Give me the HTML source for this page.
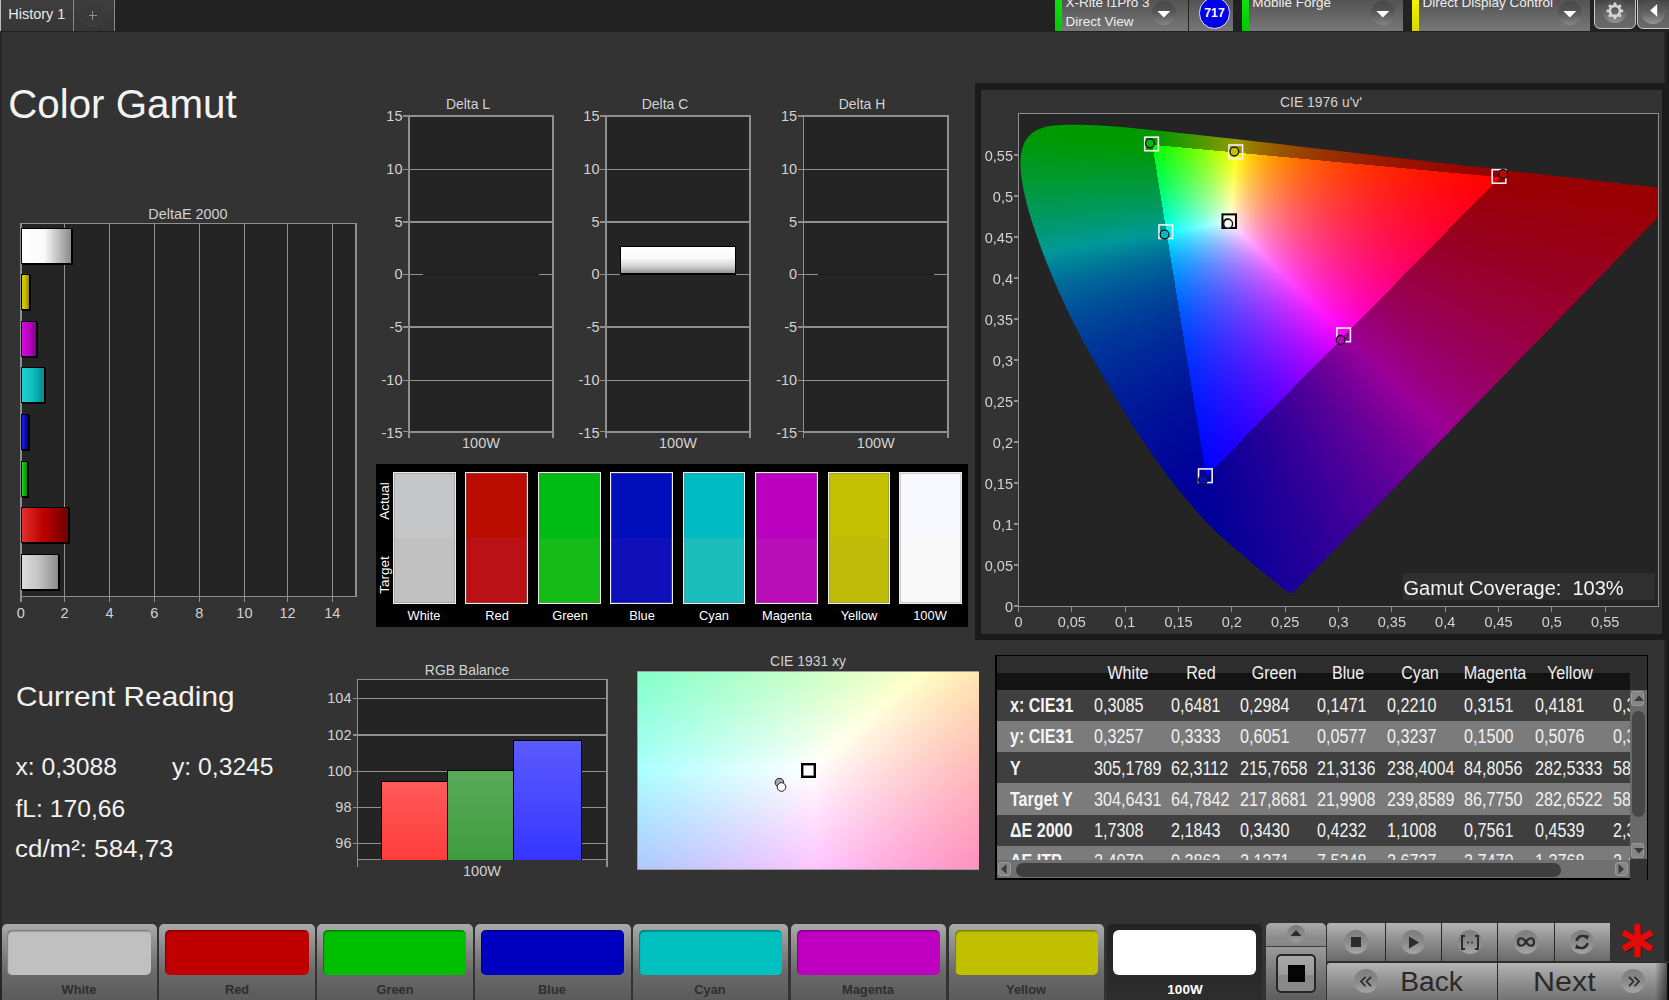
<!DOCTYPE html>
<html><head><meta charset="utf-8"><style>
html,body{margin:0;padding:0;}
body{width:1669px;height:1000px;overflow:hidden;position:relative;background:#333;font-family:"Liberation Sans",sans-serif;}
.r{position:absolute;box-sizing:border-box;}
svg.r{overflow:visible}
.t{position:absolute;white-space:nowrap;}
</style></head><body>
<div class="r" style="left:0.00px;top:0.00px;width:1669.00px;height:1000.00px;background:#333333"></div>
<div class="r" style="left:0.00px;top:32.00px;width:1.50px;height:968.00px;background:#262626"></div>
<div class="r" style="left:1664.00px;top:32.00px;width:5.00px;height:968.00px;background:linear-gradient(90deg,#2a2a2a,#141414)"></div>
<div class="r" style="left:0.00px;top:0.00px;width:1669.00px;height:32.00px;background:#222222"></div>
<div class="r" style="left:0.00px;top:0.00px;width:73.00px;height:31.00px;background:linear-gradient(#3e3e3e,#363636)"></div>
<div class="r" style="left:0.00px;top:0.00px;width:1.20px;height:31.00px;background:#bdbdbd"></div>
<div class="r" style="left:73.00px;top:0.00px;width:1.20px;height:31.00px;background:#8a8a8a"></div>
<div class="r" style="left:74.20px;top:0.00px;width:39.80px;height:31.00px;background:linear-gradient(#3e3e3e,#363636)"></div>
<div class="r" style="left:114.00px;top:0.00px;width:1.30px;height:31.00px;background:#8a8a8a"></div>
<div class="r" style="left:81px;top:4px;width:23px;height:23px;border-radius:50%;background:radial-gradient(circle at 50% 40%,#3a3a3a 55%,#444 100%)"></div>
<div class="t" style="left:8.20px;top:6.83px;font-size:14.5px;line-height:14.5px;color:#e8e8e8;font-weight:normal;">History 1</div>
<div class="r" style="left:88.50px;top:15.00px;width:8.00px;height:1.20px;background:#8e8e8e"></div>
<div class="r" style="left:91.90px;top:11.20px;width:1.20px;height:8.80px;background:#8e8e8e"></div>
<div class="r" style="left:1055.40px;top:0.00px;width:132.60px;height:31.00px;background:linear-gradient(#535353,#787878)"></div>
<div class="r" style="left:1055.40px;top:0.00px;width:7.00px;height:31.00px;background:linear-gradient(#10e010,#00c800)"></div>
<div class="r" style="left:1189.00px;top:0.00px;width:44.00px;height:31.00px;background:linear-gradient(#535353,#787878)"></div>
<div class="r" style="left:1241.50px;top:0.00px;width:161.70px;height:31.00px;background:linear-gradient(#535353,#787878)"></div>
<div class="r" style="left:1241.50px;top:0.00px;width:7.00px;height:31.00px;background:linear-gradient(#10e010,#00c800)"></div>
<div class="r" style="left:1411.50px;top:0.00px;width:178.50px;height:31.00px;background:linear-gradient(#535353,#787878)"></div>
<div class="r" style="left:1411.50px;top:0.00px;width:7.00px;height:31.00px;background:linear-gradient(#f4f400,#d8d800)"></div>
<div class="t" style="left:1065.60px;top:-3.63px;font-size:13.5px;line-height:13.5px;color:#eeeeee;font-weight:normal;">X-Rite i1Pro 3</div>
<div class="t" style="left:1065.60px;top:15.47px;font-size:13.5px;line-height:13.5px;color:#eeeeee;font-weight:normal;">Direct View</div>
<div class="t" style="left:1252.20px;top:-3.63px;font-size:13.5px;line-height:13.5px;color:#eeeeee;font-weight:normal;">Mobile Forge</div>
<div class="t" style="left:1422.50px;top:-3.63px;font-size:13.5px;line-height:13.5px;color:#eeeeee;font-weight:normal;">Direct Display Control</div>
<div class="r" style="left:1152.4px;top:1.0px;width:23.6px;height:23.6px;border-radius:50%;background:linear-gradient(#474747,#555 45%,#6a6a6a 70%,#858585)"></div>
<svg class="r" style="left:1157.4px;top:10.8px" width="14" height="8"><path d="M0.3 0 L13.3 0 L6.8 6.6 Z" fill="#fff"/></svg>
<div class="r" style="left:1371.3px;top:1.0px;width:23.6px;height:23.6px;border-radius:50%;background:linear-gradient(#474747,#555 45%,#6a6a6a 70%,#858585)"></div>
<svg class="r" style="left:1376.3px;top:10.8px" width="14" height="8"><path d="M0.3 0 L13.3 0 L6.8 6.6 Z" fill="#fff"/></svg>
<div class="r" style="left:1558.2px;top:1.0px;width:23.6px;height:23.6px;border-radius:50%;background:linear-gradient(#474747,#555 45%,#6a6a6a 70%,#858585)"></div>
<svg class="r" style="left:1563.2px;top:10.8px" width="14" height="8"><path d="M0.3 0 L13.3 0 L6.8 6.6 Z" fill="#fff"/></svg>
<div class="r" style="left:1198.6px;top:-2.9px;width:31.8px;height:31.8px;border-radius:50%;background:#0000e6;border:1.2px solid #e0e0ff"></div>
<div class="t" style="left:1214.50px;top:7.47px;font-size:12.2px;line-height:12.2px;color:#ffffff;font-weight:bold;transform:translateX(-50%) scaleX(1.0);transform-origin:50% 0;">717</div>
<div class="r" style="left:1593.7px;top:-3px;width:42px;height:31.7px;border:1.2px solid #c8c8c8;border-radius:0 0 6px 6px;background:linear-gradient(#3e3e3e,#5c5c5c 40%,#6a6a6a)"></div>
<div class="r" style="left:1603px;top:-0.8px;width:24px;height:24px;border-radius:50%;background:linear-gradient(#4c4c4c,#5c5c5c 45%,#7a7a7a 75%,#959595)"></div>
<svg class="r" style="left:1606px;top:2px" width="18" height="18"><g transform="translate(8.9,8.9)" fill="#d4d4d4"><rect x="-1.45" y="-8.3" width="2.9" height="4" rx="0.6" transform="rotate(0)"/><rect x="-1.45" y="-8.3" width="2.9" height="4" rx="0.6" transform="rotate(45)"/><rect x="-1.45" y="-8.3" width="2.9" height="4" rx="0.6" transform="rotate(90)"/><rect x="-1.45" y="-8.3" width="2.9" height="4" rx="0.6" transform="rotate(135)"/><rect x="-1.45" y="-8.3" width="2.9" height="4" rx="0.6" transform="rotate(180)"/><rect x="-1.45" y="-8.3" width="2.9" height="4" rx="0.6" transform="rotate(225)"/><rect x="-1.45" y="-8.3" width="2.9" height="4" rx="0.6" transform="rotate(270)"/><rect x="-1.45" y="-8.3" width="2.9" height="4" rx="0.6" transform="rotate(315)"/><path d="M6.4 0 A6.4 6.4 0 1 0 -6.4 0 A6.4 6.4 0 1 0 6.4 0 Z M3.7 0 A3.7 3.7 0 1 1 -3.7 0 A3.7 3.7 0 1 1 3.7 0 Z" fill-rule="evenodd"/></g></svg>
<div class="r" style="left:1636.8px;top:-3px;width:40px;height:31.7px;border:1.2px solid #c8c8c8;border-radius:0 0 6px 6px;background:linear-gradient(#3e3e3e,#5c5c5c 40%,#6a6a6a)"></div>
<div class="r" style="left:1641.3px;top:0px;width:23.5px;height:23.5px;border-radius:50%;background:linear-gradient(#4c4c4c,#5c5c5c 45%,#7a7a7a 75%,#959595)"></div>
<svg class="r" style="left:1649.8px;top:4px" width="8" height="14"><path d="M7.2 0 L7.2 12.8 L0.2 6.4 Z" fill="#fff"/></svg>
<div class="t" style="left:8.20px;top:85.09px;font-size:40.3px;line-height:40.3px;color:#f2f2f2;font-weight:normal;">Color Gamut</div>
<div class="t" style="left:188.30px;top:205.80px;font-size:15.0px;line-height:15.0px;color:#d2d2d2;font-weight:normal;transform:translateX(-50%) scaleX(0.96);transform-origin:50% 0;">DeltaE 2000</div>
<div class="r" style="left:20.80px;top:223.50px;width:335.40px;height:372.80px;background:#242424"></div>
<div class="r" style="left:63.80px;top:223.50px;width:1.40px;height:372.80px;background:#8f8f8f"></div>
<div class="r" style="left:108.80px;top:223.50px;width:1.40px;height:372.80px;background:#8f8f8f"></div>
<div class="r" style="left:153.70px;top:223.50px;width:1.40px;height:372.80px;background:#8f8f8f"></div>
<div class="r" style="left:198.60px;top:223.50px;width:1.40px;height:372.80px;background:#8f8f8f"></div>
<div class="r" style="left:243.70px;top:223.50px;width:1.40px;height:372.80px;background:#8f8f8f"></div>
<div class="r" style="left:286.80px;top:223.50px;width:1.40px;height:372.80px;background:#8f8f8f"></div>
<div class="r" style="left:331.60px;top:223.50px;width:1.40px;height:372.80px;background:#8f8f8f"></div>
<div class="r" style="left:20.00px;top:222.70px;width:337.00px;height:1.60px;background:#8f8f8f"></div>
<div class="r" style="left:20.00px;top:223.50px;width:1.60px;height:378.80px;background:#8f8f8f"></div>
<div class="r" style="left:355.40px;top:223.50px;width:1.60px;height:372.80px;background:#8f8f8f"></div>
<div class="r" style="left:20.80px;top:595.50px;width:336.20px;height:1.60px;background:#8f8f8f"></div>
<div class="r" style="left:20.10px;top:596.30px;width:1.40px;height:6.00px;background:#8f8f8f"></div>
<div class="t" style="left:20.80px;top:606.23px;font-size:14.5px;line-height:14.5px;color:#d2d2d2;font-weight:normal;transform:translateX(-50%) scaleX(1.0);transform-origin:50% 0;">0</div>
<div class="r" style="left:63.80px;top:596.30px;width:1.40px;height:6.00px;background:#8f8f8f"></div>
<div class="t" style="left:64.50px;top:606.23px;font-size:14.5px;line-height:14.5px;color:#d2d2d2;font-weight:normal;transform:translateX(-50%) scaleX(1.0);transform-origin:50% 0;">2</div>
<div class="r" style="left:108.80px;top:596.30px;width:1.40px;height:6.00px;background:#8f8f8f"></div>
<div class="t" style="left:109.50px;top:606.23px;font-size:14.5px;line-height:14.5px;color:#d2d2d2;font-weight:normal;transform:translateX(-50%) scaleX(1.0);transform-origin:50% 0;">4</div>
<div class="r" style="left:153.70px;top:596.30px;width:1.40px;height:6.00px;background:#8f8f8f"></div>
<div class="t" style="left:154.40px;top:606.23px;font-size:14.5px;line-height:14.5px;color:#d2d2d2;font-weight:normal;transform:translateX(-50%) scaleX(1.0);transform-origin:50% 0;">6</div>
<div class="r" style="left:198.60px;top:596.30px;width:1.40px;height:6.00px;background:#8f8f8f"></div>
<div class="t" style="left:199.30px;top:606.23px;font-size:14.5px;line-height:14.5px;color:#d2d2d2;font-weight:normal;transform:translateX(-50%) scaleX(1.0);transform-origin:50% 0;">8</div>
<div class="r" style="left:243.70px;top:596.30px;width:1.40px;height:6.00px;background:#8f8f8f"></div>
<div class="t" style="left:244.40px;top:606.23px;font-size:14.5px;line-height:14.5px;color:#d2d2d2;font-weight:normal;transform:translateX(-50%) scaleX(1.0);transform-origin:50% 0;">10</div>
<div class="r" style="left:286.80px;top:596.30px;width:1.40px;height:6.00px;background:#8f8f8f"></div>
<div class="t" style="left:287.50px;top:606.23px;font-size:14.5px;line-height:14.5px;color:#d2d2d2;font-weight:normal;transform:translateX(-50%) scaleX(1.0);transform-origin:50% 0;">12</div>
<div class="r" style="left:331.60px;top:596.30px;width:1.40px;height:6.00px;background:#8f8f8f"></div>
<div class="t" style="left:332.30px;top:606.23px;font-size:14.5px;line-height:14.5px;color:#d2d2d2;font-weight:normal;transform:translateX(-50%) scaleX(1.0);transform-origin:50% 0;">14</div>
<div class="r" style="left:21.3px;top:227.5px;width:50.8px;height:36px;border:1px solid #000;background:linear-gradient(90deg,#ffffff,#fafafa 45%,#8a8a8a);box-shadow:1px 1px 0 #000"></div>
<div class="r" style="left:21.3px;top:274.1px;width:8.9px;height:36px;border:1px solid #000;background:linear-gradient(90deg,#d0c800,#c8c000 45%,#908800);box-shadow:1px 1px 0 #000"></div>
<div class="r" style="left:21.3px;top:320.7px;width:15.7px;height:36px;border:1px solid #000;background:linear-gradient(90deg,#d010d8,#c000c8 45%,#800088);box-shadow:1px 1px 0 #000"></div>
<div class="r" style="left:21.3px;top:367.3px;width:23.3px;height:36px;border:1px solid #000;background:linear-gradient(90deg,#20d0d0,#10c0c0 45%,#008c8c);box-shadow:1px 1px 0 #000"></div>
<div class="r" style="left:21.3px;top:413.9px;width:8.2px;height:36px;border:1px solid #000;background:linear-gradient(90deg,#2020d8,#1010c0 45%,#000088);box-shadow:1px 1px 0 #000"></div>
<div class="r" style="left:21.3px;top:460.5px;width:6.4px;height:36px;border:1px solid #000;background:linear-gradient(90deg,#20d020,#10b810 45%,#008800);box-shadow:1px 1px 0 #000"></div>
<div class="r" style="left:21.3px;top:507.1px;width:47.5px;height:36px;border:1px solid #000;background:linear-gradient(90deg,#e03030,#c00000 45%,#700000);box-shadow:1px 1px 0 #000"></div>
<div class="r" style="left:21.3px;top:553.7px;width:37.4px;height:36px;border:1px solid #000;background:linear-gradient(90deg,#dcdcdc,#c4c4c4 45%,#8c8c8c);box-shadow:1px 1px 0 #000"></div>
<div class="t" style="left:467.50px;top:96.73px;font-size:14.5px;line-height:14.5px;color:#d2d2d2;font-weight:normal;transform:translateX(-50%) scaleX(0.96);transform-origin:50% 0;">Delta L</div>
<div class="r" style="left:409.00px;top:116.00px;width:144.00px;height:315.50px;background:#242424"></div>
<div class="r" style="left:409.00px;top:115.30px;width:144.00px;height:1.40px;background:#8f8f8f"></div>
<div class="r" style="left:403.00px;top:115.30px;width:6.00px;height:1.40px;background:#8f8f8f"></div>
<div class="t" style="left:402.50px;top:108.93px;font-size:14.5px;line-height:14.5px;color:#d2d2d2;font-weight:normal;transform:translateX(-100%) scaleX(1.0);transform-origin:100% 0;">15</div>
<div class="r" style="left:409.00px;top:168.60px;width:144.00px;height:1.40px;background:#8f8f8f"></div>
<div class="r" style="left:403.00px;top:168.60px;width:6.00px;height:1.40px;background:#8f8f8f"></div>
<div class="t" style="left:402.50px;top:162.23px;font-size:14.5px;line-height:14.5px;color:#d2d2d2;font-weight:normal;transform:translateX(-100%) scaleX(1.0);transform-origin:100% 0;">10</div>
<div class="r" style="left:409.00px;top:221.30px;width:144.00px;height:1.40px;background:#8f8f8f"></div>
<div class="r" style="left:403.00px;top:221.30px;width:6.00px;height:1.40px;background:#8f8f8f"></div>
<div class="t" style="left:402.50px;top:214.93px;font-size:14.5px;line-height:14.5px;color:#d2d2d2;font-weight:normal;transform:translateX(-100%) scaleX(1.0);transform-origin:100% 0;">5</div>
<div class="r" style="left:409.00px;top:273.60px;width:144.00px;height:1.40px;background:#8f8f8f"></div>
<div class="r" style="left:403.00px;top:273.60px;width:6.00px;height:1.40px;background:#8f8f8f"></div>
<div class="t" style="left:402.50px;top:267.23px;font-size:14.5px;line-height:14.5px;color:#d2d2d2;font-weight:normal;transform:translateX(-100%) scaleX(1.0);transform-origin:100% 0;">0</div>
<div class="r" style="left:409.00px;top:326.30px;width:144.00px;height:1.40px;background:#8f8f8f"></div>
<div class="r" style="left:403.00px;top:326.30px;width:6.00px;height:1.40px;background:#8f8f8f"></div>
<div class="t" style="left:402.50px;top:319.93px;font-size:14.5px;line-height:14.5px;color:#d2d2d2;font-weight:normal;transform:translateX(-100%) scaleX(1.0);transform-origin:100% 0;">-5</div>
<div class="r" style="left:409.00px;top:379.80px;width:144.00px;height:1.40px;background:#8f8f8f"></div>
<div class="r" style="left:403.00px;top:379.80px;width:6.00px;height:1.40px;background:#8f8f8f"></div>
<div class="t" style="left:402.50px;top:373.43px;font-size:14.5px;line-height:14.5px;color:#d2d2d2;font-weight:normal;transform:translateX(-100%) scaleX(1.0);transform-origin:100% 0;">-10</div>
<div class="r" style="left:409.00px;top:430.80px;width:144.00px;height:1.40px;background:#8f8f8f"></div>
<div class="r" style="left:403.00px;top:430.80px;width:6.00px;height:1.40px;background:#8f8f8f"></div>
<div class="t" style="left:402.50px;top:425.73px;font-size:14.5px;line-height:14.5px;color:#d2d2d2;font-weight:normal;transform:translateX(-100%) scaleX(1.0);transform-origin:100% 0;">-15</div>
<div class="r" style="left:408.20px;top:115.20px;width:1.60px;height:322.80px;background:#8f8f8f"></div>
<div class="r" style="left:552.20px;top:115.20px;width:1.60px;height:322.80px;background:#8f8f8f"></div>
<div class="r" style="left:409.00px;top:115.00px;width:144.00px;height:2.00px;background:#8f8f8f"></div>
<div class="r" style="left:409.00px;top:430.50px;width:144.00px;height:2.00px;background:#8f8f8f"></div>
<div class="t" style="left:481.00px;top:435.73px;font-size:14.5px;line-height:14.5px;color:#d2d2d2;font-weight:normal;transform:translateX(-50%) scaleX(1.0);transform-origin:50% 0;">100W</div>
<div class="r" style="left:423.00px;top:273.60px;width:116.00px;height:1.60px;background:#1a1a1a"></div>
<div class="t" style="left:665.00px;top:96.73px;font-size:14.5px;line-height:14.5px;color:#d2d2d2;font-weight:normal;transform:translateX(-50%) scaleX(0.96);transform-origin:50% 0;">Delta C</div>
<div class="r" style="left:606.00px;top:116.00px;width:144.00px;height:315.50px;background:#242424"></div>
<div class="r" style="left:606.00px;top:115.30px;width:144.00px;height:1.40px;background:#8f8f8f"></div>
<div class="r" style="left:600.00px;top:115.30px;width:6.00px;height:1.40px;background:#8f8f8f"></div>
<div class="t" style="left:599.50px;top:108.93px;font-size:14.5px;line-height:14.5px;color:#d2d2d2;font-weight:normal;transform:translateX(-100%) scaleX(1.0);transform-origin:100% 0;">15</div>
<div class="r" style="left:606.00px;top:168.60px;width:144.00px;height:1.40px;background:#8f8f8f"></div>
<div class="r" style="left:600.00px;top:168.60px;width:6.00px;height:1.40px;background:#8f8f8f"></div>
<div class="t" style="left:599.50px;top:162.23px;font-size:14.5px;line-height:14.5px;color:#d2d2d2;font-weight:normal;transform:translateX(-100%) scaleX(1.0);transform-origin:100% 0;">10</div>
<div class="r" style="left:606.00px;top:221.30px;width:144.00px;height:1.40px;background:#8f8f8f"></div>
<div class="r" style="left:600.00px;top:221.30px;width:6.00px;height:1.40px;background:#8f8f8f"></div>
<div class="t" style="left:599.50px;top:214.93px;font-size:14.5px;line-height:14.5px;color:#d2d2d2;font-weight:normal;transform:translateX(-100%) scaleX(1.0);transform-origin:100% 0;">5</div>
<div class="r" style="left:606.00px;top:273.60px;width:144.00px;height:1.40px;background:#8f8f8f"></div>
<div class="r" style="left:600.00px;top:273.60px;width:6.00px;height:1.40px;background:#8f8f8f"></div>
<div class="t" style="left:599.50px;top:267.23px;font-size:14.5px;line-height:14.5px;color:#d2d2d2;font-weight:normal;transform:translateX(-100%) scaleX(1.0);transform-origin:100% 0;">0</div>
<div class="r" style="left:606.00px;top:326.30px;width:144.00px;height:1.40px;background:#8f8f8f"></div>
<div class="r" style="left:600.00px;top:326.30px;width:6.00px;height:1.40px;background:#8f8f8f"></div>
<div class="t" style="left:599.50px;top:319.93px;font-size:14.5px;line-height:14.5px;color:#d2d2d2;font-weight:normal;transform:translateX(-100%) scaleX(1.0);transform-origin:100% 0;">-5</div>
<div class="r" style="left:606.00px;top:379.80px;width:144.00px;height:1.40px;background:#8f8f8f"></div>
<div class="r" style="left:600.00px;top:379.80px;width:6.00px;height:1.40px;background:#8f8f8f"></div>
<div class="t" style="left:599.50px;top:373.43px;font-size:14.5px;line-height:14.5px;color:#d2d2d2;font-weight:normal;transform:translateX(-100%) scaleX(1.0);transform-origin:100% 0;">-10</div>
<div class="r" style="left:606.00px;top:430.80px;width:144.00px;height:1.40px;background:#8f8f8f"></div>
<div class="r" style="left:600.00px;top:430.80px;width:6.00px;height:1.40px;background:#8f8f8f"></div>
<div class="t" style="left:599.50px;top:425.73px;font-size:14.5px;line-height:14.5px;color:#d2d2d2;font-weight:normal;transform:translateX(-100%) scaleX(1.0);transform-origin:100% 0;">-15</div>
<div class="r" style="left:605.20px;top:115.20px;width:1.60px;height:322.80px;background:#8f8f8f"></div>
<div class="r" style="left:749.20px;top:115.20px;width:1.60px;height:322.80px;background:#8f8f8f"></div>
<div class="r" style="left:606.00px;top:115.00px;width:144.00px;height:2.00px;background:#8f8f8f"></div>
<div class="r" style="left:606.00px;top:430.50px;width:144.00px;height:2.00px;background:#8f8f8f"></div>
<div class="t" style="left:678.00px;top:435.73px;font-size:14.5px;line-height:14.5px;color:#d2d2d2;font-weight:normal;transform:translateX(-50%) scaleX(1.0);transform-origin:50% 0;">100W</div>
<div class="t" style="left:862.00px;top:96.73px;font-size:14.5px;line-height:14.5px;color:#d2d2d2;font-weight:normal;transform:translateX(-50%) scaleX(0.96);transform-origin:50% 0;">Delta H</div>
<div class="r" style="left:803.60px;top:116.00px;width:144.40px;height:315.50px;background:#242424"></div>
<div class="r" style="left:803.60px;top:115.30px;width:144.40px;height:1.40px;background:#8f8f8f"></div>
<div class="r" style="left:797.60px;top:115.30px;width:6.00px;height:1.40px;background:#8f8f8f"></div>
<div class="t" style="left:797.10px;top:108.93px;font-size:14.5px;line-height:14.5px;color:#d2d2d2;font-weight:normal;transform:translateX(-100%) scaleX(1.0);transform-origin:100% 0;">15</div>
<div class="r" style="left:803.60px;top:168.60px;width:144.40px;height:1.40px;background:#8f8f8f"></div>
<div class="r" style="left:797.60px;top:168.60px;width:6.00px;height:1.40px;background:#8f8f8f"></div>
<div class="t" style="left:797.10px;top:162.23px;font-size:14.5px;line-height:14.5px;color:#d2d2d2;font-weight:normal;transform:translateX(-100%) scaleX(1.0);transform-origin:100% 0;">10</div>
<div class="r" style="left:803.60px;top:221.30px;width:144.40px;height:1.40px;background:#8f8f8f"></div>
<div class="r" style="left:797.60px;top:221.30px;width:6.00px;height:1.40px;background:#8f8f8f"></div>
<div class="t" style="left:797.10px;top:214.93px;font-size:14.5px;line-height:14.5px;color:#d2d2d2;font-weight:normal;transform:translateX(-100%) scaleX(1.0);transform-origin:100% 0;">5</div>
<div class="r" style="left:803.60px;top:273.60px;width:144.40px;height:1.40px;background:#8f8f8f"></div>
<div class="r" style="left:797.60px;top:273.60px;width:6.00px;height:1.40px;background:#8f8f8f"></div>
<div class="t" style="left:797.10px;top:267.23px;font-size:14.5px;line-height:14.5px;color:#d2d2d2;font-weight:normal;transform:translateX(-100%) scaleX(1.0);transform-origin:100% 0;">0</div>
<div class="r" style="left:803.60px;top:326.30px;width:144.40px;height:1.40px;background:#8f8f8f"></div>
<div class="r" style="left:797.60px;top:326.30px;width:6.00px;height:1.40px;background:#8f8f8f"></div>
<div class="t" style="left:797.10px;top:319.93px;font-size:14.5px;line-height:14.5px;color:#d2d2d2;font-weight:normal;transform:translateX(-100%) scaleX(1.0);transform-origin:100% 0;">-5</div>
<div class="r" style="left:803.60px;top:379.80px;width:144.40px;height:1.40px;background:#8f8f8f"></div>
<div class="r" style="left:797.60px;top:379.80px;width:6.00px;height:1.40px;background:#8f8f8f"></div>
<div class="t" style="left:797.10px;top:373.43px;font-size:14.5px;line-height:14.5px;color:#d2d2d2;font-weight:normal;transform:translateX(-100%) scaleX(1.0);transform-origin:100% 0;">-10</div>
<div class="r" style="left:803.60px;top:430.80px;width:144.40px;height:1.40px;background:#8f8f8f"></div>
<div class="r" style="left:797.60px;top:430.80px;width:6.00px;height:1.40px;background:#8f8f8f"></div>
<div class="t" style="left:797.10px;top:425.73px;font-size:14.5px;line-height:14.5px;color:#d2d2d2;font-weight:normal;transform:translateX(-100%) scaleX(1.0);transform-origin:100% 0;">-15</div>
<div class="r" style="left:802.80px;top:115.20px;width:1.60px;height:322.80px;background:#8f8f8f"></div>
<div class="r" style="left:947.20px;top:115.20px;width:1.60px;height:322.80px;background:#8f8f8f"></div>
<div class="r" style="left:803.60px;top:115.00px;width:144.40px;height:2.00px;background:#8f8f8f"></div>
<div class="r" style="left:803.60px;top:430.50px;width:144.40px;height:2.00px;background:#8f8f8f"></div>
<div class="t" style="left:875.80px;top:435.73px;font-size:14.5px;line-height:14.5px;color:#d2d2d2;font-weight:normal;transform:translateX(-50%) scaleX(1.0);transform-origin:50% 0;">100W</div>
<div class="r" style="left:817.60px;top:273.60px;width:116.40px;height:1.60px;background:#1a1a1a"></div>
<div class="r" style="left:620.1px;top:246.2px;width:116px;height:28.4px;border:1.6px solid #000;border-bottom-width:2px;background:linear-gradient(#ffffff,#fafafa 42%,#d0d0d0 75%,#959595)"></div>
<div class="r" style="left:376.00px;top:464.00px;width:591.50px;height:163.00px;background:#000"></div>
<div class="r" style="left:392.8px;top:472px;width:62.8px;height:131.6px;border:1px solid #ececec;box-shadow:inset 0 0 0 1px rgba(120,120,120,0.35);background:linear-gradient(#c4c6c8 50%,#c1c1c1 50%)"></div>
<div class="t" style="left:424.20px;top:608.57px;font-size:13.5px;line-height:13.5px;color:#ffffff;font-weight:normal;transform:translateX(-50%) scaleX(0.95);transform-origin:50% 0;">White</div>
<div class="r" style="left:465.3px;top:472px;width:62.8px;height:131.6px;border:1px solid #ececec;box-shadow:inset 0 0 0 1px rgba(120,120,120,0.35);background:linear-gradient(#bb0c00 50%,#bb1015 50%)"></div>
<div class="t" style="left:496.70px;top:608.57px;font-size:13.5px;line-height:13.5px;color:#ffffff;font-weight:normal;transform:translateX(-50%) scaleX(0.95);transform-origin:50% 0;">Red</div>
<div class="r" style="left:538.2px;top:472px;width:62.8px;height:131.6px;border:1px solid #ececec;box-shadow:inset 0 0 0 1px rgba(120,120,120,0.35);background:linear-gradient(#00bb12 50%,#15bb17 50%)"></div>
<div class="t" style="left:569.60px;top:608.57px;font-size:13.5px;line-height:13.5px;color:#ffffff;font-weight:normal;transform:translateX(-50%) scaleX(0.95);transform-origin:50% 0;">Green</div>
<div class="r" style="left:610.3px;top:472px;width:62.8px;height:131.6px;border:1px solid #ececec;box-shadow:inset 0 0 0 1px rgba(120,120,120,0.35);background:linear-gradient(#000fbb 50%,#1010bb 50%)"></div>
<div class="t" style="left:641.70px;top:608.57px;font-size:13.5px;line-height:13.5px;color:#ffffff;font-weight:normal;transform:translateX(-50%) scaleX(0.95);transform-origin:50% 0;">Blue</div>
<div class="r" style="left:682.5px;top:472px;width:62.8px;height:131.6px;border:1px solid #ececec;box-shadow:inset 0 0 0 1px rgba(120,120,120,0.35);background:linear-gradient(#00bbc1 50%,#1cbdbd 50%)"></div>
<div class="t" style="left:713.90px;top:608.57px;font-size:13.5px;line-height:13.5px;color:#ffffff;font-weight:normal;transform:translateX(-50%) scaleX(0.95);transform-origin:50% 0;">Cyan</div>
<div class="r" style="left:755.3px;top:472px;width:62.8px;height:131.6px;border:1px solid #ececec;box-shadow:inset 0 0 0 1px rgba(120,120,120,0.35);background:linear-gradient(#bb00c0 50%,#bb0ebb 50%)"></div>
<div class="t" style="left:786.70px;top:608.57px;font-size:13.5px;line-height:13.5px;color:#ffffff;font-weight:normal;transform:translateX(-50%) scaleX(0.95);transform-origin:50% 0;">Magenta</div>
<div class="r" style="left:827.5px;top:472px;width:62.8px;height:131.6px;border:1px solid #ececec;box-shadow:inset 0 0 0 1px rgba(120,120,120,0.35);background:linear-gradient(#c2c000 50%,#bfbd0a 50%)"></div>
<div class="t" style="left:858.90px;top:608.57px;font-size:13.5px;line-height:13.5px;color:#ffffff;font-weight:normal;transform:translateX(-50%) scaleX(0.95);transform-origin:50% 0;">Yellow</div>
<div class="r" style="left:899.0px;top:472px;width:62.8px;height:131.6px;border:1px solid #ececec;box-shadow:inset 0 0 0 1px rgba(120,120,120,0.35);background:linear-gradient(#f8f9ff 50%,#f9f9f9 50%)"></div>
<div class="t" style="left:930.40px;top:608.57px;font-size:13.5px;line-height:13.5px;color:#ffffff;font-weight:normal;transform:translateX(-50%) scaleX(0.95);transform-origin:50% 0;">100W</div>
<div class="t" style="left:384.2px;top:501px;font-size:13.5px;line-height:13px;color:#fff;transform:translate(-50%,-50%) rotate(-90deg)">Actual</div>
<div class="t" style="left:384.2px;top:574.6px;font-size:13.5px;line-height:13px;color:#fff;transform:translate(-50%,-50%) rotate(-90deg)">Target</div>
<div class="r" style="left:974.50px;top:83.00px;width:694.50px;height:557.00px;background:#1b1b1b"></div>
<div class="r" style="left:980.50px;top:89.50px;width:681.50px;height:544.50px;background:#333333"></div>
<div class="t" style="left:1321.00px;top:94.73px;font-size:14.5px;line-height:14.5px;color:#d2d2d2;font-weight:normal;transform:translateX(-50%) scaleX(0.96);transform-origin:50% 0;">CIE 1976 u'v'</div>
<noscript><svg class="r" style="left:1018.5px;top:114px" width="640" height="492"><defs><clipPath id="lc"><path d="M273.9 478.4 C273.9 478.4 273.8 478.3 273.8 478.4 C273.7 478.4 273.6 478.6 273.5 478.7 C273.4 478.7 273.3 478.6 273.2 478.7 C273.0 478.7 272.9 478.9 272.8 478.9 C272.6 479.0 272.4 478.9 272.2 478.9 C272.0 478.9 271.8 478.9 271.5 478.9 C271.2 478.9 271.0 479.1 270.6 478.9 C270.2 478.8 269.8 478.6 269.0 478.2 C268.3 477.7 267.3 477.1 266.3 476.3 C265.2 475.5 264.1 474.7 262.5 473.4 C261.0 472.2 259.2 470.8 257.1 469.1 C255.1 467.4 252.9 465.4 250.3 463.3 C247.8 461.1 245.1 458.9 241.7 456.2 C238.4 453.5 234.6 450.4 230.5 446.9 C226.3 443.5 221.9 440.0 216.9 435.6 C211.9 431.2 206.4 426.5 200.2 420.6 C194.1 414.7 188.0 408.9 180.2 400.2 C172.5 391.5 163.3 380.8 153.7 368.2 C144.0 355.6 133.2 340.8 122.3 324.4 C111.5 308.0 99.5 288.8 88.3 269.9 C77.2 251.0 65.3 230.2 55.6 211.0 C45.9 191.7 37.2 171.8 30.0 154.4 C22.9 137.0 17.1 120.6 12.7 106.7 C8.3 92.9 5.6 81.3 3.7 71.3 C1.8 61.3 1.3 53.5 1.5 46.6 C1.7 39.7 3.0 34.3 5.0 29.6 C6.9 25.0 9.8 21.6 13.1 18.9 C16.4 16.2 20.4 14.6 24.7 13.4 C28.9 12.1 33.6 11.8 38.4 11.4 C43.2 10.9 48.4 10.9 53.4 10.9 C58.4 10.8 63.4 10.9 68.6 11.1 C73.8 11.2 79.0 11.5 84.5 11.8 C90.0 12.1 95.7 12.5 101.6 13.0 C107.6 13.5 113.7 14.1 120.2 14.7 C126.7 15.3 133.5 16.0 140.7 16.8 C147.8 17.5 155.4 18.3 163.3 19.2 C171.3 20.1 179.6 21.0 188.4 22.0 C197.2 23.0 206.4 24.0 216.1 25.1 C225.8 26.2 236.0 27.4 246.6 28.6 C257.2 29.8 268.3 31.1 279.8 32.4 C291.4 33.8 303.4 35.2 315.7 36.6 C328.0 38.0 340.8 39.4 353.6 40.9 C366.5 42.4 379.8 43.9 392.6 45.4 C405.4 46.9 418.0 48.3 430.4 49.7 C442.8 51.2 455.5 52.6 467.2 54.0 C478.8 55.3 490.0 56.6 500.5 57.8 C510.9 59.0 520.8 60.1 529.9 61.2 C539.0 62.2 547.3 63.2 555.0 64.0 C562.6 64.9 569.5 65.7 575.9 66.4 C582.4 67.2 588.1 67.8 593.6 68.5 C599.1 69.1 604.2 69.7 609.0 70.2 C613.7 70.8 618.0 71.3 621.9 71.7 C625.8 72.2 629.3 72.6 632.4 72.9 C635.5 73.3 638.1 73.6 640.5 73.9 C643.0 74.1 645.0 74.4 646.9 74.6 C648.7 74.8 650.3 75.0 651.6 75.1 C652.9 75.3 653.8 75.4 654.7 75.5 C655.7 75.6 656.2 75.7 657.3 75.8 C658.3 75.9 660.0 76.1 661.2 76.2 C662.5 76.4 664.4 76.6 665.0 76.7 Z"/></clipPath></defs><rect width="640" height="492" fill="#242424"/><g clip-path="url(#lc)" shape-rendering="crispEdges"><rect x="0" y="0" width="136" height="8" fill="#009600"/><rect x="136" y="0" width="8" height="8" fill="#0a9600"/><rect x="144" y="0" width="8" height="8" fill="#149600"/><rect x="152" y="0" width="8" height="8" fill="#1e9600"/><rect x="160" y="0" width="8" height="8" fill="#329600"/><rect x="168" y="0" width="8" height="8" fill="#3c9600"/><rect x="176" y="0" width="8" height="8" fill="#469600"/><rect x="184" y="0" width="8" height="8" fill="#509600"/><rect x="192" y="0" width="8" height="8" fill="#649600"/><rect x="200" y="0" width="8" height="8" fill="#6e9600"/><rect x="208" y="0" width="8" height="8" fill="#829600"/><rect x="216" y="0" width="8" height="8" fill="#969600"/><rect x="224" y="0" width="8" height="8" fill="#968200"/><rect x="232" y="0" width="8" height="8" fill="#967800"/><rect x="240" y="0" width="8" height="8" fill="#966e00"/><rect x="248" y="0" width="8" height="8" fill="#966400"/><rect x="256" y="0" width="8" height="8" fill="#965a00"/><rect x="264" y="0" width="8" height="8" fill="#965000"/><rect x="272" y="0" width="16" height="8" fill="#964600"/><rect x="288" y="0" width="16" height="8" fill="#963c00"/><rect x="304" y="0" width="16" height="8" fill="#963200"/><rect x="320" y="0" width="24" height="8" fill="#962800"/><rect x="344" y="0" width="32" height="8" fill="#961e00"/><rect x="376" y="0" width="40" height="8" fill="#961400"/><rect x="416" y="0" width="48" height="8" fill="#960a00"/><rect x="464" y="0" width="176" height="8" fill="#960000"/><rect x="0" y="8" width="136" height="8" fill="#009600"/><rect x="136" y="8" width="8" height="8" fill="#0a9600"/><rect x="144" y="8" width="8" height="8" fill="#149600"/><rect x="152" y="8" width="8" height="8" fill="#1e9600"/><rect x="160" y="8" width="8" height="8" fill="#289600"/><rect x="168" y="8" width="8" height="8" fill="#3c9600"/><rect x="176" y="8" width="8" height="8" fill="#469600"/><rect x="184" y="8" width="8" height="8" fill="#509600"/><rect x="192" y="8" width="8" height="8" fill="#649600"/><rect x="200" y="8" width="8" height="8" fill="#6e9600"/><rect x="208" y="8" width="8" height="8" fill="#829600"/><rect x="216" y="8" width="8" height="8" fill="#969600"/><rect x="224" y="8" width="8" height="8" fill="#968200"/><rect x="232" y="8" width="8" height="8" fill="#967800"/><rect x="240" y="8" width="8" height="8" fill="#966e00"/><rect x="248" y="8" width="8" height="8" fill="#966400"/><rect x="256" y="8" width="8" height="8" fill="#965a00"/><rect x="264" y="8" width="8" height="8" fill="#965000"/><rect x="272" y="8" width="16" height="8" fill="#964600"/><rect x="288" y="8" width="16" height="8" fill="#963c00"/><rect x="304" y="8" width="16" height="8" fill="#963200"/><rect x="320" y="8" width="24" height="8" fill="#962800"/><rect x="344" y="8" width="24" height="8" fill="#961e00"/><rect x="368" y="8" width="40" height="8" fill="#961400"/><rect x="408" y="8" width="56" height="8" fill="#960a00"/><rect x="464" y="8" width="176" height="8" fill="#960000"/><rect x="0" y="16" width="136" height="8" fill="#009600"/><rect x="136" y="16" width="8" height="8" fill="#0a9600"/><rect x="144" y="16" width="8" height="8" fill="#149600"/><rect x="152" y="16" width="8" height="8" fill="#1e9600"/><rect x="160" y="16" width="8" height="8" fill="#289600"/><rect x="168" y="16" width="8" height="8" fill="#3c9600"/><rect x="176" y="16" width="8" height="8" fill="#469600"/><rect x="184" y="16" width="8" height="8" fill="#509600"/><rect x="192" y="16" width="8" height="8" fill="#649600"/><rect x="200" y="16" width="8" height="8" fill="#789600"/><rect x="208" y="16" width="8" height="8" fill="#829600"/><rect x="216" y="16" width="8" height="8" fill="#969600"/><rect x="224" y="16" width="8" height="8" fill="#968200"/><rect x="232" y="16" width="8" height="8" fill="#967800"/><rect x="240" y="16" width="8" height="8" fill="#966e00"/><rect x="248" y="16" width="16" height="8" fill="#965a00"/><rect x="264" y="16" width="8" height="8" fill="#965000"/><rect x="272" y="16" width="8" height="8" fill="#964600"/><rect x="280" y="16" width="16" height="8" fill="#963c00"/><rect x="296" y="16" width="24" height="8" fill="#963200"/><rect x="320" y="16" width="16" height="8" fill="#962800"/><rect x="336" y="16" width="32" height="8" fill="#961e00"/><rect x="368" y="16" width="32" height="8" fill="#961400"/><rect x="400" y="16" width="56" height="8" fill="#960a00"/><rect x="456" y="16" width="184" height="8" fill="#960000"/><rect x="0" y="24" width="136" height="8" fill="#009600"/><rect x="136" y="24" width="8" height="8" fill="#0a9600"/><rect x="144" y="24" width="8" height="8" fill="#149600"/><rect x="152" y="24" width="8" height="8" fill="#1e9600"/><rect x="160" y="24" width="8" height="8" fill="#289600"/><rect x="168" y="24" width="8" height="8" fill="#3c9600"/><rect x="176" y="24" width="8" height="8" fill="#469600"/><rect x="184" y="24" width="8" height="8" fill="#509600"/><rect x="192" y="24" width="8" height="8" fill="#649600"/><rect x="200" y="24" width="8" height="8" fill="#789600"/><rect x="208" y="24" width="8" height="8" fill="#829600"/><rect x="216" y="24" width="8" height="8" fill="#969600"/><rect x="224" y="24" width="8" height="8" fill="#968200"/><rect x="232" y="24" width="8" height="8" fill="#967800"/><rect x="240" y="24" width="8" height="8" fill="#966400"/><rect x="248" y="24" width="8" height="8" fill="#965a00"/><rect x="256" y="24" width="16" height="8" fill="#965000"/><rect x="272" y="24" width="8" height="8" fill="#964600"/><rect x="280" y="24" width="16" height="8" fill="#963c00"/><rect x="296" y="24" width="16" height="8" fill="#963200"/><rect x="312" y="24" width="24" height="8" fill="#962800"/><rect x="336" y="24" width="24" height="8" fill="#961e00"/><rect x="360" y="24" width="40" height="8" fill="#961400"/><rect x="400" y="24" width="48" height="8" fill="#960a00"/><rect x="448" y="24" width="192" height="8" fill="#960000"/><rect x="0" y="32" width="104" height="8" fill="#00960a"/><rect x="104" y="32" width="32" height="8" fill="#009600"/><rect x="136" y="32" width="8" height="8" fill="#0afa0a"/><rect x="144" y="32" width="8" height="8" fill="#1efa00"/><rect x="152" y="32" width="8" height="8" fill="#32fa00"/><rect x="160" y="32" width="8" height="8" fill="#46fa00"/><rect x="168" y="32" width="8" height="8" fill="#64fa00"/><rect x="176" y="32" width="8" height="8" fill="#78fa00"/><rect x="184" y="32" width="8" height="8" fill="#8cfa00"/><rect x="192" y="32" width="8" height="8" fill="#649600"/><rect x="200" y="32" width="8" height="8" fill="#789600"/><rect x="208" y="32" width="8" height="8" fill="#8c9600"/><rect x="216" y="32" width="8" height="8" fill="#968c00"/><rect x="224" y="32" width="8" height="8" fill="#968200"/><rect x="232" y="32" width="8" height="8" fill="#966e00"/><rect x="240" y="32" width="8" height="8" fill="#966400"/><rect x="248" y="32" width="8" height="8" fill="#965a00"/><rect x="256" y="32" width="8" height="8" fill="#965000"/><rect x="264" y="32" width="16" height="8" fill="#964600"/><rect x="280" y="32" width="16" height="8" fill="#963c00"/><rect x="296" y="32" width="16" height="8" fill="#963200"/><rect x="312" y="32" width="16" height="8" fill="#962800"/><rect x="328" y="32" width="32" height="8" fill="#961e00"/><rect x="360" y="32" width="32" height="8" fill="#961400"/><rect x="392" y="32" width="48" height="8" fill="#960a00"/><rect x="440" y="32" width="200" height="8" fill="#960000"/><rect x="0" y="40" width="112" height="8" fill="#009614"/><rect x="112" y="40" width="24" height="8" fill="#00960a"/><rect x="136" y="40" width="8" height="8" fill="#0afa14"/><rect x="144" y="40" width="8" height="8" fill="#1efa14"/><rect x="152" y="40" width="8" height="8" fill="#32fa14"/><rect x="160" y="40" width="8" height="8" fill="#46fa14"/><rect x="168" y="40" width="8" height="8" fill="#5afa14"/><rect x="176" y="40" width="8" height="8" fill="#78fa14"/><rect x="184" y="40" width="8" height="8" fill="#8cfa14"/><rect x="192" y="40" width="8" height="8" fill="#aafa14"/><rect x="200" y="40" width="8" height="8" fill="#c8fa0a"/><rect x="208" y="40" width="8" height="8" fill="#e6fa0a"/><rect x="216" y="40" width="8" height="8" fill="#faf00a"/><rect x="224" y="40" width="8" height="8" fill="#fad20a"/><rect x="232" y="40" width="8" height="8" fill="#fabe00"/><rect x="240" y="40" width="8" height="8" fill="#faaa00"/><rect x="248" y="40" width="8" height="8" fill="#fa9600"/><rect x="256" y="40" width="8" height="8" fill="#fa8c00"/><rect x="264" y="40" width="8" height="8" fill="#fa7800"/><rect x="272" y="40" width="8" height="8" fill="#964600"/><rect x="280" y="40" width="8" height="8" fill="#963c00"/><rect x="288" y="40" width="16" height="8" fill="#963200"/><rect x="304" y="40" width="24" height="8" fill="#962800"/><rect x="328" y="40" width="24" height="8" fill="#961e00"/><rect x="352" y="40" width="40" height="8" fill="#961400"/><rect x="392" y="40" width="40" height="8" fill="#960a00"/><rect x="432" y="40" width="208" height="8" fill="#960000"/><rect x="0" y="48" width="128" height="8" fill="#00961e"/><rect x="128" y="48" width="8" height="8" fill="#009614"/><rect x="136" y="48" width="8" height="8" fill="#00fa28"/><rect x="144" y="48" width="8" height="8" fill="#14fa28"/><rect x="152" y="48" width="8" height="8" fill="#32fa28"/><rect x="160" y="48" width="8" height="8" fill="#46fa28"/><rect x="168" y="48" width="8" height="8" fill="#5afa28"/><rect x="176" y="48" width="8" height="8" fill="#78fa28"/><rect x="184" y="48" width="8" height="8" fill="#8cfa28"/><rect x="192" y="48" width="8" height="8" fill="#aafa28"/><rect x="200" y="48" width="8" height="8" fill="#c8fa28"/><rect x="208" y="48" width="8" height="8" fill="#e6fa28"/><rect x="216" y="48" width="8" height="8" fill="#faf01e"/><rect x="224" y="48" width="8" height="8" fill="#fad21e"/><rect x="232" y="48" width="8" height="8" fill="#fabe14"/><rect x="240" y="48" width="8" height="8" fill="#faaa14"/><rect x="248" y="48" width="8" height="8" fill="#fa9614"/><rect x="256" y="48" width="8" height="8" fill="#fa820a"/><rect x="264" y="48" width="8" height="8" fill="#fa780a"/><rect x="272" y="48" width="8" height="8" fill="#fa6e0a"/><rect x="280" y="48" width="8" height="8" fill="#fa640a"/><rect x="288" y="48" width="8" height="8" fill="#fa5a0a"/><rect x="296" y="48" width="8" height="8" fill="#fa5000"/><rect x="304" y="48" width="16" height="8" fill="#fa4600"/><rect x="320" y="48" width="16" height="8" fill="#fa3c00"/><rect x="336" y="48" width="16" height="8" fill="#fa3200"/><rect x="352" y="48" width="8" height="8" fill="#fa2800"/><rect x="360" y="48" width="24" height="8" fill="#961400"/><rect x="384" y="48" width="48" height="8" fill="#960a00"/><rect x="432" y="48" width="208" height="8" fill="#960000"/><rect x="0" y="56" width="136" height="8" fill="#009628"/><rect x="136" y="56" width="8" height="8" fill="#00fa3c"/><rect x="144" y="56" width="8" height="8" fill="#14fa3c"/><rect x="152" y="56" width="8" height="8" fill="#28fa3c"/><rect x="160" y="56" width="8" height="8" fill="#46fa3c"/><rect x="168" y="56" width="8" height="8" fill="#5afa3c"/><rect x="176" y="56" width="8" height="8" fill="#78fa3c"/><rect x="184" y="56" width="8" height="8" fill="#8cfa3c"/><rect x="192" y="56" width="8" height="8" fill="#aafa3c"/><rect x="200" y="56" width="8" height="8" fill="#c8fa3c"/><rect x="208" y="56" width="8" height="8" fill="#f0fa3c"/><rect x="216" y="56" width="8" height="8" fill="#fae63c"/><rect x="224" y="56" width="8" height="8" fill="#fac832"/><rect x="232" y="56" width="8" height="8" fill="#fab428"/><rect x="240" y="56" width="8" height="8" fill="#faa028"/><rect x="248" y="56" width="8" height="8" fill="#fa961e"/><rect x="256" y="56" width="8" height="8" fill="#fa821e"/><rect x="264" y="56" width="8" height="8" fill="#fa781e"/><rect x="272" y="56" width="8" height="8" fill="#fa6e14"/><rect x="280" y="56" width="8" height="8" fill="#fa6414"/><rect x="288" y="56" width="8" height="8" fill="#fa5a14"/><rect x="296" y="56" width="8" height="8" fill="#fa5014"/><rect x="304" y="56" width="8" height="8" fill="#fa460a"/><rect x="312" y="56" width="16" height="8" fill="#fa3c0a"/><rect x="328" y="56" width="16" height="8" fill="#fa320a"/><rect x="344" y="56" width="8" height="8" fill="#fa280a"/><rect x="352" y="56" width="8" height="8" fill="#fa2800"/><rect x="360" y="56" width="24" height="8" fill="#fa1e00"/><rect x="384" y="56" width="24" height="8" fill="#fa1400"/><rect x="408" y="56" width="40" height="8" fill="#fa0a00"/><rect x="448" y="56" width="192" height="8" fill="#960000"/><rect x="0" y="64" width="136" height="8" fill="#009632"/><rect x="136" y="64" width="8" height="8" fill="#00fa5a"/><rect x="144" y="64" width="8" height="8" fill="#14fa5a"/><rect x="152" y="64" width="8" height="8" fill="#28fa5a"/><rect x="160" y="64" width="8" height="8" fill="#46fa5a"/><rect x="168" y="64" width="8" height="8" fill="#5afa5a"/><rect x="176" y="64" width="8" height="8" fill="#78fa5a"/><rect x="184" y="64" width="8" height="8" fill="#8cfa5a"/><rect x="192" y="64" width="8" height="8" fill="#aafa5a"/><rect x="200" y="64" width="8" height="8" fill="#d2fa5a"/><rect x="208" y="64" width="8" height="8" fill="#f0fa5a"/><rect x="216" y="64" width="8" height="8" fill="#fae650"/><rect x="224" y="64" width="8" height="8" fill="#fac846"/><rect x="232" y="64" width="8" height="8" fill="#fab43c"/><rect x="240" y="64" width="8" height="8" fill="#faa03c"/><rect x="248" y="64" width="8" height="8" fill="#fa8c32"/><rect x="256" y="64" width="8" height="8" fill="#fa8232"/><rect x="264" y="64" width="8" height="8" fill="#fa6e28"/><rect x="272" y="64" width="8" height="8" fill="#fa6428"/><rect x="280" y="64" width="8" height="8" fill="#fa5a1e"/><rect x="288" y="64" width="16" height="8" fill="#fa501e"/><rect x="304" y="64" width="8" height="8" fill="#fa4614"/><rect x="312" y="64" width="16" height="8" fill="#fa3c14"/><rect x="328" y="64" width="16" height="8" fill="#fa3214"/><rect x="344" y="64" width="8" height="8" fill="#fa2814"/><rect x="352" y="64" width="8" height="8" fill="#fa280a"/><rect x="360" y="64" width="16" height="8" fill="#fa1e0a"/><rect x="376" y="64" width="32" height="8" fill="#fa140a"/><rect x="408" y="64" width="8" height="8" fill="#fa0a0a"/><rect x="416" y="64" width="24" height="8" fill="#fa0a00"/><rect x="440" y="64" width="40" height="8" fill="#fa0000"/><rect x="480" y="64" width="160" height="8" fill="#960000"/><rect x="0" y="72" width="144" height="8" fill="#00963c"/><rect x="144" y="72" width="8" height="8" fill="#14fa6e"/><rect x="152" y="72" width="8" height="8" fill="#28fa6e"/><rect x="160" y="72" width="8" height="8" fill="#3cfa6e"/><rect x="168" y="72" width="8" height="8" fill="#5afa6e"/><rect x="176" y="72" width="8" height="8" fill="#78fa6e"/><rect x="184" y="72" width="8" height="8" fill="#8cfa6e"/><rect x="192" y="72" width="8" height="8" fill="#b4fa6e"/><rect x="200" y="72" width="8" height="8" fill="#d2fa78"/><rect x="208" y="72" width="8" height="8" fill="#f0fa78"/><rect x="216" y="72" width="8" height="8" fill="#fae66e"/><rect x="224" y="72" width="8" height="8" fill="#fac85a"/><rect x="232" y="72" width="8" height="8" fill="#faaa50"/><rect x="240" y="72" width="8" height="8" fill="#faa050"/><rect x="248" y="72" width="8" height="8" fill="#fa8c46"/><rect x="256" y="72" width="8" height="8" fill="#fa783c"/><rect x="264" y="72" width="8" height="8" fill="#fa6e3c"/><rect x="272" y="72" width="8" height="8" fill="#fa6432"/><rect x="280" y="72" width="8" height="8" fill="#fa5a32"/><rect x="288" y="72" width="8" height="8" fill="#fa5028"/><rect x="296" y="72" width="16" height="8" fill="#fa4628"/><rect x="312" y="72" width="8" height="8" fill="#fa3c1e"/><rect x="320" y="72" width="16" height="8" fill="#fa321e"/><rect x="336" y="72" width="8" height="8" fill="#fa281e"/><rect x="344" y="72" width="8" height="8" fill="#fa2814"/><rect x="352" y="72" width="24" height="8" fill="#fa1e14"/><rect x="376" y="72" width="16" height="8" fill="#fa1414"/><rect x="392" y="72" width="8" height="8" fill="#fa140a"/><rect x="400" y="72" width="32" height="8" fill="#fa0a0a"/><rect x="432" y="72" width="40" height="8" fill="#fa000a"/><rect x="472" y="72" width="168" height="8" fill="#960000"/><rect x="0" y="80" width="128" height="8" fill="#009646"/><rect x="128" y="80" width="16" height="8" fill="#009650"/><rect x="144" y="80" width="8" height="8" fill="#0afa82"/><rect x="152" y="80" width="8" height="8" fill="#28fa82"/><rect x="160" y="80" width="8" height="8" fill="#3cfa8c"/><rect x="168" y="80" width="8" height="8" fill="#5afa8c"/><rect x="176" y="80" width="8" height="8" fill="#78fa8c"/><rect x="184" y="80" width="8" height="8" fill="#8cfa8c"/><rect x="192" y="80" width="8" height="8" fill="#b4fa8c"/><rect x="200" y="80" width="8" height="8" fill="#d2fa96"/><rect x="208" y="80" width="8" height="8" fill="#f0fa96"/><rect x="216" y="80" width="8" height="8" fill="#fadc82"/><rect x="224" y="80" width="8" height="8" fill="#fabe78"/><rect x="232" y="80" width="8" height="8" fill="#faaa6e"/><rect x="240" y="80" width="8" height="8" fill="#fa9664"/><rect x="248" y="80" width="8" height="8" fill="#fa825a"/><rect x="256" y="80" width="8" height="8" fill="#fa7850"/><rect x="264" y="80" width="8" height="8" fill="#fa6e46"/><rect x="272" y="80" width="8" height="8" fill="#fa6446"/><rect x="280" y="80" width="8" height="8" fill="#fa5a3c"/><rect x="288" y="80" width="8" height="8" fill="#fa503c"/><rect x="296" y="80" width="8" height="8" fill="#fa4632"/><rect x="304" y="80" width="8" height="8" fill="#fa3c32"/><rect x="312" y="80" width="8" height="8" fill="#fa3c28"/><rect x="320" y="80" width="16" height="8" fill="#fa3228"/><rect x="336" y="80" width="8" height="8" fill="#fa2828"/><rect x="344" y="80" width="8" height="8" fill="#fa281e"/><rect x="352" y="80" width="16" height="8" fill="#fa1e1e"/><rect x="368" y="80" width="16" height="8" fill="#fa141e"/><rect x="384" y="80" width="8" height="8" fill="#fa1414"/><rect x="392" y="80" width="32" height="8" fill="#fa0a14"/><rect x="424" y="80" width="16" height="8" fill="#fa0014"/><rect x="440" y="80" width="24" height="8" fill="#fa000a"/><rect x="464" y="80" width="8" height="8" fill="#96000a"/><rect x="472" y="80" width="168" height="8" fill="#960000"/><rect x="0" y="88" width="96" height="8" fill="#009650"/><rect x="96" y="88" width="48" height="8" fill="#00965a"/><rect x="144" y="88" width="8" height="8" fill="#0afaa0"/><rect x="152" y="88" width="8" height="8" fill="#1efaa0"/><rect x="160" y="88" width="8" height="8" fill="#3cfaa0"/><rect x="168" y="88" width="8" height="8" fill="#5afaa0"/><rect x="176" y="88" width="8" height="8" fill="#6efaaa"/><rect x="184" y="88" width="8" height="8" fill="#8cfaaa"/><rect x="192" y="88" width="8" height="8" fill="#b4faaa"/><rect x="200" y="88" width="8" height="8" fill="#d2fab4"/><rect x="208" y="88" width="8" height="8" fill="#fafab4"/><rect x="216" y="88" width="8" height="8" fill="#fadca0"/><rect x="224" y="88" width="8" height="8" fill="#fabe8c"/><rect x="232" y="88" width="8" height="8" fill="#faaa82"/><rect x="240" y="88" width="8" height="8" fill="#fa9678"/><rect x="248" y="88" width="8" height="8" fill="#fa826e"/><rect x="256" y="88" width="8" height="8" fill="#fa7864"/><rect x="264" y="88" width="8" height="8" fill="#fa645a"/><rect x="272" y="88" width="8" height="8" fill="#fa5a50"/><rect x="280" y="88" width="8" height="8" fill="#fa5050"/><rect x="288" y="88" width="8" height="8" fill="#fa4646"/><rect x="296" y="88" width="8" height="8" fill="#fa463c"/><rect x="304" y="88" width="8" height="8" fill="#fa3c3c"/><rect x="312" y="88" width="8" height="8" fill="#fa323c"/><rect x="320" y="88" width="8" height="8" fill="#fa3232"/><rect x="328" y="88" width="16" height="8" fill="#fa2832"/><rect x="344" y="88" width="24" height="8" fill="#fa1e28"/><rect x="368" y="88" width="8" height="8" fill="#fa1428"/><rect x="376" y="88" width="8" height="8" fill="#fa141e"/><rect x="384" y="88" width="32" height="8" fill="#fa0a1e"/><rect x="416" y="88" width="8" height="8" fill="#fa001e"/><rect x="424" y="88" width="32" height="8" fill="#fa0014"/><rect x="456" y="88" width="64" height="8" fill="#96000a"/><rect x="520" y="88" width="120" height="8" fill="#960000"/><rect x="0" y="96" width="72" height="8" fill="#00965a"/><rect x="72" y="96" width="56" height="8" fill="#009664"/><rect x="128" y="96" width="16" height="8" fill="#00966e"/><rect x="144" y="96" width="8" height="8" fill="#0afab4"/><rect x="152" y="96" width="8" height="8" fill="#1efabe"/><rect x="160" y="96" width="8" height="8" fill="#3cfabe"/><rect x="168" y="96" width="8" height="8" fill="#50fabe"/><rect x="176" y="96" width="8" height="8" fill="#6efac8"/><rect x="184" y="96" width="8" height="8" fill="#8cfac8"/><rect x="192" y="96" width="8" height="8" fill="#b4fad2"/><rect x="200" y="96" width="8" height="8" fill="#d2fad2"/><rect x="208" y="96" width="8" height="8" fill="#fafad2"/><rect x="216" y="96" width="8" height="8" fill="#fad2be"/><rect x="224" y="96" width="8" height="8" fill="#fabeaa"/><rect x="232" y="96" width="8" height="8" fill="#faa096"/><rect x="240" y="96" width="8" height="8" fill="#fa8c8c"/><rect x="248" y="96" width="8" height="8" fill="#fa8278"/><rect x="256" y="96" width="8" height="8" fill="#fa6e6e"/><rect x="264" y="96" width="8" height="8" fill="#fa6464"/><rect x="272" y="96" width="8" height="8" fill="#fa5a64"/><rect x="280" y="96" width="8" height="8" fill="#fa505a"/><rect x="288" y="96" width="8" height="8" fill="#fa4650"/><rect x="296" y="96" width="8" height="8" fill="#fa3c50"/><rect x="304" y="96" width="8" height="8" fill="#fa3c46"/><rect x="312" y="96" width="8" height="8" fill="#fa3246"/><rect x="320" y="96" width="8" height="8" fill="#fa323c"/><rect x="328" y="96" width="8" height="8" fill="#fa283c"/><rect x="336" y="96" width="8" height="8" fill="#fa1e3c"/><rect x="344" y="96" width="16" height="8" fill="#fa1e32"/><rect x="360" y="96" width="8" height="8" fill="#fa1432"/><rect x="368" y="96" width="16" height="8" fill="#fa1428"/><rect x="384" y="96" width="24" height="8" fill="#fa0a28"/><rect x="408" y="96" width="40" height="8" fill="#fa001e"/><rect x="448" y="96" width="120" height="8" fill="#96000a"/><rect x="568" y="96" width="72" height="8" fill="#960000"/><rect x="0" y="104" width="56" height="8" fill="#009664"/><rect x="56" y="104" width="48" height="8" fill="#00966e"/><rect x="104" y="104" width="40" height="8" fill="#009678"/><rect x="144" y="104" width="8" height="8" fill="#00fad2"/><rect x="152" y="104" width="8" height="8" fill="#1efadc"/><rect x="160" y="104" width="8" height="8" fill="#32fadc"/><rect x="168" y="104" width="8" height="8" fill="#50fadc"/><rect x="176" y="104" width="8" height="8" fill="#6efae6"/><rect x="184" y="104" width="8" height="8" fill="#96fae6"/><rect x="192" y="104" width="8" height="8" fill="#b4faf0"/><rect x="200" y="104" width="8" height="8" fill="#dcfafa"/><rect x="208" y="104" width="8" height="8" fill="#fafafa"/><rect x="216" y="104" width="8" height="8" fill="#fad2dc"/><rect x="224" y="104" width="8" height="8" fill="#fab4be"/><rect x="232" y="104" width="8" height="8" fill="#faa0aa"/><rect x="240" y="104" width="8" height="8" fill="#fa8ca0"/><rect x="248" y="104" width="8" height="8" fill="#fa788c"/><rect x="256" y="104" width="8" height="8" fill="#fa6e82"/><rect x="264" y="104" width="8" height="8" fill="#fa6478"/><rect x="272" y="104" width="8" height="8" fill="#fa5a6e"/><rect x="280" y="104" width="8" height="8" fill="#fa5064"/><rect x="288" y="104" width="8" height="8" fill="#fa4664"/><rect x="296" y="104" width="8" height="8" fill="#fa3c5a"/><rect x="304" y="104" width="16" height="8" fill="#fa3250"/><rect x="320" y="104" width="16" height="8" fill="#fa2846"/><rect x="336" y="104" width="8" height="8" fill="#fa1e46"/><rect x="344" y="104" width="8" height="8" fill="#fa1e3c"/><rect x="352" y="104" width="16" height="8" fill="#fa143c"/><rect x="368" y="104" width="8" height="8" fill="#fa1432"/><rect x="376" y="104" width="24" height="8" fill="#fa0a32"/><rect x="400" y="104" width="40" height="8" fill="#fa0028"/><rect x="440" y="104" width="40" height="8" fill="#960014"/><rect x="480" y="104" width="144" height="8" fill="#96000a"/><rect x="624" y="104" width="16" height="8" fill="#960000"/><rect x="0" y="112" width="40" height="8" fill="#00966e"/><rect x="40" y="112" width="48" height="8" fill="#009678"/><rect x="88" y="112" width="40" height="8" fill="#009682"/><rect x="128" y="112" width="16" height="8" fill="#00968c"/><rect x="144" y="112" width="8" height="8" fill="#00faf0"/><rect x="152" y="112" width="8" height="8" fill="#14fafa"/><rect x="160" y="112" width="8" height="8" fill="#32fafa"/><rect x="168" y="112" width="8" height="8" fill="#50f0fa"/><rect x="176" y="112" width="8" height="8" fill="#6ef0fa"/><rect x="184" y="112" width="8" height="8" fill="#82e6fa"/><rect x="192" y="112" width="8" height="8" fill="#a0e6fa"/><rect x="200" y="112" width="8" height="8" fill="#bedcfa"/><rect x="208" y="112" width="8" height="8" fill="#dcdcfa"/><rect x="216" y="112" width="8" height="8" fill="#fad2fa"/><rect x="224" y="112" width="8" height="8" fill="#fab4dc"/><rect x="232" y="112" width="8" height="8" fill="#faa0c8"/><rect x="240" y="112" width="8" height="8" fill="#fa8cb4"/><rect x="248" y="112" width="8" height="8" fill="#fa78a0"/><rect x="256" y="112" width="8" height="8" fill="#fa6e96"/><rect x="264" y="112" width="8" height="8" fill="#fa5a8c"/><rect x="272" y="112" width="8" height="8" fill="#fa5082"/><rect x="280" y="112" width="8" height="8" fill="#fa4678"/><rect x="288" y="112" width="8" height="8" fill="#fa466e"/><rect x="296" y="112" width="8" height="8" fill="#fa3c64"/><rect x="304" y="112" width="8" height="8" fill="#fa3264"/><rect x="312" y="112" width="16" height="8" fill="#fa285a"/><rect x="328" y="112" width="16" height="8" fill="#fa1e50"/><rect x="344" y="112" width="8" height="8" fill="#fa1e46"/><rect x="352" y="112" width="16" height="8" fill="#fa1446"/><rect x="368" y="112" width="24" height="8" fill="#fa0a3c"/><rect x="392" y="112" width="8" height="8" fill="#fa0a32"/><rect x="400" y="112" width="24" height="8" fill="#fa0032"/><rect x="424" y="112" width="8" height="8" fill="#fa0028"/><rect x="432" y="112" width="80" height="8" fill="#960014"/><rect x="512" y="112" width="128" height="8" fill="#96000a"/><rect x="0" y="120" width="24" height="8" fill="#009678"/><rect x="24" y="120" width="48" height="8" fill="#009682"/><rect x="72" y="120" width="32" height="8" fill="#00968c"/><rect x="104" y="120" width="24" height="8" fill="#009696"/><rect x="128" y="120" width="24" height="8" fill="#008c96"/><rect x="152" y="120" width="8" height="8" fill="#14e6fa"/><rect x="160" y="120" width="8" height="8" fill="#28dcfa"/><rect x="168" y="120" width="8" height="8" fill="#46dcfa"/><rect x="176" y="120" width="8" height="8" fill="#5ad2fa"/><rect x="184" y="120" width="8" height="8" fill="#78c8fa"/><rect x="192" y="120" width="8" height="8" fill="#8cc8fa"/><rect x="200" y="120" width="8" height="8" fill="#aabefa"/><rect x="208" y="120" width="8" height="8" fill="#c8befa"/><rect x="216" y="120" width="8" height="8" fill="#e6b4fa"/><rect x="224" y="120" width="8" height="8" fill="#faaafa"/><rect x="232" y="120" width="8" height="8" fill="#fa96dc"/><rect x="240" y="120" width="8" height="8" fill="#fa82c8"/><rect x="248" y="120" width="8" height="8" fill="#fa78b4"/><rect x="256" y="120" width="8" height="8" fill="#fa64aa"/><rect x="264" y="120" width="8" height="8" fill="#fa5aa0"/><rect x="272" y="120" width="8" height="8" fill="#fa508c"/><rect x="280" y="120" width="8" height="8" fill="#fa4682"/><rect x="288" y="120" width="8" height="8" fill="#fa3c82"/><rect x="296" y="120" width="8" height="8" fill="#fa3278"/><rect x="304" y="120" width="8" height="8" fill="#fa326e"/><rect x="312" y="120" width="16" height="8" fill="#fa2864"/><rect x="328" y="120" width="16" height="8" fill="#fa1e5a"/><rect x="344" y="120" width="16" height="8" fill="#fa1450"/><rect x="360" y="120" width="8" height="8" fill="#fa1446"/><rect x="368" y="120" width="16" height="8" fill="#fa0a46"/><rect x="384" y="120" width="8" height="8" fill="#fa0a3c"/><rect x="392" y="120" width="24" height="8" fill="#fa003c"/><rect x="416" y="120" width="8" height="8" fill="#fa0032"/><rect x="424" y="120" width="32" height="8" fill="#96001e"/><rect x="456" y="120" width="88" height="8" fill="#960014"/><rect x="544" y="120" width="96" height="8" fill="#96000a"/><rect x="0" y="128" width="16" height="8" fill="#009682"/><rect x="16" y="128" width="40" height="8" fill="#00968c"/><rect x="56" y="128" width="24" height="8" fill="#009696"/><rect x="80" y="128" width="32" height="8" fill="#008c96"/><rect x="112" y="128" width="24" height="8" fill="#008296"/><rect x="136" y="128" width="16" height="8" fill="#007896"/><rect x="152" y="128" width="8" height="8" fill="#0ac8fa"/><rect x="160" y="128" width="8" height="8" fill="#28c8fa"/><rect x="168" y="128" width="8" height="8" fill="#3cbefa"/><rect x="176" y="128" width="8" height="8" fill="#50befa"/><rect x="184" y="128" width="8" height="8" fill="#64b4fa"/><rect x="192" y="128" width="8" height="8" fill="#82b4fa"/><rect x="200" y="128" width="8" height="8" fill="#96aafa"/><rect x="208" y="128" width="8" height="8" fill="#b4a0fa"/><rect x="216" y="128" width="8" height="8" fill="#c8a0fa"/><rect x="224" y="128" width="8" height="8" fill="#e696fa"/><rect x="232" y="128" width="8" height="8" fill="#fa96fa"/><rect x="240" y="128" width="8" height="8" fill="#fa82dc"/><rect x="248" y="128" width="8" height="8" fill="#fa6ec8"/><rect x="256" y="128" width="8" height="8" fill="#fa64be"/><rect x="264" y="128" width="8" height="8" fill="#fa5aaa"/><rect x="272" y="128" width="8" height="8" fill="#fa50a0"/><rect x="280" y="128" width="8" height="8" fill="#fa4696"/><rect x="288" y="128" width="8" height="8" fill="#fa3c8c"/><rect x="296" y="128" width="8" height="8" fill="#fa3282"/><rect x="304" y="128" width="16" height="8" fill="#fa2878"/><rect x="320" y="128" width="8" height="8" fill="#fa1e6e"/><rect x="328" y="128" width="8" height="8" fill="#fa1e64"/><rect x="336" y="128" width="8" height="8" fill="#fa1464"/><rect x="344" y="128" width="16" height="8" fill="#fa145a"/><rect x="360" y="128" width="24" height="8" fill="#fa0a50"/><rect x="384" y="128" width="24" height="8" fill="#fa0046"/><rect x="408" y="128" width="8" height="8" fill="#fa003c"/><rect x="416" y="128" width="64" height="8" fill="#96001e"/><rect x="480" y="128" width="104" height="8" fill="#960014"/><rect x="584" y="128" width="56" height="8" fill="#96000a"/><rect x="0" y="136" width="8" height="8" fill="#00968c"/><rect x="8" y="136" width="24" height="8" fill="#009696"/><rect x="32" y="136" width="32" height="8" fill="#008c96"/><rect x="64" y="136" width="32" height="8" fill="#008296"/><rect x="96" y="136" width="32" height="8" fill="#007896"/><rect x="128" y="136" width="24" height="8" fill="#006e96"/><rect x="152" y="136" width="8" height="8" fill="#0ab4fa"/><rect x="160" y="136" width="8" height="8" fill="#1eaafa"/><rect x="168" y="136" width="8" height="8" fill="#32aafa"/><rect x="176" y="136" width="8" height="8" fill="#46aafa"/><rect x="184" y="136" width="8" height="8" fill="#5aa0fa"/><rect x="192" y="136" width="8" height="8" fill="#6ea0fa"/><rect x="200" y="136" width="8" height="8" fill="#8c96fa"/><rect x="208" y="136" width="8" height="8" fill="#a096fa"/><rect x="216" y="136" width="8" height="8" fill="#b48cfa"/><rect x="224" y="136" width="8" height="8" fill="#d28cfa"/><rect x="232" y="136" width="8" height="8" fill="#e682fa"/><rect x="240" y="136" width="8" height="8" fill="#fa78fa"/><rect x="248" y="136" width="8" height="8" fill="#fa6ee6"/><rect x="256" y="136" width="8" height="8" fill="#fa5ad2"/><rect x="264" y="136" width="8" height="8" fill="#fa50be"/><rect x="272" y="136" width="8" height="8" fill="#fa46b4"/><rect x="280" y="136" width="8" height="8" fill="#fa3caa"/><rect x="288" y="136" width="8" height="8" fill="#fa3296"/><rect x="296" y="136" width="8" height="8" fill="#fa328c"/><rect x="304" y="136" width="8" height="8" fill="#fa288c"/><rect x="312" y="136" width="8" height="8" fill="#fa2882"/><rect x="320" y="136" width="8" height="8" fill="#fa1e78"/><rect x="328" y="136" width="8" height="8" fill="#fa1e6e"/><rect x="336" y="136" width="8" height="8" fill="#fa146e"/><rect x="344" y="136" width="8" height="8" fill="#fa1464"/><rect x="352" y="136" width="8" height="8" fill="#fa0a64"/><rect x="360" y="136" width="16" height="8" fill="#fa0a5a"/><rect x="376" y="136" width="24" height="8" fill="#fa0050"/><rect x="400" y="136" width="8" height="8" fill="#fa0046"/><rect x="408" y="136" width="32" height="8" fill="#960028"/><rect x="440" y="136" width="72" height="8" fill="#96001e"/><rect x="512" y="136" width="104" height="8" fill="#960014"/><rect x="616" y="136" width="24" height="8" fill="#96000a"/><rect x="0" y="144" width="24" height="8" fill="#008c96"/><rect x="24" y="144" width="32" height="8" fill="#008296"/><rect x="56" y="144" width="40" height="8" fill="#007896"/><rect x="96" y="144" width="32" height="8" fill="#006e96"/><rect x="128" y="144" width="24" height="8" fill="#006496"/><rect x="152" y="144" width="8" height="8" fill="#00a0fa"/><rect x="160" y="144" width="8" height="8" fill="#14a0fa"/><rect x="168" y="144" width="8" height="8" fill="#2896fa"/><rect x="176" y="144" width="8" height="8" fill="#3c96fa"/><rect x="184" y="144" width="8" height="8" fill="#508cfa"/><rect x="192" y="144" width="8" height="8" fill="#648cfa"/><rect x="200" y="144" width="8" height="8" fill="#7882fa"/><rect x="208" y="144" width="8" height="8" fill="#8c82fa"/><rect x="216" y="144" width="8" height="8" fill="#aa78fa"/><rect x="224" y="144" width="8" height="8" fill="#be78fa"/><rect x="232" y="144" width="8" height="8" fill="#d26efa"/><rect x="240" y="144" width="8" height="8" fill="#e66efa"/><rect x="248" y="144" width="8" height="8" fill="#fa64fa"/><rect x="256" y="144" width="8" height="8" fill="#fa5ae6"/><rect x="264" y="144" width="8" height="8" fill="#fa50d2"/><rect x="272" y="144" width="8" height="8" fill="#fa46c8"/><rect x="280" y="144" width="8" height="8" fill="#fa3cb4"/><rect x="288" y="144" width="8" height="8" fill="#fa32aa"/><rect x="296" y="144" width="8" height="8" fill="#fa28a0"/><rect x="304" y="144" width="8" height="8" fill="#fa2896"/><rect x="312" y="144" width="8" height="8" fill="#fa1e8c"/><rect x="320" y="144" width="8" height="8" fill="#fa1e82"/><rect x="328" y="144" width="8" height="8" fill="#fa1482"/><rect x="336" y="144" width="8" height="8" fill="#fa1478"/><rect x="344" y="144" width="16" height="8" fill="#fa0a6e"/><rect x="360" y="144" width="8" height="8" fill="#fa0a64"/><rect x="368" y="144" width="8" height="8" fill="#fa0064"/><rect x="376" y="144" width="24" height="8" fill="#fa005a"/><rect x="400" y="144" width="16" height="8" fill="#960032"/><rect x="416" y="144" width="48" height="8" fill="#960028"/><rect x="464" y="144" width="72" height="8" fill="#96001e"/><rect x="536" y="144" width="104" height="8" fill="#960014"/><rect x="0" y="152" width="16" height="8" fill="#008296"/><rect x="16" y="152" width="40" height="8" fill="#007896"/><rect x="56" y="152" width="32" height="8" fill="#006e96"/><rect x="88" y="152" width="40" height="8" fill="#006496"/><rect x="128" y="152" width="24" height="8" fill="#005a96"/><rect x="152" y="152" width="8" height="8" fill="#0096fa"/><rect x="160" y="152" width="8" height="8" fill="#148cfa"/><rect x="168" y="152" width="8" height="8" fill="#288cfa"/><rect x="176" y="152" width="8" height="8" fill="#3c82fa"/><rect x="184" y="152" width="8" height="8" fill="#4682fa"/><rect x="192" y="152" width="8" height="8" fill="#5a78fa"/><rect x="200" y="152" width="8" height="8" fill="#6e78fa"/><rect x="208" y="152" width="8" height="8" fill="#826efa"/><rect x="216" y="152" width="8" height="8" fill="#966efa"/><rect x="224" y="152" width="8" height="8" fill="#aa6efa"/><rect x="232" y="152" width="8" height="8" fill="#be64fa"/><rect x="240" y="152" width="8" height="8" fill="#d264fa"/><rect x="248" y="152" width="8" height="8" fill="#e65afa"/><rect x="256" y="152" width="8" height="8" fill="#fa5afa"/><rect x="264" y="152" width="8" height="8" fill="#fa46e6"/><rect x="272" y="152" width="8" height="8" fill="#fa3cd2"/><rect x="280" y="152" width="8" height="8" fill="#fa3cc8"/><rect x="288" y="152" width="8" height="8" fill="#fa32be"/><rect x="296" y="152" width="8" height="8" fill="#fa28aa"/><rect x="304" y="152" width="8" height="8" fill="#fa1ea0"/><rect x="312" y="152" width="8" height="8" fill="#fa1e96"/><rect x="320" y="152" width="8" height="8" fill="#fa1496"/><rect x="328" y="152" width="8" height="8" fill="#fa148c"/><rect x="336" y="152" width="8" height="8" fill="#fa1482"/><rect x="344" y="152" width="16" height="8" fill="#fa0a78"/><rect x="360" y="152" width="16" height="8" fill="#fa006e"/><rect x="376" y="152" width="16" height="8" fill="#fa0064"/><rect x="392" y="152" width="40" height="8" fill="#960032"/><rect x="432" y="152" width="56" height="8" fill="#960028"/><rect x="488" y="152" width="80" height="8" fill="#96001e"/><rect x="568" y="152" width="72" height="8" fill="#960014"/><rect x="0" y="160" width="16" height="8" fill="#007896"/><rect x="16" y="160" width="40" height="8" fill="#006e96"/><rect x="56" y="160" width="40" height="8" fill="#006496"/><rect x="96" y="160" width="32" height="8" fill="#005a96"/><rect x="128" y="160" width="24" height="8" fill="#005096"/><rect x="152" y="160" width="8" height="8" fill="#0082fa"/><rect x="160" y="160" width="8" height="8" fill="#0a82fa"/><rect x="168" y="160" width="8" height="8" fill="#1e78fa"/><rect x="176" y="160" width="8" height="8" fill="#3278fa"/><rect x="184" y="160" width="8" height="8" fill="#4678fa"/><rect x="192" y="160" width="8" height="8" fill="#506efa"/><rect x="200" y="160" width="8" height="8" fill="#646efa"/><rect x="208" y="160" width="8" height="8" fill="#7864fa"/><rect x="216" y="160" width="8" height="8" fill="#8c64fa"/><rect x="224" y="160" width="8" height="8" fill="#a05afa"/><rect x="232" y="160" width="8" height="8" fill="#aa5afa"/><rect x="240" y="160" width="8" height="8" fill="#be50fa"/><rect x="248" y="160" width="8" height="8" fill="#d250fa"/><rect x="256" y="160" width="8" height="8" fill="#e646fa"/><rect x="264" y="160" width="8" height="8" fill="#fa46fa"/><rect x="272" y="160" width="8" height="8" fill="#fa3ce6"/><rect x="280" y="160" width="8" height="8" fill="#fa32d2"/><rect x="288" y="160" width="8" height="8" fill="#fa28c8"/><rect x="296" y="160" width="8" height="8" fill="#fa28be"/><rect x="304" y="160" width="8" height="8" fill="#fa1eb4"/><rect x="312" y="160" width="8" height="8" fill="#fa1eaa"/><rect x="320" y="160" width="8" height="8" fill="#fa14a0"/><rect x="328" y="160" width="8" height="8" fill="#fa1496"/><rect x="336" y="160" width="8" height="8" fill="#fa0a8c"/><rect x="344" y="160" width="16" height="8" fill="#fa0a82"/><rect x="360" y="160" width="16" height="8" fill="#fa0078"/><rect x="376" y="160" width="8" height="8" fill="#fa006e"/><rect x="384" y="160" width="24" height="8" fill="#96003c"/><rect x="408" y="160" width="48" height="8" fill="#960032"/><rect x="456" y="160" width="56" height="8" fill="#960028"/><rect x="512" y="160" width="80" height="8" fill="#96001e"/><rect x="592" y="160" width="48" height="8" fill="#960014"/><rect x="0" y="168" width="24" height="8" fill="#006e96"/><rect x="24" y="168" width="40" height="8" fill="#006496"/><rect x="64" y="168" width="40" height="8" fill="#005a96"/><rect x="104" y="168" width="32" height="8" fill="#005096"/><rect x="136" y="168" width="24" height="8" fill="#004696"/><rect x="160" y="168" width="8" height="8" fill="#0a78fa"/><rect x="168" y="168" width="8" height="8" fill="#1e6efa"/><rect x="176" y="168" width="8" height="8" fill="#286efa"/><rect x="184" y="168" width="8" height="8" fill="#3c64fa"/><rect x="192" y="168" width="8" height="8" fill="#5064fa"/><rect x="200" y="168" width="8" height="8" fill="#5a64fa"/><rect x="208" y="168" width="8" height="8" fill="#6e5afa"/><rect x="216" y="168" width="8" height="8" fill="#825afa"/><rect x="224" y="168" width="8" height="8" fill="#8c50fa"/><rect x="232" y="168" width="8" height="8" fill="#a050fa"/><rect x="240" y="168" width="8" height="8" fill="#b446fa"/><rect x="248" y="168" width="8" height="8" fill="#c846fa"/><rect x="256" y="168" width="8" height="8" fill="#d246fa"/><rect x="264" y="168" width="8" height="8" fill="#e63cfa"/><rect x="272" y="168" width="8" height="8" fill="#fa3cfa"/><rect x="280" y="168" width="8" height="8" fill="#fa32e6"/><rect x="288" y="168" width="8" height="8" fill="#fa28dc"/><rect x="296" y="168" width="8" height="8" fill="#fa1ec8"/><rect x="304" y="168" width="8" height="8" fill="#fa1ebe"/><rect x="312" y="168" width="8" height="8" fill="#fa14b4"/><rect x="320" y="168" width="8" height="8" fill="#fa14aa"/><rect x="328" y="168" width="8" height="8" fill="#fa0aa0"/><rect x="336" y="168" width="16" height="8" fill="#fa0a96"/><rect x="352" y="168" width="8" height="8" fill="#fa008c"/><rect x="360" y="168" width="16" height="8" fill="#fa0082"/><rect x="376" y="168" width="16" height="8" fill="#960046"/><rect x="392" y="168" width="40" height="8" fill="#96003c"/><rect x="432" y="168" width="40" height="8" fill="#960032"/><rect x="472" y="168" width="56" height="8" fill="#960028"/><rect x="528" y="168" width="88" height="8" fill="#96001e"/><rect x="616" y="168" width="24" height="8" fill="#960014"/><rect x="0" y="176" width="32" height="8" fill="#006496"/><rect x="32" y="176" width="40" height="8" fill="#005a96"/><rect x="72" y="176" width="40" height="8" fill="#005096"/><rect x="112" y="176" width="40" height="8" fill="#004696"/><rect x="152" y="176" width="8" height="8" fill="#003c96"/><rect x="160" y="176" width="8" height="8" fill="#0a64fa"/><rect x="168" y="176" width="8" height="8" fill="#1464fa"/><rect x="176" y="176" width="8" height="8" fill="#2864fa"/><rect x="184" y="176" width="8" height="8" fill="#325afa"/><rect x="192" y="176" width="8" height="8" fill="#465afa"/><rect x="200" y="176" width="8" height="8" fill="#505afa"/><rect x="208" y="176" width="8" height="8" fill="#6450fa"/><rect x="216" y="176" width="8" height="8" fill="#7850fa"/><rect x="224" y="176" width="8" height="8" fill="#8246fa"/><rect x="232" y="176" width="8" height="8" fill="#9646fa"/><rect x="240" y="176" width="8" height="8" fill="#aa46fa"/><rect x="248" y="176" width="8" height="8" fill="#b43cfa"/><rect x="256" y="176" width="8" height="8" fill="#c83cfa"/><rect x="264" y="176" width="8" height="8" fill="#dc32fa"/><rect x="272" y="176" width="8" height="8" fill="#e632fa"/><rect x="280" y="176" width="8" height="8" fill="#fa28fa"/><rect x="288" y="176" width="8" height="8" fill="#fa28e6"/><rect x="296" y="176" width="8" height="8" fill="#fa1edc"/><rect x="304" y="176" width="8" height="8" fill="#fa14d2"/><rect x="312" y="176" width="8" height="8" fill="#fa14be"/><rect x="320" y="176" width="8" height="8" fill="#fa0ab4"/><rect x="328" y="176" width="8" height="8" fill="#fa0aaa"/><rect x="336" y="176" width="8" height="8" fill="#fa0aa0"/><rect x="344" y="176" width="8" height="8" fill="#fa00a0"/><rect x="352" y="176" width="8" height="8" fill="#fa0096"/><rect x="360" y="176" width="8" height="8" fill="#fa008c"/><rect x="368" y="176" width="16" height="8" fill="#960050"/><rect x="384" y="176" width="24" height="8" fill="#960046"/><rect x="408" y="176" width="40" height="8" fill="#96003c"/><rect x="448" y="176" width="40" height="8" fill="#960032"/><rect x="488" y="176" width="64" height="8" fill="#960028"/><rect x="552" y="176" width="88" height="8" fill="#96001e"/><rect x="0" y="184" width="48" height="8" fill="#005a96"/><rect x="48" y="184" width="40" height="8" fill="#005096"/><rect x="88" y="184" width="40" height="8" fill="#004696"/><rect x="128" y="184" width="32" height="8" fill="#003c96"/><rect x="160" y="184" width="8" height="8" fill="#005afa"/><rect x="168" y="184" width="8" height="8" fill="#145afa"/><rect x="176" y="184" width="8" height="8" fill="#1e5afa"/><rect x="184" y="184" width="8" height="8" fill="#3250fa"/><rect x="192" y="184" width="8" height="8" fill="#3c50fa"/><rect x="200" y="184" width="8" height="8" fill="#5050fa"/><rect x="208" y="184" width="8" height="8" fill="#5a46fa"/><rect x="216" y="184" width="8" height="8" fill="#6e46fa"/><rect x="224" y="184" width="8" height="8" fill="#783cfa"/><rect x="232" y="184" width="8" height="8" fill="#8c3cfa"/><rect x="240" y="184" width="8" height="8" fill="#963cfa"/><rect x="248" y="184" width="8" height="8" fill="#aa32fa"/><rect x="256" y="184" width="8" height="8" fill="#be32fa"/><rect x="264" y="184" width="8" height="8" fill="#c828fa"/><rect x="272" y="184" width="8" height="8" fill="#dc28fa"/><rect x="280" y="184" width="8" height="8" fill="#e628fa"/><rect x="288" y="184" width="8" height="8" fill="#fa1efa"/><rect x="296" y="184" width="8" height="8" fill="#fa1ee6"/><rect x="304" y="184" width="8" height="8" fill="#fa14dc"/><rect x="312" y="184" width="8" height="8" fill="#fa14d2"/><rect x="320" y="184" width="8" height="8" fill="#fa0ac8"/><rect x="328" y="184" width="8" height="8" fill="#fa0abe"/><rect x="336" y="184" width="8" height="8" fill="#fa00b4"/><rect x="344" y="184" width="8" height="8" fill="#fa00aa"/><rect x="352" y="184" width="8" height="8" fill="#fa00a0"/><rect x="360" y="184" width="16" height="8" fill="#96005a"/><rect x="376" y="184" width="24" height="8" fill="#960050"/><rect x="400" y="184" width="24" height="8" fill="#960046"/><rect x="424" y="184" width="40" height="8" fill="#96003c"/><rect x="464" y="184" width="48" height="8" fill="#960032"/><rect x="512" y="184" width="64" height="8" fill="#960028"/><rect x="576" y="184" width="64" height="8" fill="#96001e"/><rect x="0" y="192" width="16" height="8" fill="#005a96"/><rect x="16" y="192" width="48" height="8" fill="#005096"/><rect x="64" y="192" width="40" height="8" fill="#004696"/><rect x="104" y="192" width="40" height="8" fill="#003c96"/><rect x="144" y="192" width="16" height="8" fill="#003296"/><rect x="160" y="192" width="8" height="8" fill="#005afa"/><rect x="168" y="192" width="8" height="8" fill="#1450fa"/><rect x="176" y="192" width="8" height="8" fill="#1e50fa"/><rect x="184" y="192" width="8" height="8" fill="#2850fa"/><rect x="192" y="192" width="8" height="8" fill="#3c46fa"/><rect x="200" y="192" width="8" height="8" fill="#4646fa"/><rect x="208" y="192" width="8" height="8" fill="#5a3cfa"/><rect x="216" y="192" width="8" height="8" fill="#643cfa"/><rect x="224" y="192" width="8" height="8" fill="#6e3cfa"/><rect x="232" y="192" width="8" height="8" fill="#8232fa"/><rect x="240" y="192" width="8" height="8" fill="#8c32fa"/><rect x="248" y="192" width="8" height="8" fill="#a032fa"/><rect x="256" y="192" width="8" height="8" fill="#aa28fa"/><rect x="264" y="192" width="8" height="8" fill="#be28fa"/><rect x="272" y="192" width="8" height="8" fill="#c81efa"/><rect x="280" y="192" width="8" height="8" fill="#dc1efa"/><rect x="288" y="192" width="8" height="8" fill="#f01efa"/><rect x="296" y="192" width="8" height="8" fill="#fa14fa"/><rect x="304" y="192" width="8" height="8" fill="#fa14e6"/><rect x="312" y="192" width="8" height="8" fill="#fa0adc"/><rect x="320" y="192" width="8" height="8" fill="#fa0ad2"/><rect x="328" y="192" width="8" height="8" fill="#fa00c8"/><rect x="336" y="192" width="8" height="8" fill="#fa00be"/><rect x="344" y="192" width="8" height="8" fill="#fa00b4"/><rect x="352" y="192" width="16" height="8" fill="#960064"/><rect x="368" y="192" width="16" height="8" fill="#96005a"/><rect x="384" y="192" width="24" height="8" fill="#960050"/><rect x="408" y="192" width="32" height="8" fill="#960046"/><rect x="440" y="192" width="40" height="8" fill="#96003c"/><rect x="480" y="192" width="48" height="8" fill="#960032"/><rect x="528" y="192" width="72" height="8" fill="#960028"/><rect x="600" y="192" width="40" height="8" fill="#96001e"/><rect x="0" y="200" width="40" height="8" fill="#005096"/><rect x="40" y="200" width="40" height="8" fill="#004696"/><rect x="80" y="200" width="48" height="8" fill="#003c96"/><rect x="128" y="200" width="32" height="8" fill="#003296"/><rect x="160" y="200" width="8" height="8" fill="#0050fa"/><rect x="168" y="200" width="8" height="8" fill="#0a46fa"/><rect x="176" y="200" width="8" height="8" fill="#1e46fa"/><rect x="184" y="200" width="8" height="8" fill="#2846fa"/><rect x="192" y="200" width="8" height="8" fill="#323cfa"/><rect x="200" y="200" width="8" height="8" fill="#463cfa"/><rect x="208" y="200" width="8" height="8" fill="#503cfa"/><rect x="216" y="200" width="8" height="8" fill="#5a32fa"/><rect x="224" y="200" width="8" height="8" fill="#6e32fa"/><rect x="232" y="200" width="8" height="8" fill="#7832fa"/><rect x="240" y="200" width="8" height="8" fill="#8228fa"/><rect x="248" y="200" width="8" height="8" fill="#9628fa"/><rect x="256" y="200" width="8" height="8" fill="#a028fa"/><rect x="264" y="200" width="8" height="8" fill="#b41efa"/><rect x="272" y="200" width="8" height="8" fill="#be1efa"/><rect x="280" y="200" width="8" height="8" fill="#d214fa"/><rect x="288" y="200" width="8" height="8" fill="#dc14fa"/><rect x="296" y="200" width="8" height="8" fill="#f014fa"/><rect x="304" y="200" width="8" height="8" fill="#fa0afa"/><rect x="312" y="200" width="8" height="8" fill="#fa0af0"/><rect x="320" y="200" width="8" height="8" fill="#fa00dc"/><rect x="328" y="200" width="8" height="8" fill="#fa00d2"/><rect x="336" y="200" width="8" height="8" fill="#fa00c8"/><rect x="344" y="200" width="16" height="8" fill="#96006e"/><rect x="360" y="200" width="16" height="8" fill="#960064"/><rect x="376" y="200" width="24" height="8" fill="#96005a"/><rect x="400" y="200" width="24" height="8" fill="#960050"/><rect x="424" y="200" width="32" height="8" fill="#960046"/><rect x="456" y="200" width="40" height="8" fill="#96003c"/><rect x="496" y="200" width="56" height="8" fill="#960032"/><rect x="552" y="200" width="72" height="8" fill="#960028"/><rect x="624" y="200" width="16" height="8" fill="#96001e"/><rect x="0" y="208" width="8" height="8" fill="#005096"/><rect x="8" y="208" width="48" height="8" fill="#004696"/><rect x="56" y="208" width="48" height="8" fill="#003c96"/><rect x="104" y="208" width="40" height="8" fill="#003296"/><rect x="144" y="208" width="16" height="8" fill="#002896"/><rect x="160" y="208" width="8" height="8" fill="#0046fa"/><rect x="168" y="208" width="8" height="8" fill="#0a46fa"/><rect x="176" y="208" width="8" height="8" fill="#143cfa"/><rect x="184" y="208" width="8" height="8" fill="#1e3cfa"/><rect x="192" y="208" width="8" height="8" fill="#323cfa"/><rect x="200" y="208" width="8" height="8" fill="#3c32fa"/><rect x="208" y="208" width="8" height="8" fill="#4632fa"/><rect x="216" y="208" width="8" height="8" fill="#5a32fa"/><rect x="224" y="208" width="8" height="8" fill="#6428fa"/><rect x="232" y="208" width="8" height="8" fill="#6e28fa"/><rect x="240" y="208" width="8" height="8" fill="#8228fa"/><rect x="248" y="208" width="8" height="8" fill="#8c1efa"/><rect x="256" y="208" width="8" height="8" fill="#961efa"/><rect x="264" y="208" width="8" height="8" fill="#aa1efa"/><rect x="272" y="208" width="8" height="8" fill="#b414fa"/><rect x="280" y="208" width="8" height="8" fill="#be14fa"/><rect x="288" y="208" width="8" height="8" fill="#d214fa"/><rect x="296" y="208" width="8" height="8" fill="#dc0afa"/><rect x="304" y="208" width="8" height="8" fill="#f00afa"/><rect x="312" y="208" width="8" height="8" fill="#fa00fa"/><rect x="320" y="208" width="8" height="8" fill="#fa00f0"/><rect x="328" y="208" width="8" height="8" fill="#fa00dc"/><rect x="336" y="208" width="8" height="8" fill="#960082"/><rect x="344" y="208" width="8" height="8" fill="#960078"/><rect x="352" y="208" width="16" height="8" fill="#96006e"/><rect x="368" y="208" width="24" height="8" fill="#960064"/><rect x="392" y="208" width="16" height="8" fill="#96005a"/><rect x="408" y="208" width="32" height="8" fill="#960050"/><rect x="440" y="208" width="32" height="8" fill="#960046"/><rect x="472" y="208" width="40" height="8" fill="#96003c"/><rect x="512" y="208" width="56" height="8" fill="#960032"/><rect x="568" y="208" width="72" height="8" fill="#960028"/><rect x="0" y="216" width="40" height="8" fill="#004696"/><rect x="40" y="216" width="40" height="8" fill="#003c96"/><rect x="80" y="216" width="48" height="8" fill="#003296"/><rect x="128" y="216" width="40" height="8" fill="#002896"/><rect x="168" y="216" width="8" height="8" fill="#0a3cfa"/><rect x="176" y="216" width="8" height="8" fill="#143cfa"/><rect x="184" y="216" width="8" height="8" fill="#1e3cfa"/><rect x="192" y="216" width="8" height="8" fill="#2832fa"/><rect x="200" y="216" width="8" height="8" fill="#3c32fa"/><rect x="208" y="216" width="8" height="8" fill="#4632fa"/><rect x="216" y="216" width="8" height="8" fill="#5028fa"/><rect x="224" y="216" width="8" height="8" fill="#5a28fa"/><rect x="232" y="216" width="8" height="8" fill="#6e28fa"/><rect x="240" y="216" width="8" height="8" fill="#781efa"/><rect x="248" y="216" width="8" height="8" fill="#821efa"/><rect x="256" y="216" width="8" height="8" fill="#8c1efa"/><rect x="264" y="216" width="8" height="8" fill="#a014fa"/><rect x="272" y="216" width="8" height="8" fill="#aa14fa"/><rect x="280" y="216" width="8" height="8" fill="#b40afa"/><rect x="288" y="216" width="8" height="8" fill="#c80afa"/><rect x="296" y="216" width="8" height="8" fill="#d20afa"/><rect x="304" y="216" width="8" height="8" fill="#dc00fa"/><rect x="312" y="216" width="8" height="8" fill="#f000fa"/><rect x="320" y="216" width="8" height="8" fill="#fa00fa"/><rect x="328" y="216" width="8" height="8" fill="#96008c"/><rect x="336" y="216" width="16" height="8" fill="#960082"/><rect x="352" y="216" width="16" height="8" fill="#960078"/><rect x="368" y="216" width="16" height="8" fill="#96006e"/><rect x="384" y="216" width="16" height="8" fill="#960064"/><rect x="400" y="216" width="24" height="8" fill="#96005a"/><rect x="424" y="216" width="24" height="8" fill="#960050"/><rect x="448" y="216" width="40" height="8" fill="#960046"/><rect x="488" y="216" width="40" height="8" fill="#96003c"/><rect x="528" y="216" width="56" height="8" fill="#960032"/><rect x="584" y="216" width="56" height="8" fill="#960028"/><rect x="0" y="224" width="16" height="8" fill="#004696"/><rect x="16" y="224" width="48" height="8" fill="#003c96"/><rect x="64" y="224" width="48" height="8" fill="#003296"/><rect x="112" y="224" width="48" height="8" fill="#002896"/><rect x="160" y="224" width="8" height="8" fill="#001e96"/><rect x="168" y="224" width="8" height="8" fill="#003cfa"/><rect x="176" y="224" width="8" height="8" fill="#1432fa"/><rect x="184" y="224" width="8" height="8" fill="#1e32fa"/><rect x="192" y="224" width="8" height="8" fill="#2832fa"/><rect x="200" y="224" width="8" height="8" fill="#3228fa"/><rect x="208" y="224" width="8" height="8" fill="#3c28fa"/><rect x="216" y="224" width="8" height="8" fill="#4628fa"/><rect x="224" y="224" width="8" height="8" fill="#5a1efa"/><rect x="232" y="224" width="8" height="8" fill="#641efa"/><rect x="240" y="224" width="8" height="8" fill="#6e1efa"/><rect x="248" y="224" width="8" height="8" fill="#7814fa"/><rect x="256" y="224" width="8" height="8" fill="#8c14fa"/><rect x="264" y="224" width="8" height="8" fill="#9614fa"/><rect x="272" y="224" width="8" height="8" fill="#a00afa"/><rect x="280" y="224" width="8" height="8" fill="#aa0afa"/><rect x="288" y="224" width="8" height="8" fill="#be0afa"/><rect x="296" y="224" width="8" height="8" fill="#c800fa"/><rect x="304" y="224" width="8" height="8" fill="#d200fa"/><rect x="312" y="224" width="8" height="8" fill="#dc00fa"/><rect x="320" y="224" width="8" height="8" fill="#8c0096"/><rect x="328" y="224" width="8" height="8" fill="#960096"/><rect x="336" y="224" width="8" height="8" fill="#96008c"/><rect x="344" y="224" width="16" height="8" fill="#960082"/><rect x="360" y="224" width="16" height="8" fill="#960078"/><rect x="376" y="224" width="16" height="8" fill="#96006e"/><rect x="392" y="224" width="16" height="8" fill="#960064"/><rect x="408" y="224" width="24" height="8" fill="#96005a"/><rect x="432" y="224" width="32" height="8" fill="#960050"/><rect x="464" y="224" width="32" height="8" fill="#960046"/><rect x="496" y="224" width="48" height="8" fill="#96003c"/><rect x="544" y="224" width="64" height="8" fill="#960032"/><rect x="608" y="224" width="32" height="8" fill="#960028"/><rect x="0" y="232" width="40" height="8" fill="#003c96"/><rect x="40" y="232" width="56" height="8" fill="#003296"/><rect x="96" y="232" width="48" height="8" fill="#002896"/><rect x="144" y="232" width="24" height="8" fill="#001e96"/><rect x="168" y="232" width="8" height="8" fill="#0032fa"/><rect x="176" y="232" width="8" height="8" fill="#0a32fa"/><rect x="184" y="232" width="8" height="8" fill="#1428fa"/><rect x="192" y="232" width="8" height="8" fill="#2828fa"/><rect x="200" y="232" width="8" height="8" fill="#3228fa"/><rect x="208" y="232" width="8" height="8" fill="#3c28fa"/><rect x="216" y="232" width="8" height="8" fill="#461efa"/><rect x="224" y="232" width="8" height="8" fill="#501efa"/><rect x="232" y="232" width="8" height="8" fill="#5a1efa"/><rect x="240" y="232" width="8" height="8" fill="#6414fa"/><rect x="248" y="232" width="8" height="8" fill="#7814fa"/><rect x="256" y="232" width="8" height="8" fill="#8214fa"/><rect x="264" y="232" width="8" height="8" fill="#8c0afa"/><rect x="272" y="232" width="8" height="8" fill="#960afa"/><rect x="280" y="232" width="8" height="8" fill="#a00afa"/><rect x="288" y="232" width="8" height="8" fill="#b400fa"/><rect x="296" y="232" width="8" height="8" fill="#be00fa"/><rect x="304" y="232" width="8" height="8" fill="#c800fa"/><rect x="312" y="232" width="16" height="8" fill="#820096"/><rect x="328" y="232" width="8" height="8" fill="#8c0096"/><rect x="336" y="232" width="8" height="8" fill="#960096"/><rect x="344" y="232" width="8" height="8" fill="#96008c"/><rect x="352" y="232" width="16" height="8" fill="#960082"/><rect x="368" y="232" width="16" height="8" fill="#960078"/><rect x="384" y="232" width="16" height="8" fill="#96006e"/><rect x="400" y="232" width="24" height="8" fill="#960064"/><rect x="424" y="232" width="24" height="8" fill="#96005a"/><rect x="448" y="232" width="32" height="8" fill="#960050"/><rect x="480" y="232" width="32" height="8" fill="#960046"/><rect x="512" y="232" width="48" height="8" fill="#96003c"/><rect x="560" y="232" width="64" height="8" fill="#960032"/><rect x="624" y="232" width="16" height="8" fill="#960028"/><rect x="0" y="240" width="24" height="8" fill="#003c96"/><rect x="24" y="240" width="48" height="8" fill="#003296"/><rect x="72" y="240" width="56" height="8" fill="#002896"/><rect x="128" y="240" width="40" height="8" fill="#001e96"/><rect x="168" y="240" width="8" height="8" fill="#0032fa"/><rect x="176" y="240" width="8" height="8" fill="#0a28fa"/><rect x="184" y="240" width="8" height="8" fill="#1428fa"/><rect x="192" y="240" width="8" height="8" fill="#1e28fa"/><rect x="200" y="240" width="8" height="8" fill="#281efa"/><rect x="208" y="240" width="8" height="8" fill="#321efa"/><rect x="216" y="240" width="8" height="8" fill="#3c1efa"/><rect x="224" y="240" width="8" height="8" fill="#5014fa"/><rect x="232" y="240" width="8" height="8" fill="#5a14fa"/><rect x="240" y="240" width="8" height="8" fill="#6414fa"/><rect x="248" y="240" width="8" height="8" fill="#6e14fa"/><rect x="256" y="240" width="8" height="8" fill="#780afa"/><rect x="264" y="240" width="8" height="8" fill="#820afa"/><rect x="272" y="240" width="8" height="8" fill="#8c0afa"/><rect x="280" y="240" width="8" height="8" fill="#a000fa"/><rect x="288" y="240" width="8" height="8" fill="#aa00fa"/><rect x="296" y="240" width="8" height="8" fill="#b400fa"/><rect x="304" y="240" width="8" height="8" fill="#6e0096"/><rect x="312" y="240" width="8" height="8" fill="#780096"/><rect x="320" y="240" width="16" height="8" fill="#820096"/><rect x="336" y="240" width="8" height="8" fill="#8c0096"/><rect x="344" y="240" width="8" height="8" fill="#960096"/><rect x="352" y="240" width="8" height="8" fill="#96008c"/><rect x="360" y="240" width="16" height="8" fill="#960082"/><rect x="376" y="240" width="16" height="8" fill="#960078"/><rect x="392" y="240" width="16" height="8" fill="#96006e"/><rect x="408" y="240" width="24" height="8" fill="#960064"/><rect x="432" y="240" width="24" height="8" fill="#96005a"/><rect x="456" y="240" width="32" height="8" fill="#960050"/><rect x="488" y="240" width="40" height="8" fill="#960046"/><rect x="528" y="240" width="48" height="8" fill="#96003c"/><rect x="576" y="240" width="64" height="8" fill="#960032"/><rect x="0" y="248" width="56" height="8" fill="#003296"/><rect x="56" y="248" width="56" height="8" fill="#002896"/><rect x="112" y="248" width="48" height="8" fill="#001e96"/><rect x="160" y="248" width="8" height="8" fill="#001496"/><rect x="168" y="248" width="8" height="8" fill="#0028fa"/><rect x="176" y="248" width="8" height="8" fill="#0a28fa"/><rect x="184" y="248" width="8" height="8" fill="#141efa"/><rect x="192" y="248" width="8" height="8" fill="#1e1efa"/><rect x="200" y="248" width="8" height="8" fill="#281efa"/><rect x="208" y="248" width="8" height="8" fill="#321efa"/><rect x="216" y="248" width="8" height="8" fill="#3c14fa"/><rect x="224" y="248" width="8" height="8" fill="#4614fa"/><rect x="232" y="248" width="8" height="8" fill="#5014fa"/><rect x="240" y="248" width="8" height="8" fill="#5a0afa"/><rect x="248" y="248" width="8" height="8" fill="#640afa"/><rect x="256" y="248" width="8" height="8" fill="#6e0afa"/><rect x="264" y="248" width="8" height="8" fill="#820afa"/><rect x="272" y="248" width="8" height="8" fill="#8c00fa"/><rect x="280" y="248" width="8" height="8" fill="#9600fa"/><rect x="288" y="248" width="8" height="8" fill="#a000fa"/><rect x="296" y="248" width="8" height="8" fill="#640096"/><rect x="304" y="248" width="16" height="8" fill="#6e0096"/><rect x="320" y="248" width="8" height="8" fill="#780096"/><rect x="328" y="248" width="16" height="8" fill="#820096"/><rect x="344" y="248" width="8" height="8" fill="#8c0096"/><rect x="352" y="248" width="8" height="8" fill="#960096"/><rect x="360" y="248" width="16" height="8" fill="#96008c"/><rect x="376" y="248" width="8" height="8" fill="#960082"/><rect x="384" y="248" width="16" height="8" fill="#960078"/><rect x="400" y="248" width="24" height="8" fill="#96006e"/><rect x="424" y="248" width="24" height="8" fill="#960064"/><rect x="448" y="248" width="24" height="8" fill="#96005a"/><rect x="472" y="248" width="32" height="8" fill="#960050"/><rect x="504" y="248" width="40" height="8" fill="#960046"/><rect x="544" y="248" width="48" height="8" fill="#96003c"/><rect x="592" y="248" width="48" height="8" fill="#960032"/><rect x="0" y="256" width="40" height="8" fill="#003296"/><rect x="40" y="256" width="56" height="8" fill="#002896"/><rect x="96" y="256" width="48" height="8" fill="#001e96"/><rect x="144" y="256" width="24" height="8" fill="#001496"/><rect x="168" y="256" width="8" height="8" fill="#0028fa"/><rect x="176" y="256" width="8" height="8" fill="#0a1efa"/><rect x="184" y="256" width="8" height="8" fill="#141efa"/><rect x="192" y="256" width="8" height="8" fill="#1e1efa"/><rect x="200" y="256" width="8" height="8" fill="#281efa"/><rect x="208" y="256" width="8" height="8" fill="#3214fa"/><rect x="216" y="256" width="8" height="8" fill="#3c14fa"/><rect x="224" y="256" width="8" height="8" fill="#4614fa"/><rect x="232" y="256" width="8" height="8" fill="#500afa"/><rect x="240" y="256" width="8" height="8" fill="#5a0afa"/><rect x="248" y="256" width="8" height="8" fill="#640afa"/><rect x="256" y="256" width="8" height="8" fill="#6e0afa"/><rect x="264" y="256" width="8" height="8" fill="#7800fa"/><rect x="272" y="256" width="8" height="8" fill="#8200fa"/><rect x="280" y="256" width="8" height="8" fill="#8c00fa"/><rect x="288" y="256" width="8" height="8" fill="#5a0096"/><rect x="296" y="256" width="16" height="8" fill="#640096"/><rect x="312" y="256" width="16" height="8" fill="#6e0096"/><rect x="328" y="256" width="8" height="8" fill="#780096"/><rect x="336" y="256" width="16" height="8" fill="#820096"/><rect x="352" y="256" width="8" height="8" fill="#8c0096"/><rect x="360" y="256" width="8" height="8" fill="#960096"/><rect x="368" y="256" width="16" height="8" fill="#96008c"/><rect x="384" y="256" width="8" height="8" fill="#960082"/><rect x="392" y="256" width="24" height="8" fill="#960078"/><rect x="416" y="256" width="16" height="8" fill="#96006e"/><rect x="432" y="256" width="24" height="8" fill="#960064"/><rect x="456" y="256" width="24" height="8" fill="#96005a"/><rect x="480" y="256" width="40" height="8" fill="#960050"/><rect x="520" y="256" width="40" height="8" fill="#960046"/><rect x="560" y="256" width="56" height="8" fill="#96003c"/><rect x="616" y="256" width="24" height="8" fill="#960032"/><rect x="0" y="264" width="24" height="8" fill="#003296"/><rect x="24" y="264" width="56" height="8" fill="#002896"/><rect x="80" y="264" width="56" height="8" fill="#001e96"/><rect x="136" y="264" width="32" height="8" fill="#001496"/><rect x="168" y="264" width="8" height="8" fill="#001efa"/><rect x="176" y="264" width="16" height="8" fill="#0a1efa"/><rect x="192" y="264" width="8" height="8" fill="#1414fa"/><rect x="200" y="264" width="8" height="8" fill="#1e14fa"/><rect x="208" y="264" width="8" height="8" fill="#2814fa"/><rect x="216" y="264" width="8" height="8" fill="#3214fa"/><rect x="224" y="264" width="8" height="8" fill="#3c0afa"/><rect x="232" y="264" width="8" height="8" fill="#460afa"/><rect x="240" y="264" width="8" height="8" fill="#500afa"/><rect x="248" y="264" width="8" height="8" fill="#5a0afa"/><rect x="256" y="264" width="8" height="8" fill="#6400fa"/><rect x="264" y="264" width="8" height="8" fill="#6e00fa"/><rect x="272" y="264" width="8" height="8" fill="#7800fa"/><rect x="280" y="264" width="16" height="8" fill="#500096"/><rect x="296" y="264" width="8" height="8" fill="#5a0096"/><rect x="304" y="264" width="16" height="8" fill="#640096"/><rect x="320" y="264" width="8" height="8" fill="#6e0096"/><rect x="328" y="264" width="16" height="8" fill="#780096"/><rect x="344" y="264" width="8" height="8" fill="#820096"/><rect x="352" y="264" width="16" height="8" fill="#8c0096"/><rect x="368" y="264" width="8" height="8" fill="#960096"/><rect x="376" y="264" width="16" height="8" fill="#96008c"/><rect x="392" y="264" width="16" height="8" fill="#960082"/><rect x="408" y="264" width="16" height="8" fill="#960078"/><rect x="424" y="264" width="16" height="8" fill="#96006e"/><rect x="440" y="264" width="24" height="8" fill="#960064"/><rect x="464" y="264" width="32" height="8" fill="#96005a"/><rect x="496" y="264" width="32" height="8" fill="#960050"/><rect x="528" y="264" width="48" height="8" fill="#960046"/><rect x="576" y="264" width="56" height="8" fill="#96003c"/><rect x="632" y="264" width="8" height="8" fill="#960032"/><rect x="0" y="272" width="64" height="8" fill="#002896"/><rect x="64" y="272" width="56" height="8" fill="#001e96"/><rect x="120" y="272" width="56" height="8" fill="#001496"/><rect x="176" y="272" width="8" height="8" fill="#001efa"/><rect x="184" y="272" width="8" height="8" fill="#0a14fa"/><rect x="192" y="272" width="8" height="8" fill="#1414fa"/><rect x="200" y="272" width="8" height="8" fill="#1e14fa"/><rect x="208" y="272" width="8" height="8" fill="#2814fa"/><rect x="216" y="272" width="8" height="8" fill="#320afa"/><rect x="224" y="272" width="8" height="8" fill="#3c0afa"/><rect x="232" y="272" width="8" height="8" fill="#460afa"/><rect x="240" y="272" width="8" height="8" fill="#5000fa"/><rect x="248" y="272" width="8" height="8" fill="#5a00fa"/><rect x="256" y="272" width="8" height="8" fill="#6400fa"/><rect x="264" y="272" width="8" height="8" fill="#6e00fa"/><rect x="272" y="272" width="16" height="8" fill="#460096"/><rect x="288" y="272" width="8" height="8" fill="#500096"/><rect x="296" y="272" width="16" height="8" fill="#5a0096"/><rect x="312" y="272" width="16" height="8" fill="#640096"/><rect x="328" y="272" width="8" height="8" fill="#6e0096"/><rect x="336" y="272" width="16" height="8" fill="#780096"/><rect x="352" y="272" width="8" height="8" fill="#820096"/><rect x="360" y="272" width="16" height="8" fill="#8c0096"/><rect x="376" y="272" width="8" height="8" fill="#960096"/><rect x="384" y="272" width="16" height="8" fill="#96008c"/><rect x="400" y="272" width="16" height="8" fill="#960082"/><rect x="416" y="272" width="16" height="8" fill="#960078"/><rect x="432" y="272" width="24" height="8" fill="#96006e"/><rect x="456" y="272" width="24" height="8" fill="#960064"/><rect x="480" y="272" width="24" height="8" fill="#96005a"/><rect x="504" y="272" width="40" height="8" fill="#960050"/><rect x="544" y="272" width="48" height="8" fill="#960046"/><rect x="592" y="272" width="48" height="8" fill="#96003c"/><rect x="0" y="280" width="48" height="8" fill="#002896"/><rect x="48" y="280" width="56" height="8" fill="#001e96"/><rect x="104" y="280" width="56" height="8" fill="#001496"/><rect x="160" y="280" width="16" height="8" fill="#000a96"/><rect x="176" y="280" width="8" height="8" fill="#0014fa"/><rect x="184" y="280" width="8" height="8" fill="#0a14fa"/><rect x="192" y="280" width="8" height="8" fill="#1414fa"/><rect x="200" y="280" width="8" height="8" fill="#1e0afa"/><rect x="208" y="280" width="8" height="8" fill="#280afa"/><rect x="216" y="280" width="8" height="8" fill="#320afa"/><rect x="224" y="280" width="8" height="8" fill="#3c0afa"/><rect x="232" y="280" width="8" height="8" fill="#3c00fa"/><rect x="240" y="280" width="8" height="8" fill="#4600fa"/><rect x="248" y="280" width="8" height="8" fill="#5000fa"/><rect x="256" y="280" width="8" height="8" fill="#5a00fa"/><rect x="264" y="280" width="8" height="8" fill="#3c0096"/><rect x="272" y="280" width="16" height="8" fill="#460096"/><rect x="288" y="280" width="16" height="8" fill="#500096"/><rect x="304" y="280" width="16" height="8" fill="#5a0096"/><rect x="320" y="280" width="8" height="8" fill="#640096"/><rect x="328" y="280" width="16" height="8" fill="#6e0096"/><rect x="344" y="280" width="16" height="8" fill="#780096"/><rect x="360" y="280" width="8" height="8" fill="#820096"/><rect x="368" y="280" width="16" height="8" fill="#8c0096"/><rect x="384" y="280" width="8" height="8" fill="#960096"/><rect x="392" y="280" width="16" height="8" fill="#96008c"/><rect x="408" y="280" width="16" height="8" fill="#960082"/><rect x="424" y="280" width="16" height="8" fill="#960078"/><rect x="440" y="280" width="24" height="8" fill="#96006e"/><rect x="464" y="280" width="24" height="8" fill="#960064"/><rect x="488" y="280" width="32" height="8" fill="#96005a"/><rect x="520" y="280" width="40" height="8" fill="#960050"/><rect x="560" y="280" width="40" height="8" fill="#960046"/><rect x="600" y="280" width="40" height="8" fill="#96003c"/><rect x="0" y="288" width="32" height="8" fill="#002896"/><rect x="32" y="288" width="56" height="8" fill="#001e96"/><rect x="88" y="288" width="64" height="8" fill="#001496"/><rect x="152" y="288" width="24" height="8" fill="#000a96"/><rect x="176" y="288" width="8" height="8" fill="#0014fa"/><rect x="184" y="288" width="8" height="8" fill="#0a14fa"/><rect x="192" y="288" width="8" height="8" fill="#140afa"/><rect x="200" y="288" width="16" height="8" fill="#1e0afa"/><rect x="216" y="288" width="8" height="8" fill="#280afa"/><rect x="224" y="288" width="8" height="8" fill="#3200fa"/><rect x="232" y="288" width="8" height="8" fill="#3c00fa"/><rect x="240" y="288" width="8" height="8" fill="#4600fa"/><rect x="248" y="288" width="8" height="8" fill="#5000fa"/><rect x="256" y="288" width="8" height="8" fill="#320096"/><rect x="264" y="288" width="16" height="8" fill="#3c0096"/><rect x="280" y="288" width="16" height="8" fill="#460096"/><rect x="296" y="288" width="16" height="8" fill="#500096"/><rect x="312" y="288" width="8" height="8" fill="#5a0096"/><rect x="320" y="288" width="16" height="8" fill="#640096"/><rect x="336" y="288" width="16" height="8" fill="#6e0096"/><rect x="352" y="288" width="16" height="8" fill="#780096"/><rect x="368" y="288" width="8" height="8" fill="#820096"/><rect x="376" y="288" width="16" height="8" fill="#8c0096"/><rect x="392" y="288" width="8" height="8" fill="#960096"/><rect x="400" y="288" width="16" height="8" fill="#96008c"/><rect x="416" y="288" width="16" height="8" fill="#960082"/><rect x="432" y="288" width="16" height="8" fill="#960078"/><rect x="448" y="288" width="24" height="8" fill="#96006e"/><rect x="472" y="288" width="32" height="8" fill="#960064"/><rect x="504" y="288" width="32" height="8" fill="#96005a"/><rect x="536" y="288" width="32" height="8" fill="#960050"/><rect x="568" y="288" width="48" height="8" fill="#960046"/><rect x="616" y="288" width="24" height="8" fill="#96003c"/><rect x="0" y="296" width="16" height="8" fill="#002896"/><rect x="16" y="296" width="64" height="8" fill="#001e96"/><rect x="80" y="296" width="56" height="8" fill="#001496"/><rect x="136" y="296" width="40" height="8" fill="#000a96"/><rect x="176" y="296" width="8" height="8" fill="#0014fa"/><rect x="184" y="296" width="8" height="8" fill="#0a0afa"/><rect x="192" y="296" width="16" height="8" fill="#140afa"/><rect x="208" y="296" width="8" height="8" fill="#1e0afa"/><rect x="216" y="296" width="8" height="8" fill="#2800fa"/><rect x="224" y="296" width="8" height="8" fill="#3200fa"/><rect x="232" y="296" width="8" height="8" fill="#3c00fa"/><rect x="240" y="296" width="8" height="8" fill="#4600fa"/><rect x="248" y="296" width="8" height="8" fill="#280096"/><rect x="256" y="296" width="16" height="8" fill="#320096"/><rect x="272" y="296" width="16" height="8" fill="#3c0096"/><rect x="288" y="296" width="8" height="8" fill="#460096"/><rect x="296" y="296" width="16" height="8" fill="#500096"/><rect x="312" y="296" width="16" height="8" fill="#5a0096"/><rect x="328" y="296" width="16" height="8" fill="#640096"/><rect x="344" y="296" width="16" height="8" fill="#6e0096"/><rect x="360" y="296" width="8" height="8" fill="#780096"/><rect x="368" y="296" width="16" height="8" fill="#820096"/><rect x="384" y="296" width="16" height="8" fill="#8c0096"/><rect x="400" y="296" width="8" height="8" fill="#960096"/><rect x="408" y="296" width="16" height="8" fill="#96008c"/><rect x="424" y="296" width="16" height="8" fill="#960082"/><rect x="440" y="296" width="24" height="8" fill="#960078"/><rect x="464" y="296" width="24" height="8" fill="#96006e"/><rect x="488" y="296" width="24" height="8" fill="#960064"/><rect x="512" y="296" width="32" height="8" fill="#96005a"/><rect x="544" y="296" width="40" height="8" fill="#960050"/><rect x="584" y="296" width="48" height="8" fill="#960046"/><rect x="632" y="296" width="8" height="8" fill="#96003c"/><rect x="0" y="304" width="64" height="8" fill="#001e96"/><rect x="64" y="304" width="64" height="8" fill="#001496"/><rect x="128" y="304" width="48" height="8" fill="#000a96"/><rect x="176" y="304" width="8" height="8" fill="#000afa"/><rect x="184" y="304" width="16" height="8" fill="#0a0afa"/><rect x="200" y="304" width="8" height="8" fill="#140afa"/><rect x="208" y="304" width="8" height="8" fill="#1e00fa"/><rect x="216" y="304" width="8" height="8" fill="#2800fa"/><rect x="224" y="304" width="16" height="8" fill="#3200fa"/><rect x="240" y="304" width="16" height="8" fill="#280096"/><rect x="256" y="304" width="16" height="8" fill="#320096"/><rect x="272" y="304" width="16" height="8" fill="#3c0096"/><rect x="288" y="304" width="16" height="8" fill="#460096"/><rect x="304" y="304" width="16" height="8" fill="#500096"/><rect x="320" y="304" width="16" height="8" fill="#5a0096"/><rect x="336" y="304" width="16" height="8" fill="#640096"/><rect x="352" y="304" width="16" height="8" fill="#6e0096"/><rect x="368" y="304" width="8" height="8" fill="#780096"/><rect x="376" y="304" width="16" height="8" fill="#820096"/><rect x="392" y="304" width="16" height="8" fill="#8c0096"/><rect x="408" y="304" width="8" height="8" fill="#960096"/><rect x="416" y="304" width="16" height="8" fill="#96008c"/><rect x="432" y="304" width="16" height="8" fill="#960082"/><rect x="448" y="304" width="24" height="8" fill="#960078"/><rect x="472" y="304" width="24" height="8" fill="#96006e"/><rect x="496" y="304" width="24" height="8" fill="#960064"/><rect x="520" y="304" width="40" height="8" fill="#96005a"/><rect x="560" y="304" width="40" height="8" fill="#960050"/><rect x="600" y="304" width="40" height="8" fill="#960046"/><rect x="0" y="312" width="48" height="8" fill="#001e96"/><rect x="48" y="312" width="64" height="8" fill="#001496"/><rect x="112" y="312" width="64" height="8" fill="#000a96"/><rect x="176" y="312" width="16" height="8" fill="#000afa"/><rect x="192" y="312" width="8" height="8" fill="#0a0afa"/><rect x="200" y="312" width="8" height="8" fill="#1400fa"/><rect x="208" y="312" width="8" height="8" fill="#1e00fa"/><rect x="216" y="312" width="16" height="8" fill="#2800fa"/><rect x="232" y="312" width="16" height="8" fill="#1e0096"/><rect x="248" y="312" width="16" height="8" fill="#280096"/><rect x="264" y="312" width="16" height="8" fill="#320096"/><rect x="280" y="312" width="16" height="8" fill="#3c0096"/><rect x="296" y="312" width="16" height="8" fill="#460096"/><rect x="312" y="312" width="16" height="8" fill="#500096"/><rect x="328" y="312" width="16" height="8" fill="#5a0096"/><rect x="344" y="312" width="8" height="8" fill="#640096"/><rect x="352" y="312" width="16" height="8" fill="#6e0096"/><rect x="368" y="312" width="16" height="8" fill="#780096"/><rect x="384" y="312" width="16" height="8" fill="#820096"/><rect x="400" y="312" width="16" height="8" fill="#8c0096"/><rect x="416" y="312" width="8" height="8" fill="#960096"/><rect x="424" y="312" width="16" height="8" fill="#96008c"/><rect x="440" y="312" width="16" height="8" fill="#960082"/><rect x="456" y="312" width="24" height="8" fill="#960078"/><rect x="480" y="312" width="24" height="8" fill="#96006e"/><rect x="504" y="312" width="32" height="8" fill="#960064"/><rect x="536" y="312" width="32" height="8" fill="#96005a"/><rect x="568" y="312" width="40" height="8" fill="#960050"/><rect x="608" y="312" width="32" height="8" fill="#960046"/><rect x="0" y="320" width="40" height="8" fill="#001e96"/><rect x="40" y="320" width="64" height="8" fill="#001496"/><rect x="104" y="320" width="64" height="8" fill="#000a96"/><rect x="168" y="320" width="16" height="8" fill="#000096"/><rect x="184" y="320" width="8" height="8" fill="#000afa"/><rect x="192" y="320" width="8" height="8" fill="#0a00fa"/><rect x="200" y="320" width="8" height="8" fill="#1400fa"/><rect x="208" y="320" width="16" height="8" fill="#1e00fa"/><rect x="224" y="320" width="8" height="8" fill="#140096"/><rect x="232" y="320" width="16" height="8" fill="#1e0096"/><rect x="248" y="320" width="16" height="8" fill="#280096"/><rect x="264" y="320" width="16" height="8" fill="#320096"/><rect x="280" y="320" width="16" height="8" fill="#3c0096"/><rect x="296" y="320" width="16" height="8" fill="#460096"/><rect x="312" y="320" width="16" height="8" fill="#500096"/><rect x="328" y="320" width="16" height="8" fill="#5a0096"/><rect x="344" y="320" width="16" height="8" fill="#640096"/><rect x="360" y="320" width="16" height="8" fill="#6e0096"/><rect x="376" y="320" width="16" height="8" fill="#780096"/><rect x="392" y="320" width="16" height="8" fill="#820096"/><rect x="408" y="320" width="16" height="8" fill="#8c0096"/><rect x="424" y="320" width="8" height="8" fill="#960096"/><rect x="432" y="320" width="16" height="8" fill="#96008c"/><rect x="448" y="320" width="24" height="8" fill="#960082"/><rect x="472" y="320" width="16" height="8" fill="#960078"/><rect x="488" y="320" width="32" height="8" fill="#96006e"/><rect x="520" y="320" width="24" height="8" fill="#960064"/><rect x="544" y="320" width="40" height="8" fill="#96005a"/><rect x="584" y="320" width="40" height="8" fill="#960050"/><rect x="624" y="320" width="16" height="8" fill="#960046"/><rect x="0" y="328" width="24" height="8" fill="#001e96"/><rect x="24" y="328" width="64" height="8" fill="#001496"/><rect x="88" y="328" width="72" height="8" fill="#000a96"/><rect x="160" y="328" width="24" height="8" fill="#000096"/><rect x="184" y="328" width="8" height="8" fill="#0000fa"/><rect x="192" y="328" width="8" height="8" fill="#0a00fa"/><rect x="200" y="328" width="16" height="8" fill="#1400fa"/><rect x="216" y="328" width="16" height="8" fill="#140096"/><rect x="232" y="328" width="16" height="8" fill="#1e0096"/><rect x="248" y="328" width="24" height="8" fill="#280096"/><rect x="272" y="328" width="16" height="8" fill="#320096"/><rect x="288" y="328" width="16" height="8" fill="#3c0096"/><rect x="304" y="328" width="16" height="8" fill="#460096"/><rect x="320" y="328" width="16" height="8" fill="#500096"/><rect x="336" y="328" width="16" height="8" fill="#5a0096"/><rect x="352" y="328" width="16" height="8" fill="#640096"/><rect x="368" y="328" width="16" height="8" fill="#6e0096"/><rect x="384" y="328" width="16" height="8" fill="#780096"/><rect x="400" y="328" width="16" height="8" fill="#820096"/><rect x="416" y="328" width="16" height="8" fill="#8c0096"/><rect x="432" y="328" width="8" height="8" fill="#960096"/><rect x="440" y="328" width="16" height="8" fill="#96008c"/><rect x="456" y="328" width="24" height="8" fill="#960082"/><rect x="480" y="328" width="24" height="8" fill="#960078"/><rect x="504" y="328" width="24" height="8" fill="#96006e"/><rect x="528" y="328" width="32" height="8" fill="#960064"/><rect x="560" y="328" width="32" height="8" fill="#96005a"/><rect x="592" y="328" width="48" height="8" fill="#960050"/><rect x="0" y="336" width="8" height="8" fill="#001e96"/><rect x="8" y="336" width="72" height="8" fill="#001496"/><rect x="80" y="336" width="64" height="8" fill="#000a96"/><rect x="144" y="336" width="40" height="8" fill="#000096"/><rect x="184" y="336" width="8" height="8" fill="#0000fa"/><rect x="192" y="336" width="16" height="8" fill="#0a00fa"/><rect x="208" y="336" width="8" height="8" fill="#0a0096"/><rect x="216" y="336" width="24" height="8" fill="#140096"/><rect x="240" y="336" width="16" height="8" fill="#1e0096"/><rect x="256" y="336" width="16" height="8" fill="#280096"/><rect x="272" y="336" width="16" height="8" fill="#320096"/><rect x="288" y="336" width="16" height="8" fill="#3c0096"/><rect x="304" y="336" width="24" height="8" fill="#460096"/><rect x="328" y="336" width="16" height="8" fill="#500096"/><rect x="344" y="336" width="16" height="8" fill="#5a0096"/><rect x="360" y="336" width="16" height="8" fill="#640096"/><rect x="376" y="336" width="16" height="8" fill="#6e0096"/><rect x="392" y="336" width="16" height="8" fill="#780096"/><rect x="408" y="336" width="16" height="8" fill="#820096"/><rect x="424" y="336" width="16" height="8" fill="#8c0096"/><rect x="440" y="336" width="8" height="8" fill="#960096"/><rect x="448" y="336" width="16" height="8" fill="#96008c"/><rect x="464" y="336" width="24" height="8" fill="#960082"/><rect x="488" y="336" width="24" height="8" fill="#960078"/><rect x="512" y="336" width="24" height="8" fill="#96006e"/><rect x="536" y="336" width="32" height="8" fill="#960064"/><rect x="568" y="336" width="40" height="8" fill="#96005a"/><rect x="608" y="336" width="32" height="8" fill="#960050"/><rect x="0" y="344" width="72" height="8" fill="#001496"/><rect x="72" y="344" width="64" height="8" fill="#000a96"/><rect x="136" y="344" width="48" height="8" fill="#000096"/><rect x="184" y="344" width="8" height="8" fill="#0000fa"/><rect x="192" y="344" width="8" height="8" fill="#0a00fa"/><rect x="200" y="344" width="24" height="8" fill="#0a0096"/><rect x="224" y="344" width="16" height="8" fill="#140096"/><rect x="240" y="344" width="16" height="8" fill="#1e0096"/><rect x="256" y="344" width="24" height="8" fill="#280096"/><rect x="280" y="344" width="16" height="8" fill="#320096"/><rect x="296" y="344" width="16" height="8" fill="#3c0096"/><rect x="312" y="344" width="16" height="8" fill="#460096"/><rect x="328" y="344" width="16" height="8" fill="#500096"/><rect x="344" y="344" width="16" height="8" fill="#5a0096"/><rect x="360" y="344" width="24" height="8" fill="#640096"/><rect x="384" y="344" width="16" height="8" fill="#6e0096"/><rect x="400" y="344" width="16" height="8" fill="#780096"/><rect x="416" y="344" width="16" height="8" fill="#820096"/><rect x="432" y="344" width="16" height="8" fill="#8c0096"/><rect x="448" y="344" width="8" height="8" fill="#960096"/><rect x="456" y="344" width="24" height="8" fill="#96008c"/><rect x="480" y="344" width="16" height="8" fill="#960082"/><rect x="496" y="344" width="24" height="8" fill="#960078"/><rect x="520" y="344" width="24" height="8" fill="#96006e"/><rect x="544" y="344" width="32" height="8" fill="#960064"/><rect x="576" y="344" width="40" height="8" fill="#96005a"/><rect x="616" y="344" width="24" height="8" fill="#960050"/><rect x="0" y="352" width="56" height="8" fill="#001496"/><rect x="56" y="352" width="72" height="8" fill="#000a96"/><rect x="128" y="352" width="56" height="8" fill="#000096"/><rect x="184" y="352" width="8" height="8" fill="#0000fa"/><rect x="192" y="352" width="16" height="8" fill="#000096"/><rect x="208" y="352" width="16" height="8" fill="#0a0096"/><rect x="224" y="352" width="16" height="8" fill="#140096"/><rect x="240" y="352" width="24" height="8" fill="#1e0096"/><rect x="264" y="352" width="16" height="8" fill="#280096"/><rect x="280" y="352" width="16" height="8" fill="#320096"/><rect x="296" y="352" width="24" height="8" fill="#3c0096"/><rect x="320" y="352" width="16" height="8" fill="#460096"/><rect x="336" y="352" width="16" height="8" fill="#500096"/><rect x="352" y="352" width="16" height="8" fill="#5a0096"/><rect x="368" y="352" width="16" height="8" fill="#640096"/><rect x="384" y="352" width="24" height="8" fill="#6e0096"/><rect x="408" y="352" width="16" height="8" fill="#780096"/><rect x="424" y="352" width="16" height="8" fill="#820096"/><rect x="440" y="352" width="16" height="8" fill="#8c0096"/><rect x="456" y="352" width="8" height="8" fill="#960096"/><rect x="464" y="352" width="24" height="8" fill="#96008c"/><rect x="488" y="352" width="16" height="8" fill="#960082"/><rect x="504" y="352" width="24" height="8" fill="#960078"/><rect x="528" y="352" width="32" height="8" fill="#96006e"/><rect x="560" y="352" width="32" height="8" fill="#960064"/><rect x="592" y="352" width="40" height="8" fill="#96005a"/><rect x="632" y="352" width="8" height="8" fill="#960050"/><rect x="0" y="360" width="48" height="8" fill="#001496"/><rect x="48" y="360" width="72" height="8" fill="#000a96"/><rect x="120" y="360" width="88" height="8" fill="#000096"/><rect x="208" y="360" width="16" height="8" fill="#0a0096"/><rect x="224" y="360" width="24" height="8" fill="#140096"/><rect x="248" y="360" width="16" height="8" fill="#1e0096"/><rect x="264" y="360" width="16" height="8" fill="#280096"/><rect x="280" y="360" width="24" height="8" fill="#320096"/><rect x="304" y="360" width="16" height="8" fill="#3c0096"/><rect x="320" y="360" width="16" height="8" fill="#460096"/><rect x="336" y="360" width="24" height="8" fill="#500096"/><rect x="360" y="360" width="16" height="8" fill="#5a0096"/><rect x="376" y="360" width="16" height="8" fill="#640096"/><rect x="392" y="360" width="16" height="8" fill="#6e0096"/><rect x="408" y="360" width="24" height="8" fill="#780096"/><rect x="432" y="360" width="16" height="8" fill="#820096"/><rect x="448" y="360" width="16" height="8" fill="#8c0096"/><rect x="464" y="360" width="8" height="8" fill="#960096"/><rect x="472" y="360" width="24" height="8" fill="#96008c"/><rect x="496" y="360" width="16" height="8" fill="#960082"/><rect x="512" y="360" width="24" height="8" fill="#960078"/><rect x="536" y="360" width="32" height="8" fill="#96006e"/><rect x="568" y="360" width="32" height="8" fill="#960064"/><rect x="600" y="360" width="40" height="8" fill="#96005a"/><rect x="0" y="368" width="32" height="8" fill="#001496"/><rect x="32" y="368" width="80" height="8" fill="#000a96"/><rect x="112" y="368" width="96" height="8" fill="#000096"/><rect x="208" y="368" width="24" height="8" fill="#0a0096"/><rect x="232" y="368" width="16" height="8" fill="#140096"/><rect x="248" y="368" width="16" height="8" fill="#1e0096"/><rect x="264" y="368" width="24" height="8" fill="#280096"/><rect x="288" y="368" width="16" height="8" fill="#320096"/><rect x="304" y="368" width="24" height="8" fill="#3c0096"/><rect x="328" y="368" width="16" height="8" fill="#460096"/><rect x="344" y="368" width="16" height="8" fill="#500096"/><rect x="360" y="368" width="24" height="8" fill="#5a0096"/><rect x="384" y="368" width="16" height="8" fill="#640096"/><rect x="400" y="368" width="16" height="8" fill="#6e0096"/><rect x="416" y="368" width="16" height="8" fill="#780096"/><rect x="432" y="368" width="24" height="8" fill="#820096"/><rect x="456" y="368" width="16" height="8" fill="#8c0096"/><rect x="472" y="368" width="8" height="8" fill="#960096"/><rect x="480" y="368" width="24" height="8" fill="#96008c"/><rect x="504" y="368" width="24" height="8" fill="#960082"/><rect x="528" y="368" width="24" height="8" fill="#960078"/><rect x="552" y="368" width="24" height="8" fill="#96006e"/><rect x="576" y="368" width="40" height="8" fill="#960064"/><rect x="616" y="368" width="24" height="8" fill="#96005a"/><rect x="0" y="376" width="24" height="8" fill="#001496"/><rect x="24" y="376" width="72" height="8" fill="#000a96"/><rect x="96" y="376" width="112" height="8" fill="#000096"/><rect x="208" y="376" width="24" height="8" fill="#0a0096"/><rect x="232" y="376" width="16" height="8" fill="#140096"/><rect x="248" y="376" width="24" height="8" fill="#1e0096"/><rect x="272" y="376" width="16" height="8" fill="#280096"/><rect x="288" y="376" width="24" height="8" fill="#320096"/><rect x="312" y="376" width="16" height="8" fill="#3c0096"/><rect x="328" y="376" width="24" height="8" fill="#460096"/><rect x="352" y="376" width="16" height="8" fill="#500096"/><rect x="368" y="376" width="16" height="8" fill="#5a0096"/><rect x="384" y="376" width="24" height="8" fill="#640096"/><rect x="408" y="376" width="16" height="8" fill="#6e0096"/><rect x="424" y="376" width="16" height="8" fill="#780096"/><rect x="440" y="376" width="24" height="8" fill="#820096"/><rect x="464" y="376" width="16" height="8" fill="#8c0096"/><rect x="480" y="376" width="8" height="8" fill="#960096"/><rect x="488" y="376" width="24" height="8" fill="#96008c"/><rect x="512" y="376" width="24" height="8" fill="#960082"/><rect x="536" y="376" width="24" height="8" fill="#960078"/><rect x="560" y="376" width="32" height="8" fill="#96006e"/><rect x="592" y="376" width="32" height="8" fill="#960064"/><rect x="624" y="376" width="16" height="8" fill="#96005a"/><rect x="0" y="384" width="8" height="8" fill="#001496"/><rect x="8" y="384" width="80" height="8" fill="#000a96"/><rect x="88" y="384" width="120" height="8" fill="#000096"/><rect x="208" y="384" width="24" height="8" fill="#0a0096"/><rect x="232" y="384" width="24" height="8" fill="#140096"/><rect x="256" y="384" width="16" height="8" fill="#1e0096"/><rect x="272" y="384" width="24" height="8" fill="#280096"/><rect x="296" y="384" width="16" height="8" fill="#320096"/><rect x="312" y="384" width="24" height="8" fill="#3c0096"/><rect x="336" y="384" width="16" height="8" fill="#460096"/><rect x="352" y="384" width="24" height="8" fill="#500096"/><rect x="376" y="384" width="16" height="8" fill="#5a0096"/><rect x="392" y="384" width="24" height="8" fill="#640096"/><rect x="416" y="384" width="16" height="8" fill="#6e0096"/><rect x="432" y="384" width="16" height="8" fill="#780096"/><rect x="448" y="384" width="24" height="8" fill="#820096"/><rect x="472" y="384" width="16" height="8" fill="#8c0096"/><rect x="488" y="384" width="8" height="8" fill="#960096"/><rect x="496" y="384" width="24" height="8" fill="#96008c"/><rect x="520" y="384" width="24" height="8" fill="#960082"/><rect x="544" y="384" width="24" height="8" fill="#960078"/><rect x="568" y="384" width="32" height="8" fill="#96006e"/><rect x="600" y="384" width="32" height="8" fill="#960064"/><rect x="632" y="384" width="8" height="8" fill="#96005a"/><rect x="0" y="392" width="80" height="8" fill="#000a96"/><rect x="80" y="392" width="136" height="8" fill="#000096"/><rect x="216" y="392" width="16" height="8" fill="#0a0096"/><rect x="232" y="392" width="24" height="8" fill="#140096"/><rect x="256" y="392" width="24" height="8" fill="#1e0096"/><rect x="280" y="392" width="16" height="8" fill="#280096"/><rect x="296" y="392" width="24" height="8" fill="#320096"/><rect x="320" y="392" width="16" height="8" fill="#3c0096"/><rect x="336" y="392" width="24" height="8" fill="#460096"/><rect x="360" y="392" width="16" height="8" fill="#500096"/><rect x="376" y="392" width="24" height="8" fill="#5a0096"/><rect x="400" y="392" width="16" height="8" fill="#640096"/><rect x="416" y="392" width="24" height="8" fill="#6e0096"/><rect x="440" y="392" width="16" height="8" fill="#780096"/><rect x="456" y="392" width="16" height="8" fill="#820096"/><rect x="472" y="392" width="24" height="8" fill="#8c0096"/><rect x="496" y="392" width="8" height="8" fill="#960096"/><rect x="504" y="392" width="24" height="8" fill="#96008c"/><rect x="528" y="392" width="24" height="8" fill="#960082"/><rect x="552" y="392" width="24" height="8" fill="#960078"/><rect x="576" y="392" width="32" height="8" fill="#96006e"/><rect x="608" y="392" width="32" height="8" fill="#960064"/><rect x="0" y="400" width="72" height="8" fill="#000a96"/><rect x="72" y="400" width="144" height="8" fill="#000096"/><rect x="216" y="400" width="24" height="8" fill="#0a0096"/><rect x="240" y="400" width="16" height="8" fill="#140096"/><rect x="256" y="400" width="24" height="8" fill="#1e0096"/><rect x="280" y="400" width="24" height="8" fill="#280096"/><rect x="304" y="400" width="16" height="8" fill="#320096"/><rect x="320" y="400" width="24" height="8" fill="#3c0096"/><rect x="344" y="400" width="24" height="8" fill="#460096"/><rect x="368" y="400" width="16" height="8" fill="#500096"/><rect x="384" y="400" width="24" height="8" fill="#5a0096"/><rect x="408" y="400" width="16" height="8" fill="#640096"/><rect x="424" y="400" width="24" height="8" fill="#6e0096"/><rect x="448" y="400" width="16" height="8" fill="#780096"/><rect x="464" y="400" width="16" height="8" fill="#820096"/><rect x="480" y="400" width="24" height="8" fill="#8c0096"/><rect x="504" y="400" width="8" height="8" fill="#960096"/><rect x="512" y="400" width="24" height="8" fill="#96008c"/><rect x="536" y="400" width="24" height="8" fill="#960082"/><rect x="560" y="400" width="32" height="8" fill="#960078"/><rect x="592" y="400" width="32" height="8" fill="#96006e"/><rect x="624" y="400" width="16" height="8" fill="#960064"/><rect x="0" y="408" width="64" height="8" fill="#000a96"/><rect x="64" y="408" width="152" height="8" fill="#000096"/><rect x="216" y="408" width="24" height="8" fill="#0a0096"/><rect x="240" y="408" width="24" height="8" fill="#140096"/><rect x="264" y="408" width="16" height="8" fill="#1e0096"/><rect x="280" y="408" width="24" height="8" fill="#280096"/><rect x="304" y="408" width="24" height="8" fill="#320096"/><rect x="328" y="408" width="24" height="8" fill="#3c0096"/><rect x="352" y="408" width="16" height="8" fill="#460096"/><rect x="368" y="408" width="24" height="8" fill="#500096"/><rect x="392" y="408" width="16" height="8" fill="#5a0096"/><rect x="408" y="408" width="24" height="8" fill="#640096"/><rect x="432" y="408" width="16" height="8" fill="#6e0096"/><rect x="448" y="408" width="24" height="8" fill="#780096"/><rect x="472" y="408" width="16" height="8" fill="#820096"/><rect x="488" y="408" width="24" height="8" fill="#8c0096"/><rect x="512" y="408" width="8" height="8" fill="#960096"/><rect x="520" y="408" width="24" height="8" fill="#96008c"/><rect x="544" y="408" width="24" height="8" fill="#960082"/><rect x="568" y="408" width="32" height="8" fill="#960078"/><rect x="600" y="408" width="32" height="8" fill="#96006e"/><rect x="632" y="408" width="8" height="8" fill="#960064"/><rect x="0" y="416" width="48" height="8" fill="#000a96"/><rect x="48" y="416" width="168" height="8" fill="#000096"/><rect x="216" y="416" width="24" height="8" fill="#0a0096"/><rect x="240" y="416" width="24" height="8" fill="#140096"/><rect x="264" y="416" width="24" height="8" fill="#1e0096"/><rect x="288" y="416" width="24" height="8" fill="#280096"/><rect x="312" y="416" width="16" height="8" fill="#320096"/><rect x="328" y="416" width="24" height="8" fill="#3c0096"/><rect x="352" y="416" width="24" height="8" fill="#460096"/><rect x="376" y="416" width="16" height="8" fill="#500096"/><rect x="392" y="416" width="24" height="8" fill="#5a0096"/><rect x="416" y="416" width="24" height="8" fill="#640096"/><rect x="440" y="416" width="16" height="8" fill="#6e0096"/><rect x="456" y="416" width="24" height="8" fill="#780096"/><rect x="480" y="416" width="16" height="8" fill="#820096"/><rect x="496" y="416" width="24" height="8" fill="#8c0096"/><rect x="520" y="416" width="16" height="8" fill="#960096"/><rect x="536" y="416" width="16" height="8" fill="#96008c"/><rect x="552" y="416" width="24" height="8" fill="#960082"/><rect x="576" y="416" width="32" height="8" fill="#960078"/><rect x="608" y="416" width="32" height="8" fill="#96006e"/><rect x="0" y="424" width="40" height="8" fill="#000a96"/><rect x="40" y="424" width="184" height="8" fill="#000096"/><rect x="224" y="424" width="16" height="8" fill="#0a0096"/><rect x="240" y="424" width="24" height="8" fill="#140096"/><rect x="264" y="424" width="24" height="8" fill="#1e0096"/><rect x="288" y="424" width="24" height="8" fill="#280096"/><rect x="312" y="424" width="24" height="8" fill="#320096"/><rect x="336" y="424" width="24" height="8" fill="#3c0096"/><rect x="360" y="424" width="16" height="8" fill="#460096"/><rect x="376" y="424" width="24" height="8" fill="#500096"/><rect x="400" y="424" width="24" height="8" fill="#5a0096"/><rect x="424" y="424" width="16" height="8" fill="#640096"/><rect x="440" y="424" width="24" height="8" fill="#6e0096"/><rect x="464" y="424" width="24" height="8" fill="#780096"/><rect x="488" y="424" width="16" height="8" fill="#820096"/><rect x="504" y="424" width="24" height="8" fill="#8c0096"/><rect x="528" y="424" width="16" height="8" fill="#960096"/><rect x="544" y="424" width="16" height="8" fill="#96008c"/><rect x="560" y="424" width="32" height="8" fill="#960082"/><rect x="592" y="424" width="24" height="8" fill="#960078"/><rect x="616" y="424" width="24" height="8" fill="#96006e"/><rect x="0" y="432" width="32" height="8" fill="#000a96"/><rect x="32" y="432" width="192" height="8" fill="#000096"/><rect x="224" y="432" width="24" height="8" fill="#0a0096"/><rect x="248" y="432" width="24" height="8" fill="#140096"/><rect x="272" y="432" width="24" height="8" fill="#1e0096"/><rect x="296" y="432" width="24" height="8" fill="#280096"/><rect x="320" y="432" width="16" height="8" fill="#320096"/><rect x="336" y="432" width="24" height="8" fill="#3c0096"/><rect x="360" y="432" width="24" height="8" fill="#460096"/><rect x="384" y="432" width="24" height="8" fill="#500096"/><rect x="408" y="432" width="16" height="8" fill="#5a0096"/><rect x="424" y="432" width="24" height="8" fill="#640096"/><rect x="448" y="432" width="24" height="8" fill="#6e0096"/><rect x="472" y="432" width="24" height="8" fill="#780096"/><rect x="496" y="432" width="16" height="8" fill="#820096"/><rect x="512" y="432" width="24" height="8" fill="#8c0096"/><rect x="536" y="432" width="16" height="8" fill="#960096"/><rect x="552" y="432" width="16" height="8" fill="#96008c"/><rect x="568" y="432" width="32" height="8" fill="#960082"/><rect x="600" y="432" width="24" height="8" fill="#960078"/><rect x="624" y="432" width="16" height="8" fill="#96006e"/><rect x="0" y="440" width="24" height="8" fill="#000a96"/><rect x="24" y="440" width="200" height="8" fill="#000096"/><rect x="224" y="440" width="24" height="8" fill="#0a0096"/><rect x="248" y="440" width="24" height="8" fill="#140096"/><rect x="272" y="440" width="24" height="8" fill="#1e0096"/><rect x="296" y="440" width="24" height="8" fill="#280096"/><rect x="320" y="440" width="24" height="8" fill="#320096"/><rect x="344" y="440" width="24" height="8" fill="#3c0096"/><rect x="368" y="440" width="24" height="8" fill="#460096"/><rect x="392" y="440" width="16" height="8" fill="#500096"/><rect x="408" y="440" width="24" height="8" fill="#5a0096"/><rect x="432" y="440" width="24" height="8" fill="#640096"/><rect x="456" y="440" width="24" height="8" fill="#6e0096"/><rect x="480" y="440" width="16" height="8" fill="#780096"/><rect x="496" y="440" width="24" height="8" fill="#820096"/><rect x="520" y="440" width="24" height="8" fill="#8c0096"/><rect x="544" y="440" width="16" height="8" fill="#960096"/><rect x="560" y="440" width="16" height="8" fill="#96008c"/><rect x="576" y="440" width="32" height="8" fill="#960082"/><rect x="608" y="440" width="32" height="8" fill="#960078"/><rect x="0" y="448" width="16" height="8" fill="#000a96"/><rect x="16" y="448" width="208" height="8" fill="#000096"/><rect x="224" y="448" width="24" height="8" fill="#0a0096"/><rect x="248" y="448" width="24" height="8" fill="#140096"/><rect x="272" y="448" width="24" height="8" fill="#1e0096"/><rect x="296" y="448" width="24" height="8" fill="#280096"/><rect x="320" y="448" width="24" height="8" fill="#320096"/><rect x="344" y="448" width="24" height="8" fill="#3c0096"/><rect x="368" y="448" width="24" height="8" fill="#460096"/><rect x="392" y="448" width="24" height="8" fill="#500096"/><rect x="416" y="448" width="24" height="8" fill="#5a0096"/><rect x="440" y="448" width="24" height="8" fill="#640096"/><rect x="464" y="448" width="24" height="8" fill="#6e0096"/><rect x="488" y="448" width="16" height="8" fill="#780096"/><rect x="504" y="448" width="24" height="8" fill="#820096"/><rect x="528" y="448" width="24" height="8" fill="#8c0096"/><rect x="552" y="448" width="16" height="8" fill="#960096"/><rect x="568" y="448" width="24" height="8" fill="#96008c"/><rect x="592" y="448" width="24" height="8" fill="#960082"/><rect x="616" y="448" width="24" height="8" fill="#960078"/><rect x="0" y="456" width="224" height="8" fill="#000096"/><rect x="224" y="456" width="32" height="8" fill="#0a0096"/><rect x="256" y="456" width="24" height="8" fill="#140096"/><rect x="280" y="456" width="24" height="8" fill="#1e0096"/><rect x="304" y="456" width="24" height="8" fill="#280096"/><rect x="328" y="456" width="24" height="8" fill="#320096"/><rect x="352" y="456" width="24" height="8" fill="#3c0096"/><rect x="376" y="456" width="24" height="8" fill="#460096"/><rect x="400" y="456" width="24" height="8" fill="#500096"/><rect x="424" y="456" width="24" height="8" fill="#5a0096"/><rect x="448" y="456" width="24" height="8" fill="#640096"/><rect x="472" y="456" width="16" height="8" fill="#6e0096"/><rect x="488" y="456" width="24" height="8" fill="#780096"/><rect x="512" y="456" width="24" height="8" fill="#820096"/><rect x="536" y="456" width="24" height="8" fill="#8c0096"/><rect x="560" y="456" width="16" height="8" fill="#960096"/><rect x="576" y="456" width="24" height="8" fill="#96008c"/><rect x="600" y="456" width="24" height="8" fill="#960082"/><rect x="624" y="456" width="16" height="8" fill="#960078"/><rect x="0" y="464" width="232" height="8" fill="#000096"/><rect x="232" y="464" width="24" height="8" fill="#0a0096"/><rect x="256" y="464" width="24" height="8" fill="#140096"/><rect x="280" y="464" width="24" height="8" fill="#1e0096"/><rect x="304" y="464" width="24" height="8" fill="#280096"/><rect x="328" y="464" width="24" height="8" fill="#320096"/><rect x="352" y="464" width="24" height="8" fill="#3c0096"/><rect x="376" y="464" width="24" height="8" fill="#460096"/><rect x="400" y="464" width="24" height="8" fill="#500096"/><rect x="424" y="464" width="24" height="8" fill="#5a0096"/><rect x="448" y="464" width="24" height="8" fill="#640096"/><rect x="472" y="464" width="24" height="8" fill="#6e0096"/><rect x="496" y="464" width="24" height="8" fill="#780096"/><rect x="520" y="464" width="24" height="8" fill="#820096"/><rect x="544" y="464" width="24" height="8" fill="#8c0096"/><rect x="568" y="464" width="16" height="8" fill="#960096"/><rect x="584" y="464" width="24" height="8" fill="#96008c"/><rect x="608" y="464" width="24" height="8" fill="#960082"/><rect x="632" y="464" width="8" height="8" fill="#960078"/><rect x="0" y="472" width="232" height="8" fill="#000096"/><rect x="232" y="472" width="24" height="8" fill="#0a0096"/><rect x="256" y="472" width="24" height="8" fill="#140096"/><rect x="280" y="472" width="32" height="8" fill="#1e0096"/><rect x="312" y="472" width="24" height="8" fill="#280096"/><rect x="336" y="472" width="24" height="8" fill="#320096"/><rect x="360" y="472" width="24" height="8" fill="#3c0096"/><rect x="384" y="472" width="24" height="8" fill="#460096"/><rect x="408" y="472" width="24" height="8" fill="#500096"/><rect x="432" y="472" width="24" height="8" fill="#5a0096"/><rect x="456" y="472" width="24" height="8" fill="#640096"/><rect x="480" y="472" width="24" height="8" fill="#6e0096"/><rect x="504" y="472" width="24" height="8" fill="#780096"/><rect x="528" y="472" width="24" height="8" fill="#820096"/><rect x="552" y="472" width="24" height="8" fill="#8c0096"/><rect x="576" y="472" width="16" height="8" fill="#960096"/><rect x="592" y="472" width="24" height="8" fill="#96008c"/><rect x="616" y="472" width="24" height="8" fill="#960082"/><rect x="0" y="480" width="232" height="8" fill="#000096"/><rect x="232" y="480" width="24" height="8" fill="#0a0096"/><rect x="256" y="480" width="32" height="8" fill="#140096"/><rect x="288" y="480" width="24" height="8" fill="#1e0096"/><rect x="312" y="480" width="24" height="8" fill="#280096"/><rect x="336" y="480" width="24" height="8" fill="#320096"/><rect x="360" y="480" width="32" height="8" fill="#3c0096"/><rect x="392" y="480" width="24" height="8" fill="#460096"/><rect x="416" y="480" width="24" height="8" fill="#500096"/><rect x="440" y="480" width="24" height="8" fill="#5a0096"/><rect x="464" y="480" width="24" height="8" fill="#640096"/><rect x="488" y="480" width="24" height="8" fill="#6e0096"/><rect x="512" y="480" width="24" height="8" fill="#780096"/><rect x="536" y="480" width="24" height="8" fill="#820096"/><rect x="560" y="480" width="24" height="8" fill="#8c0096"/><rect x="584" y="480" width="16" height="8" fill="#960096"/><rect x="600" y="480" width="24" height="8" fill="#96008c"/><rect x="624" y="480" width="16" height="8" fill="#960082"/><rect x="0" y="488" width="232" height="8" fill="#000096"/><rect x="232" y="488" width="32" height="8" fill="#0a0096"/><rect x="264" y="488" width="24" height="8" fill="#140096"/><rect x="288" y="488" width="24" height="8" fill="#1e0096"/><rect x="312" y="488" width="32" height="8" fill="#280096"/><rect x="344" y="488" width="24" height="8" fill="#320096"/><rect x="368" y="488" width="24" height="8" fill="#3c0096"/><rect x="392" y="488" width="24" height="8" fill="#460096"/><rect x="416" y="488" width="24" height="8" fill="#500096"/><rect x="440" y="488" width="32" height="8" fill="#5a0096"/><rect x="472" y="488" width="24" height="8" fill="#640096"/><rect x="496" y="488" width="24" height="8" fill="#6e0096"/><rect x="520" y="488" width="24" height="8" fill="#780096"/><rect x="544" y="488" width="24" height="8" fill="#820096"/><rect x="568" y="488" width="24" height="8" fill="#8c0096"/><rect x="592" y="488" width="16" height="8" fill="#960096"/><rect x="608" y="488" width="24" height="8" fill="#96008c"/><rect x="632" y="488" width="8" height="8" fill="#960082"/></g></svg></noscript>
<canvas id="cie" class="r" style="left:1018.5px;top:114px" width="640" height="492"></canvas>
<div class="r" style="left:1017.6px;top:113px;width:641.6px;height:493.6px;border:1.3px solid #8f8f8f"></div>
<div class="r" style="left:1013.50px;top:605.40px;width:5.00px;height:1.20px;background:#8f8f8f"></div>
<div class="t" style="left:1013.00px;top:599.73px;font-size:14.5px;line-height:14.5px;color:#d2d2d2;font-weight:normal;transform:translateX(-100%) scaleX(1.0);transform-origin:100% 0;">0</div>
<div class="r" style="left:1013.50px;top:564.40px;width:5.00px;height:1.20px;background:#8f8f8f"></div>
<div class="t" style="left:1013.00px;top:558.73px;font-size:14.5px;line-height:14.5px;color:#d2d2d2;font-weight:normal;transform:translateX(-100%) scaleX(1.0);transform-origin:100% 0;">0,05</div>
<div class="r" style="left:1013.50px;top:523.40px;width:5.00px;height:1.20px;background:#8f8f8f"></div>
<div class="t" style="left:1013.00px;top:517.73px;font-size:14.5px;line-height:14.5px;color:#d2d2d2;font-weight:normal;transform:translateX(-100%) scaleX(1.0);transform-origin:100% 0;">0,1</div>
<div class="r" style="left:1013.50px;top:482.40px;width:5.00px;height:1.20px;background:#8f8f8f"></div>
<div class="t" style="left:1013.00px;top:476.73px;font-size:14.5px;line-height:14.5px;color:#d2d2d2;font-weight:normal;transform:translateX(-100%) scaleX(1.0);transform-origin:100% 0;">0,15</div>
<div class="r" style="left:1013.50px;top:441.40px;width:5.00px;height:1.20px;background:#8f8f8f"></div>
<div class="t" style="left:1013.00px;top:435.73px;font-size:14.5px;line-height:14.5px;color:#d2d2d2;font-weight:normal;transform:translateX(-100%) scaleX(1.0);transform-origin:100% 0;">0,2</div>
<div class="r" style="left:1013.50px;top:400.40px;width:5.00px;height:1.20px;background:#8f8f8f"></div>
<div class="t" style="left:1013.00px;top:394.73px;font-size:14.5px;line-height:14.5px;color:#d2d2d2;font-weight:normal;transform:translateX(-100%) scaleX(1.0);transform-origin:100% 0;">0,25</div>
<div class="r" style="left:1013.50px;top:359.40px;width:5.00px;height:1.20px;background:#8f8f8f"></div>
<div class="t" style="left:1013.00px;top:353.73px;font-size:14.5px;line-height:14.5px;color:#d2d2d2;font-weight:normal;transform:translateX(-100%) scaleX(1.0);transform-origin:100% 0;">0,3</div>
<div class="r" style="left:1013.50px;top:318.40px;width:5.00px;height:1.20px;background:#8f8f8f"></div>
<div class="t" style="left:1013.00px;top:312.73px;font-size:14.5px;line-height:14.5px;color:#d2d2d2;font-weight:normal;transform:translateX(-100%) scaleX(1.0);transform-origin:100% 0;">0,35</div>
<div class="r" style="left:1013.50px;top:277.40px;width:5.00px;height:1.20px;background:#8f8f8f"></div>
<div class="t" style="left:1013.00px;top:271.73px;font-size:14.5px;line-height:14.5px;color:#d2d2d2;font-weight:normal;transform:translateX(-100%) scaleX(1.0);transform-origin:100% 0;">0,4</div>
<div class="r" style="left:1013.50px;top:236.40px;width:5.00px;height:1.20px;background:#8f8f8f"></div>
<div class="t" style="left:1013.00px;top:230.73px;font-size:14.5px;line-height:14.5px;color:#d2d2d2;font-weight:normal;transform:translateX(-100%) scaleX(1.0);transform-origin:100% 0;">0,45</div>
<div class="r" style="left:1013.50px;top:195.40px;width:5.00px;height:1.20px;background:#8f8f8f"></div>
<div class="t" style="left:1013.00px;top:189.73px;font-size:14.5px;line-height:14.5px;color:#d2d2d2;font-weight:normal;transform:translateX(-100%) scaleX(1.0);transform-origin:100% 0;">0,5</div>
<div class="r" style="left:1013.50px;top:154.40px;width:5.00px;height:1.20px;background:#8f8f8f"></div>
<div class="t" style="left:1013.00px;top:148.73px;font-size:14.5px;line-height:14.5px;color:#d2d2d2;font-weight:normal;transform:translateX(-100%) scaleX(1.0);transform-origin:100% 0;">0,55</div>
<div class="r" style="left:1017.90px;top:606.00px;width:1.20px;height:6.00px;background:#8f8f8f"></div>
<div class="t" style="left:1018.50px;top:615.03px;font-size:14.5px;line-height:14.5px;color:#d2d2d2;font-weight:normal;transform:translateX(-50%) scaleX(1.0);transform-origin:50% 0;">0</div>
<div class="r" style="left:1071.24px;top:606.00px;width:1.20px;height:6.00px;background:#8f8f8f"></div>
<div class="t" style="left:1071.84px;top:615.03px;font-size:14.5px;line-height:14.5px;color:#d2d2d2;font-weight:normal;transform:translateX(-50%) scaleX(1.0);transform-origin:50% 0;">0,05</div>
<div class="r" style="left:1124.57px;top:606.00px;width:1.20px;height:6.00px;background:#8f8f8f"></div>
<div class="t" style="left:1125.17px;top:615.03px;font-size:14.5px;line-height:14.5px;color:#d2d2d2;font-weight:normal;transform:translateX(-50%) scaleX(1.0);transform-origin:50% 0;">0,1</div>
<div class="r" style="left:1177.91px;top:606.00px;width:1.20px;height:6.00px;background:#8f8f8f"></div>
<div class="t" style="left:1178.51px;top:615.03px;font-size:14.5px;line-height:14.5px;color:#d2d2d2;font-weight:normal;transform:translateX(-50%) scaleX(1.0);transform-origin:50% 0;">0,15</div>
<div class="r" style="left:1231.24px;top:606.00px;width:1.20px;height:6.00px;background:#8f8f8f"></div>
<div class="t" style="left:1231.84px;top:615.03px;font-size:14.5px;line-height:14.5px;color:#d2d2d2;font-weight:normal;transform:translateX(-50%) scaleX(1.0);transform-origin:50% 0;">0,2</div>
<div class="r" style="left:1284.58px;top:606.00px;width:1.20px;height:6.00px;background:#8f8f8f"></div>
<div class="t" style="left:1285.17px;top:615.03px;font-size:14.5px;line-height:14.5px;color:#d2d2d2;font-weight:normal;transform:translateX(-50%) scaleX(1.0);transform-origin:50% 0;">0,25</div>
<div class="r" style="left:1337.91px;top:606.00px;width:1.20px;height:6.00px;background:#8f8f8f"></div>
<div class="t" style="left:1338.51px;top:615.03px;font-size:14.5px;line-height:14.5px;color:#d2d2d2;font-weight:normal;transform:translateX(-50%) scaleX(1.0);transform-origin:50% 0;">0,3</div>
<div class="r" style="left:1391.25px;top:606.00px;width:1.20px;height:6.00px;background:#8f8f8f"></div>
<div class="t" style="left:1391.85px;top:615.03px;font-size:14.5px;line-height:14.5px;color:#d2d2d2;font-weight:normal;transform:translateX(-50%) scaleX(1.0);transform-origin:50% 0;">0,35</div>
<div class="r" style="left:1444.58px;top:606.00px;width:1.20px;height:6.00px;background:#8f8f8f"></div>
<div class="t" style="left:1445.18px;top:615.03px;font-size:14.5px;line-height:14.5px;color:#d2d2d2;font-weight:normal;transform:translateX(-50%) scaleX(1.0);transform-origin:50% 0;">0,4</div>
<div class="r" style="left:1497.92px;top:606.00px;width:1.20px;height:6.00px;background:#8f8f8f"></div>
<div class="t" style="left:1498.52px;top:615.03px;font-size:14.5px;line-height:14.5px;color:#d2d2d2;font-weight:normal;transform:translateX(-50%) scaleX(1.0);transform-origin:50% 0;">0,45</div>
<div class="r" style="left:1551.25px;top:606.00px;width:1.20px;height:6.00px;background:#8f8f8f"></div>
<div class="t" style="left:1551.85px;top:615.03px;font-size:14.5px;line-height:14.5px;color:#d2d2d2;font-weight:normal;transform:translateX(-50%) scaleX(1.0);transform-origin:50% 0;">0,5</div>
<div class="r" style="left:1604.59px;top:606.00px;width:1.20px;height:6.00px;background:#8f8f8f"></div>
<div class="t" style="left:1605.18px;top:615.03px;font-size:14.5px;line-height:14.5px;color:#d2d2d2;font-weight:normal;transform:translateX(-50%) scaleX(1.0);transform-origin:50% 0;">0,55</div>
<div class="r" style="left:1403.00px;top:573.00px;width:252.00px;height:27.00px;background:#2f2f2f"></div>
<div class="t" style="left:1403.50px;top:577.87px;font-size:20px;line-height:20px;color:#f4f4f4;font-weight:normal;">Gamut Coverage:&nbsp; 103%</div>
<div class="t" style="left:15.60px;top:682.47px;font-size:28.5px;line-height:28.5px;color:#f2f2f2;font-weight:normal;transform:scaleX(1.045);transform-origin:0 0;">Current Reading</div>
<div class="t" style="left:15.40px;top:755.09px;font-size:24.7px;line-height:24.7px;color:#f2f2f2;font-weight:normal;">x: 0,3088</div>
<div class="t" style="left:172.00px;top:755.09px;font-size:24.7px;line-height:24.7px;color:#f2f2f2;font-weight:normal;">y: 0,3245</div>
<div class="t" style="left:15.40px;top:797.09px;font-size:24.7px;line-height:24.7px;color:#f2f2f2;font-weight:normal;">fL: 170,66</div>
<div class="t" style="left:15.40px;top:837.09px;font-size:24.7px;line-height:24.7px;color:#f2f2f2;font-weight:normal;transform:scaleX(1.05);transform-origin:0 0;">cd/m²: 584,73</div>
<div class="t" style="left:467.00px;top:663.23px;font-size:14.5px;line-height:14.5px;color:#d2d2d2;font-weight:normal;transform:translateX(-50%) scaleX(0.96);transform-origin:50% 0;">RGB Balance</div>
<div class="r" style="left:357.50px;top:679.60px;width:249.50px;height:180.10px;background:#242424"></div>
<div class="r" style="left:357.50px;top:697.50px;width:249.50px;height:1.40px;background:#8f8f8f"></div>
<div class="r" style="left:352.50px;top:697.50px;width:5.00px;height:1.40px;background:#8f8f8f"></div>
<div class="t" style="left:351.50px;top:691.13px;font-size:14.5px;line-height:14.5px;color:#d2d2d2;font-weight:normal;transform:translateX(-100%) scaleX(1.0);transform-origin:100% 0;">104</div>
<div class="r" style="left:357.50px;top:734.30px;width:249.50px;height:1.40px;background:#8f8f8f"></div>
<div class="r" style="left:352.50px;top:734.30px;width:5.00px;height:1.40px;background:#8f8f8f"></div>
<div class="t" style="left:351.50px;top:727.93px;font-size:14.5px;line-height:14.5px;color:#d2d2d2;font-weight:normal;transform:translateX(-100%) scaleX(1.0);transform-origin:100% 0;">102</div>
<div class="r" style="left:357.50px;top:770.50px;width:249.50px;height:1.40px;background:#8f8f8f"></div>
<div class="r" style="left:352.50px;top:770.50px;width:5.00px;height:1.40px;background:#8f8f8f"></div>
<div class="t" style="left:351.50px;top:764.13px;font-size:14.5px;line-height:14.5px;color:#d2d2d2;font-weight:normal;transform:translateX(-100%) scaleX(1.0);transform-origin:100% 0;">100</div>
<div class="r" style="left:357.50px;top:806.60px;width:249.50px;height:1.40px;background:#8f8f8f"></div>
<div class="r" style="left:352.50px;top:806.60px;width:5.00px;height:1.40px;background:#8f8f8f"></div>
<div class="t" style="left:351.50px;top:800.23px;font-size:14.5px;line-height:14.5px;color:#d2d2d2;font-weight:normal;transform:translateX(-100%) scaleX(1.0);transform-origin:100% 0;">98</div>
<div class="r" style="left:357.50px;top:842.50px;width:249.50px;height:1.40px;background:#8f8f8f"></div>
<div class="r" style="left:352.50px;top:842.50px;width:5.00px;height:1.40px;background:#8f8f8f"></div>
<div class="t" style="left:351.50px;top:836.13px;font-size:14.5px;line-height:14.5px;color:#d2d2d2;font-weight:normal;transform:translateX(-100%) scaleX(1.0);transform-origin:100% 0;">96</div>
<div class="r" style="left:356.70px;top:678.80px;width:1.60px;height:187.90px;background:#8f8f8f"></div>
<div class="r" style="left:606.20px;top:678.80px;width:1.60px;height:187.90px;background:#8f8f8f"></div>
<div class="r" style="left:357.50px;top:678.80px;width:249.50px;height:1.60px;background:#8f8f8f"></div>
<div class="r" style="left:357.50px;top:858.90px;width:249.50px;height:1.60px;background:#8f8f8f"></div>
<div class="t" style="left:482.00px;top:864.23px;font-size:14.5px;line-height:14.5px;color:#d2d2d2;font-weight:normal;transform:translateX(-50%) scaleX(1.0);transform-origin:50% 0;">100W</div>
<div class="r" style="left:381.0px;top:780.7px;width:67.8px;height:79.0px;border:1.6px solid #000;border-bottom:none;background:linear-gradient(#ff5a5a,#ff3c3c)"></div>
<div class="r" style="left:447.3px;top:769.7px;width:67.5px;height:90.0px;border:1.6px solid #000;border-bottom:none;background:linear-gradient(#58aa58,#3e9c3e)"></div>
<div class="r" style="left:513.4px;top:740.2px;width:68.4px;height:119.5px;border:1.6px solid #000;border-bottom:none;background:linear-gradient(#5a5aff,#3636ff)"></div>
<div class="t" style="left:807.50px;top:653.73px;font-size:14.5px;line-height:14.5px;color:#d2d2d2;font-weight:normal;transform:translateX(-50%) scaleX(0.96);transform-origin:50% 0;">CIE 1931 xy</div>
<div class="r" style="left:636.60px;top:670.80px;width:342.80px;height:199.00px;background:#9c9c9c"></div>
<noscript><svg class="r" style="left:637.6px;top:671.8px" width="341" height="197"><g shape-rendering="crispEdges"><rect x="0" y="0" width="10" height="10" fill="#84fccc"/><rect x="10" y="0" width="20" height="10" fill="#8afccc"/><rect x="30" y="0" width="10" height="10" fill="#90fccc"/><rect x="40" y="0" width="20" height="10" fill="#96fcc6"/><rect x="60" y="0" width="10" height="10" fill="#9cfcc6"/><rect x="70" y="0" width="10" height="10" fill="#a2fcc6"/><rect x="80" y="0" width="20" height="10" fill="#a8fcc6"/><rect x="100" y="0" width="10" height="10" fill="#aefcc6"/><rect x="110" y="0" width="20" height="10" fill="#b4fcc6"/><rect x="130" y="0" width="10" height="10" fill="#bafcc6"/><rect x="140" y="0" width="10" height="10" fill="#c0fcc6"/><rect x="150" y="0" width="20" height="10" fill="#c6fcc6"/><rect x="170" y="0" width="10" height="10" fill="#ccfcc6"/><rect x="180" y="0" width="10" height="10" fill="#d2fcc6"/><rect x="190" y="0" width="20" height="10" fill="#d8fcc6"/><rect x="210" y="0" width="10" height="10" fill="#defcc6"/><rect x="220" y="0" width="10" height="10" fill="#e4fcc6"/><rect x="230" y="0" width="20" height="10" fill="#eafcc6"/><rect x="250" y="0" width="10" height="10" fill="#f0fcc6"/><rect x="260" y="0" width="10" height="10" fill="#f6fcc6"/><rect x="270" y="0" width="10" height="10" fill="#fcfcc6"/><rect x="280" y="0" width="20" height="10" fill="#fcf6c0"/><rect x="300" y="0" width="10" height="10" fill="#fcf0ba"/><rect x="310" y="0" width="10" height="10" fill="#fceab4"/><rect x="320" y="0" width="10" height="10" fill="#fce4b4"/><rect x="330" y="0" width="10" height="10" fill="#fce4ae"/><rect x="340" y="0" width="10" height="10" fill="#fcdeae"/><rect x="0" y="10" width="20" height="10" fill="#8afccc"/><rect x="20" y="10" width="10" height="10" fill="#90fccc"/><rect x="30" y="10" width="20" height="10" fill="#96fccc"/><rect x="50" y="10" width="10" height="10" fill="#9cfccc"/><rect x="60" y="10" width="10" height="10" fill="#a2fccc"/><rect x="70" y="10" width="20" height="10" fill="#a8fccc"/><rect x="90" y="10" width="10" height="10" fill="#aefccc"/><rect x="100" y="10" width="20" height="10" fill="#b4fccc"/><rect x="120" y="10" width="10" height="10" fill="#bafccc"/><rect x="130" y="10" width="10" height="10" fill="#c0fccc"/><rect x="140" y="10" width="20" height="10" fill="#c6fccc"/><rect x="160" y="10" width="10" height="10" fill="#ccfccc"/><rect x="170" y="10" width="10" height="10" fill="#d2fccc"/><rect x="180" y="10" width="20" height="10" fill="#d8fccc"/><rect x="200" y="10" width="10" height="10" fill="#defccc"/><rect x="210" y="10" width="10" height="10" fill="#e4fccc"/><rect x="220" y="10" width="10" height="10" fill="#eafccc"/><rect x="230" y="10" width="20" height="10" fill="#f0fccc"/><rect x="250" y="10" width="10" height="10" fill="#f6fccc"/><rect x="260" y="10" width="10" height="10" fill="#fcfccc"/><rect x="270" y="10" width="10" height="10" fill="#fcf6c6"/><rect x="280" y="10" width="20" height="10" fill="#fcf0c0"/><rect x="300" y="10" width="10" height="10" fill="#fceaba"/><rect x="310" y="10" width="20" height="10" fill="#fce4b4"/><rect x="330" y="10" width="10" height="10" fill="#fcdeae"/><rect x="340" y="10" width="10" height="10" fill="#fcd8ae"/><rect x="0" y="20" width="10" height="10" fill="#8afcd2"/><rect x="10" y="20" width="10" height="10" fill="#90fcd2"/><rect x="20" y="20" width="20" height="10" fill="#96fcd2"/><rect x="40" y="20" width="10" height="10" fill="#9cfcd2"/><rect x="50" y="20" width="10" height="10" fill="#a2fcd2"/><rect x="60" y="20" width="20" height="10" fill="#a8fcd2"/><rect x="80" y="20" width="10" height="10" fill="#aefcd2"/><rect x="90" y="20" width="20" height="10" fill="#b4fcd2"/><rect x="110" y="20" width="10" height="10" fill="#bafcd2"/><rect x="120" y="20" width="10" height="10" fill="#c0fcd2"/><rect x="130" y="20" width="20" height="10" fill="#c6fcd2"/><rect x="150" y="20" width="10" height="10" fill="#ccfcd2"/><rect x="160" y="20" width="10" height="10" fill="#d2fcd2"/><rect x="170" y="20" width="20" height="10" fill="#d8fcd2"/><rect x="190" y="20" width="10" height="10" fill="#defcd2"/><rect x="200" y="20" width="10" height="10" fill="#e4fcd2"/><rect x="210" y="20" width="10" height="10" fill="#eafcd2"/><rect x="220" y="20" width="20" height="10" fill="#f0fcd2"/><rect x="240" y="20" width="10" height="10" fill="#f6fcd2"/><rect x="250" y="20" width="10" height="10" fill="#fcfcd2"/><rect x="260" y="20" width="10" height="10" fill="#fcf6cc"/><rect x="270" y="20" width="10" height="10" fill="#fcf0c6"/><rect x="280" y="20" width="10" height="10" fill="#fcf0c0"/><rect x="290" y="20" width="10" height="10" fill="#fceac0"/><rect x="300" y="20" width="10" height="10" fill="#fce4ba"/><rect x="310" y="20" width="10" height="10" fill="#fcdeba"/><rect x="320" y="20" width="10" height="10" fill="#fcdeb4"/><rect x="330" y="20" width="10" height="10" fill="#fcd8ae"/><rect x="340" y="20" width="10" height="10" fill="#fcd2ae"/><rect x="0" y="30" width="10" height="10" fill="#90fcd8"/><rect x="10" y="30" width="20" height="10" fill="#96fcd8"/><rect x="30" y="30" width="10" height="10" fill="#9cfcd8"/><rect x="40" y="30" width="20" height="10" fill="#a2fcd8"/><rect x="60" y="30" width="10" height="10" fill="#a8fcd8"/><rect x="70" y="30" width="10" height="10" fill="#aefcd8"/><rect x="80" y="30" width="20" height="10" fill="#b4fcd8"/><rect x="100" y="30" width="10" height="10" fill="#bafcd8"/><rect x="110" y="30" width="10" height="10" fill="#c0fcd8"/><rect x="120" y="30" width="20" height="10" fill="#c6fcd8"/><rect x="140" y="30" width="10" height="10" fill="#ccfcd8"/><rect x="150" y="30" width="10" height="10" fill="#d2fcd8"/><rect x="160" y="30" width="20" height="10" fill="#d8fcd8"/><rect x="180" y="30" width="10" height="10" fill="#defcd8"/><rect x="190" y="30" width="10" height="10" fill="#e4fcd8"/><rect x="200" y="30" width="10" height="10" fill="#eafcd8"/><rect x="210" y="30" width="10" height="10" fill="#f0fcd8"/><rect x="220" y="30" width="20" height="10" fill="#f6fcd8"/><rect x="240" y="30" width="10" height="10" fill="#fcfcd2"/><rect x="250" y="30" width="10" height="10" fill="#fcf6d2"/><rect x="260" y="30" width="10" height="10" fill="#fcf0cc"/><rect x="270" y="30" width="20" height="10" fill="#fceac6"/><rect x="290" y="30" width="10" height="10" fill="#fce4c0"/><rect x="300" y="30" width="20" height="10" fill="#fcdeba"/><rect x="320" y="30" width="10" height="10" fill="#fcd8b4"/><rect x="330" y="30" width="10" height="10" fill="#fcd2b4"/><rect x="340" y="30" width="10" height="10" fill="#fcd2ae"/><rect x="0" y="40" width="20" height="10" fill="#96fcde"/><rect x="20" y="40" width="10" height="10" fill="#9cfcde"/><rect x="30" y="40" width="20" height="10" fill="#a2fcde"/><rect x="50" y="40" width="10" height="10" fill="#a8fcde"/><rect x="60" y="40" width="10" height="10" fill="#aefcde"/><rect x="70" y="40" width="20" height="10" fill="#b4fcde"/><rect x="90" y="40" width="10" height="10" fill="#bafcde"/><rect x="100" y="40" width="10" height="10" fill="#c0fcde"/><rect x="110" y="40" width="20" height="10" fill="#c6fcde"/><rect x="130" y="40" width="10" height="10" fill="#ccfcde"/><rect x="140" y="40" width="10" height="10" fill="#d2fcde"/><rect x="150" y="40" width="10" height="10" fill="#d8fcde"/><rect x="160" y="40" width="20" height="10" fill="#defcde"/><rect x="180" y="40" width="10" height="10" fill="#e4fcde"/><rect x="190" y="40" width="10" height="10" fill="#eafcde"/><rect x="200" y="40" width="10" height="10" fill="#f0fcde"/><rect x="210" y="40" width="10" height="10" fill="#f6fcde"/><rect x="220" y="40" width="10" height="10" fill="#f6fcd8"/><rect x="230" y="40" width="10" height="10" fill="#fcfcd8"/><rect x="240" y="40" width="10" height="10" fill="#fcf6d2"/><rect x="250" y="40" width="10" height="10" fill="#fcf0d2"/><rect x="260" y="40" width="10" height="10" fill="#fceacc"/><rect x="270" y="40" width="10" height="10" fill="#fceac6"/><rect x="280" y="40" width="10" height="10" fill="#fce4c6"/><rect x="290" y="40" width="10" height="10" fill="#fcdec0"/><rect x="300" y="40" width="10" height="10" fill="#fcd8c0"/><rect x="310" y="40" width="10" height="10" fill="#fcd8ba"/><rect x="320" y="40" width="20" height="10" fill="#fcd2b4"/><rect x="340" y="40" width="10" height="10" fill="#fcccae"/><rect x="0" y="50" width="10" height="10" fill="#96fce4"/><rect x="10" y="50" width="10" height="10" fill="#9cfce4"/><rect x="20" y="50" width="20" height="10" fill="#a2fce4"/><rect x="40" y="50" width="10" height="10" fill="#a8fce4"/><rect x="50" y="50" width="10" height="10" fill="#aefce4"/><rect x="60" y="50" width="20" height="10" fill="#b4fce4"/><rect x="80" y="50" width="10" height="10" fill="#bafce4"/><rect x="90" y="50" width="10" height="10" fill="#c0fce4"/><rect x="100" y="50" width="20" height="10" fill="#c6fce4"/><rect x="120" y="50" width="10" height="10" fill="#ccfce4"/><rect x="130" y="50" width="10" height="10" fill="#d2fce4"/><rect x="140" y="50" width="10" height="10" fill="#d8fce4"/><rect x="150" y="50" width="20" height="10" fill="#defce4"/><rect x="170" y="50" width="10" height="10" fill="#e4fce4"/><rect x="180" y="50" width="10" height="10" fill="#eafce4"/><rect x="190" y="50" width="10" height="10" fill="#f0fce4"/><rect x="200" y="50" width="10" height="10" fill="#f6fcde"/><rect x="210" y="50" width="20" height="10" fill="#fcfcde"/><rect x="230" y="50" width="10" height="10" fill="#fcf6d8"/><rect x="240" y="50" width="10" height="10" fill="#fcf0d8"/><rect x="250" y="50" width="10" height="10" fill="#fcead2"/><rect x="260" y="50" width="20" height="10" fill="#fce4cc"/><rect x="280" y="50" width="10" height="10" fill="#fcdec6"/><rect x="290" y="50" width="20" height="10" fill="#fcd8c0"/><rect x="310" y="50" width="10" height="10" fill="#fcd2ba"/><rect x="320" y="50" width="20" height="10" fill="#fcccb4"/><rect x="340" y="50" width="10" height="10" fill="#fcc6ae"/><rect x="0" y="60" width="10" height="10" fill="#9cfcea"/><rect x="10" y="60" width="20" height="10" fill="#a2fcea"/><rect x="30" y="60" width="10" height="10" fill="#a8fcea"/><rect x="40" y="60" width="10" height="10" fill="#aefcea"/><rect x="50" y="60" width="20" height="10" fill="#b4fcea"/><rect x="70" y="60" width="10" height="10" fill="#bafcea"/><rect x="80" y="60" width="10" height="10" fill="#c0fcea"/><rect x="90" y="60" width="20" height="10" fill="#c6fcea"/><rect x="110" y="60" width="10" height="10" fill="#ccfcea"/><rect x="120" y="60" width="10" height="10" fill="#d2fcea"/><rect x="130" y="60" width="10" height="10" fill="#d8fcea"/><rect x="140" y="60" width="20" height="10" fill="#defcea"/><rect x="160" y="60" width="10" height="10" fill="#e4fcea"/><rect x="170" y="60" width="10" height="10" fill="#eafcea"/><rect x="180" y="60" width="10" height="10" fill="#f0fcea"/><rect x="190" y="60" width="10" height="10" fill="#f6fce4"/><rect x="200" y="60" width="10" height="10" fill="#fcfce4"/><rect x="210" y="60" width="10" height="10" fill="#fcf6e4"/><rect x="220" y="60" width="10" height="10" fill="#fcf6de"/><rect x="230" y="60" width="10" height="10" fill="#fcf0d8"/><rect x="240" y="60" width="10" height="10" fill="#fcead8"/><rect x="250" y="60" width="10" height="10" fill="#fce4d2"/><rect x="260" y="60" width="10" height="10" fill="#fce4cc"/><rect x="270" y="60" width="10" height="10" fill="#fcdecc"/><rect x="280" y="60" width="10" height="10" fill="#fcd8c6"/><rect x="290" y="60" width="10" height="10" fill="#fcd8c0"/><rect x="300" y="60" width="10" height="10" fill="#fcd2c0"/><rect x="310" y="60" width="20" height="10" fill="#fcccba"/><rect x="330" y="60" width="10" height="10" fill="#fcc6b4"/><rect x="340" y="60" width="10" height="10" fill="#fcc0b4"/><rect x="0" y="70" width="20" height="10" fill="#a2fcf0"/><rect x="20" y="70" width="10" height="10" fill="#a8fcf0"/><rect x="30" y="70" width="10" height="10" fill="#aefcf0"/><rect x="40" y="70" width="20" height="10" fill="#b4fcf0"/><rect x="60" y="70" width="10" height="10" fill="#bafcf0"/><rect x="70" y="70" width="10" height="10" fill="#c0fcf0"/><rect x="80" y="70" width="10" height="10" fill="#c6fcf0"/><rect x="90" y="70" width="20" height="10" fill="#ccfcf0"/><rect x="110" y="70" width="10" height="10" fill="#d2fcf0"/><rect x="120" y="70" width="10" height="10" fill="#d8fcf0"/><rect x="130" y="70" width="10" height="10" fill="#defcf0"/><rect x="140" y="70" width="20" height="10" fill="#e4fcf0"/><rect x="160" y="70" width="10" height="10" fill="#eafcf0"/><rect x="170" y="70" width="10" height="10" fill="#f0fcf0"/><rect x="180" y="70" width="10" height="10" fill="#f6fcf0"/><rect x="190" y="70" width="10" height="10" fill="#fcfcf0"/><rect x="200" y="70" width="10" height="10" fill="#fcf6ea"/><rect x="210" y="70" width="10" height="10" fill="#fcf6e4"/><rect x="220" y="70" width="10" height="10" fill="#fcf0de"/><rect x="230" y="70" width="10" height="10" fill="#fceade"/><rect x="240" y="70" width="10" height="10" fill="#fce4d8"/><rect x="250" y="70" width="10" height="10" fill="#fcded2"/><rect x="260" y="70" width="10" height="10" fill="#fcdecc"/><rect x="270" y="70" width="10" height="10" fill="#fcd8cc"/><rect x="280" y="70" width="20" height="10" fill="#fcd2c6"/><rect x="300" y="70" width="10" height="10" fill="#fcccc0"/><rect x="310" y="70" width="20" height="10" fill="#fcc6ba"/><rect x="330" y="70" width="20" height="10" fill="#fcc0b4"/><rect x="0" y="80" width="10" height="10" fill="#a2fcf6"/><rect x="10" y="80" width="10" height="10" fill="#a8fcf6"/><rect x="20" y="80" width="10" height="10" fill="#aefcf6"/><rect x="30" y="80" width="20" height="10" fill="#b4fcf6"/><rect x="50" y="80" width="10" height="10" fill="#bafcf6"/><rect x="60" y="80" width="10" height="10" fill="#c0fcf6"/><rect x="70" y="80" width="10" height="10" fill="#c6fcf6"/><rect x="80" y="80" width="20" height="10" fill="#ccfcf6"/><rect x="100" y="80" width="10" height="10" fill="#d2fcf6"/><rect x="110" y="80" width="10" height="10" fill="#d8fcf6"/><rect x="120" y="80" width="10" height="10" fill="#defcf6"/><rect x="130" y="80" width="20" height="10" fill="#e4fcf6"/><rect x="150" y="80" width="10" height="10" fill="#eafcf6"/><rect x="160" y="80" width="10" height="10" fill="#f0fcf6"/><rect x="170" y="80" width="10" height="10" fill="#f6fcf6"/><rect x="180" y="80" width="10" height="10" fill="#fcfcf6"/><rect x="190" y="80" width="10" height="10" fill="#fcf6f0"/><rect x="200" y="80" width="10" height="10" fill="#fcf0ea"/><rect x="210" y="80" width="10" height="10" fill="#fcf0e4"/><rect x="220" y="80" width="10" height="10" fill="#fceade"/><rect x="230" y="80" width="10" height="10" fill="#fce4de"/><rect x="240" y="80" width="10" height="10" fill="#fcded8"/><rect x="250" y="80" width="10" height="10" fill="#fcded2"/><rect x="260" y="80" width="10" height="10" fill="#fcd8d2"/><rect x="270" y="80" width="10" height="10" fill="#fcd2cc"/><rect x="280" y="80" width="10" height="10" fill="#fcd2c6"/><rect x="290" y="80" width="10" height="10" fill="#fcccc6"/><rect x="300" y="80" width="10" height="10" fill="#fcc6c0"/><rect x="310" y="80" width="10" height="10" fill="#fcc6ba"/><rect x="320" y="80" width="10" height="10" fill="#fcc0ba"/><rect x="330" y="80" width="10" height="10" fill="#fcc0b4"/><rect x="340" y="80" width="10" height="10" fill="#fcbab4"/><rect x="0" y="90" width="10" height="10" fill="#a8fcfc"/><rect x="10" y="90" width="10" height="10" fill="#aefcfc"/><rect x="20" y="90" width="20" height="10" fill="#b4fcfc"/><rect x="40" y="90" width="10" height="10" fill="#bafcfc"/><rect x="50" y="90" width="10" height="10" fill="#c0fcfc"/><rect x="60" y="90" width="10" height="10" fill="#c6fcfc"/><rect x="70" y="90" width="20" height="10" fill="#ccfcfc"/><rect x="90" y="90" width="10" height="10" fill="#d2fcfc"/><rect x="100" y="90" width="10" height="10" fill="#d8fcfc"/><rect x="110" y="90" width="10" height="10" fill="#defcfc"/><rect x="120" y="90" width="10" height="10" fill="#e4fcfc"/><rect x="130" y="90" width="20" height="10" fill="#eafcfc"/><rect x="150" y="90" width="10" height="10" fill="#f0fcfc"/><rect x="160" y="90" width="10" height="10" fill="#f6fcfc"/><rect x="170" y="90" width="10" height="10" fill="#fcfcfc"/><rect x="180" y="90" width="10" height="10" fill="#fcf6f6"/><rect x="190" y="90" width="10" height="10" fill="#fcf0f0"/><rect x="200" y="90" width="10" height="10" fill="#fceaea"/><rect x="210" y="90" width="10" height="10" fill="#fceae4"/><rect x="220" y="90" width="10" height="10" fill="#fce4e4"/><rect x="230" y="90" width="10" height="10" fill="#fcdede"/><rect x="240" y="90" width="10" height="10" fill="#fcd8d8"/><rect x="250" y="90" width="10" height="10" fill="#fcd8d2"/><rect x="260" y="90" width="10" height="10" fill="#fcd2d2"/><rect x="270" y="90" width="10" height="10" fill="#fccccc"/><rect x="280" y="90" width="10" height="10" fill="#fcccc6"/><rect x="290" y="90" width="10" height="10" fill="#fcc6c6"/><rect x="300" y="90" width="10" height="10" fill="#fcc6c0"/><rect x="310" y="90" width="10" height="10" fill="#fcc0c0"/><rect x="320" y="90" width="20" height="10" fill="#fcbaba"/><rect x="340" y="90" width="10" height="10" fill="#fcb4b4"/><rect x="0" y="100" width="10" height="10" fill="#a8f6fc"/><rect x="10" y="100" width="10" height="10" fill="#aef6fc"/><rect x="20" y="100" width="10" height="10" fill="#b4f6fc"/><rect x="30" y="100" width="20" height="10" fill="#baf6fc"/><rect x="50" y="100" width="10" height="10" fill="#c0f6fc"/><rect x="60" y="100" width="10" height="10" fill="#c6f6fc"/><rect x="70" y="100" width="10" height="10" fill="#ccf6fc"/><rect x="80" y="100" width="10" height="10" fill="#d2f6fc"/><rect x="90" y="100" width="20" height="10" fill="#d8f6fc"/><rect x="110" y="100" width="10" height="10" fill="#def6fc"/><rect x="120" y="100" width="10" height="10" fill="#e4f6fc"/><rect x="130" y="100" width="10" height="10" fill="#eaf6fc"/><rect x="140" y="100" width="10" height="10" fill="#f0f6fc"/><rect x="150" y="100" width="20" height="10" fill="#f6f6fc"/><rect x="170" y="100" width="10" height="10" fill="#fcf6fc"/><rect x="180" y="100" width="10" height="10" fill="#fcf0f6"/><rect x="190" y="100" width="10" height="10" fill="#fceaf0"/><rect x="200" y="100" width="10" height="10" fill="#fceaea"/><rect x="210" y="100" width="10" height="10" fill="#fce4e4"/><rect x="220" y="100" width="10" height="10" fill="#fcdee4"/><rect x="230" y="100" width="10" height="10" fill="#fcd8de"/><rect x="240" y="100" width="10" height="10" fill="#fcd8d8"/><rect x="250" y="100" width="10" height="10" fill="#fcd2d8"/><rect x="260" y="100" width="10" height="10" fill="#fcccd2"/><rect x="270" y="100" width="10" height="10" fill="#fccccc"/><rect x="280" y="100" width="10" height="10" fill="#fcc6cc"/><rect x="290" y="100" width="10" height="10" fill="#fcc0c6"/><rect x="300" y="100" width="10" height="10" fill="#fcc0c0"/><rect x="310" y="100" width="10" height="10" fill="#fcbac0"/><rect x="320" y="100" width="10" height="10" fill="#fcbaba"/><rect x="330" y="100" width="10" height="10" fill="#fcb4ba"/><rect x="340" y="100" width="10" height="10" fill="#fcb4b4"/><rect x="0" y="110" width="10" height="10" fill="#a8f0fc"/><rect x="10" y="110" width="10" height="10" fill="#aef0fc"/><rect x="20" y="110" width="10" height="10" fill="#b4f0fc"/><rect x="30" y="110" width="10" height="10" fill="#baf0fc"/><rect x="40" y="110" width="20" height="10" fill="#c0f0fc"/><rect x="60" y="110" width="10" height="10" fill="#c6f0fc"/><rect x="70" y="110" width="10" height="10" fill="#ccf0fc"/><rect x="80" y="110" width="10" height="10" fill="#d2f0fc"/><rect x="90" y="110" width="20" height="10" fill="#d8f0fc"/><rect x="110" y="110" width="10" height="10" fill="#def0fc"/><rect x="120" y="110" width="10" height="10" fill="#e4f0fc"/><rect x="130" y="110" width="10" height="10" fill="#eaf0fc"/><rect x="140" y="110" width="10" height="10" fill="#f0f0fc"/><rect x="150" y="110" width="20" height="10" fill="#f6f0fc"/><rect x="170" y="110" width="10" height="10" fill="#fcf0fc"/><rect x="180" y="110" width="10" height="10" fill="#fceaf6"/><rect x="190" y="110" width="10" height="10" fill="#fce4f0"/><rect x="200" y="110" width="10" height="10" fill="#fce4ea"/><rect x="210" y="110" width="10" height="10" fill="#fcdeea"/><rect x="220" y="110" width="10" height="10" fill="#fcd8e4"/><rect x="230" y="110" width="10" height="10" fill="#fcd2de"/><rect x="240" y="110" width="10" height="10" fill="#fcd2d8"/><rect x="250" y="110" width="10" height="10" fill="#fcccd8"/><rect x="260" y="110" width="10" height="10" fill="#fcc6d2"/><rect x="270" y="110" width="10" height="10" fill="#fcc6cc"/><rect x="280" y="110" width="10" height="10" fill="#fcc0cc"/><rect x="290" y="110" width="10" height="10" fill="#fcc0c6"/><rect x="300" y="110" width="10" height="10" fill="#fcbac0"/><rect x="310" y="110" width="10" height="10" fill="#fcb4c0"/><rect x="320" y="110" width="10" height="10" fill="#fcb4ba"/><rect x="330" y="110" width="10" height="10" fill="#fcaeba"/><rect x="340" y="110" width="10" height="10" fill="#fcaeb4"/><rect x="0" y="120" width="20" height="10" fill="#aeeafc"/><rect x="20" y="120" width="10" height="10" fill="#b4eafc"/><rect x="30" y="120" width="10" height="10" fill="#baeafc"/><rect x="40" y="120" width="20" height="10" fill="#c0eafc"/><rect x="60" y="120" width="10" height="10" fill="#c6eafc"/><rect x="70" y="120" width="10" height="10" fill="#cceafc"/><rect x="80" y="120" width="10" height="10" fill="#d2eafc"/><rect x="90" y="120" width="20" height="10" fill="#d8eafc"/><rect x="110" y="120" width="10" height="10" fill="#deeafc"/><rect x="120" y="120" width="10" height="10" fill="#e4eafc"/><rect x="130" y="120" width="10" height="10" fill="#eaeafc"/><rect x="140" y="120" width="20" height="10" fill="#f0eafc"/><rect x="160" y="120" width="10" height="10" fill="#f6eafc"/><rect x="170" y="120" width="10" height="10" fill="#fceafc"/><rect x="180" y="120" width="10" height="10" fill="#fce4f6"/><rect x="190" y="120" width="10" height="10" fill="#fcdef0"/><rect x="200" y="120" width="10" height="10" fill="#fcdeea"/><rect x="210" y="120" width="10" height="10" fill="#fcd8ea"/><rect x="220" y="120" width="10" height="10" fill="#fcd2e4"/><rect x="230" y="120" width="10" height="10" fill="#fcd2de"/><rect x="240" y="120" width="10" height="10" fill="#fcccd8"/><rect x="250" y="120" width="10" height="10" fill="#fcc6d8"/><rect x="260" y="120" width="10" height="10" fill="#fcc6d2"/><rect x="270" y="120" width="10" height="10" fill="#fcc0cc"/><rect x="280" y="120" width="10" height="10" fill="#fcbacc"/><rect x="290" y="120" width="10" height="10" fill="#fcbac6"/><rect x="300" y="120" width="10" height="10" fill="#fcb4c6"/><rect x="310" y="120" width="10" height="10" fill="#fcb4c0"/><rect x="320" y="120" width="20" height="10" fill="#fcaeba"/><rect x="340" y="120" width="10" height="10" fill="#fca8b4"/><rect x="0" y="130" width="20" height="10" fill="#aee4fc"/><rect x="20" y="130" width="10" height="10" fill="#b4e4fc"/><rect x="30" y="130" width="10" height="10" fill="#bae4fc"/><rect x="40" y="130" width="20" height="10" fill="#c0e4fc"/><rect x="60" y="130" width="10" height="10" fill="#c6e4fc"/><rect x="70" y="130" width="10" height="10" fill="#cce4fc"/><rect x="80" y="130" width="20" height="10" fill="#d2e4fc"/><rect x="100" y="130" width="10" height="10" fill="#d8e4fc"/><rect x="110" y="130" width="10" height="10" fill="#dee4fc"/><rect x="120" y="130" width="10" height="10" fill="#e4e4fc"/><rect x="130" y="130" width="10" height="10" fill="#eae4fc"/><rect x="140" y="130" width="20" height="10" fill="#f0e4fc"/><rect x="160" y="130" width="10" height="10" fill="#f6e4fc"/><rect x="170" y="130" width="10" height="10" fill="#fce4fc"/><rect x="180" y="130" width="10" height="10" fill="#fcdef6"/><rect x="190" y="130" width="10" height="10" fill="#fcdef0"/><rect x="200" y="130" width="10" height="10" fill="#fcd8ea"/><rect x="210" y="130" width="10" height="10" fill="#fcd2ea"/><rect x="220" y="130" width="10" height="10" fill="#fccce4"/><rect x="230" y="130" width="10" height="10" fill="#fcccde"/><rect x="240" y="130" width="10" height="10" fill="#fcc6de"/><rect x="250" y="130" width="10" height="10" fill="#fcc0d8"/><rect x="260" y="130" width="10" height="10" fill="#fcc0d2"/><rect x="270" y="130" width="10" height="10" fill="#fcbad2"/><rect x="280" y="130" width="10" height="10" fill="#fcbacc"/><rect x="290" y="130" width="20" height="10" fill="#fcb4c6"/><rect x="310" y="130" width="10" height="10" fill="#fcaec0"/><rect x="320" y="130" width="10" height="10" fill="#fca8c0"/><rect x="330" y="130" width="10" height="10" fill="#fca8ba"/><rect x="340" y="130" width="10" height="10" fill="#fca2ba"/><rect x="0" y="140" width="10" height="10" fill="#aee4fc"/><rect x="10" y="140" width="10" height="10" fill="#aedefc"/><rect x="20" y="140" width="10" height="10" fill="#b4defc"/><rect x="30" y="140" width="10" height="10" fill="#badefc"/><rect x="40" y="140" width="20" height="10" fill="#c0defc"/><rect x="60" y="140" width="10" height="10" fill="#c6defc"/><rect x="70" y="140" width="10" height="10" fill="#ccdefc"/><rect x="80" y="140" width="20" height="10" fill="#d2defc"/><rect x="100" y="140" width="10" height="10" fill="#d8defc"/><rect x="110" y="140" width="10" height="10" fill="#dedefc"/><rect x="120" y="140" width="10" height="10" fill="#e4defc"/><rect x="130" y="140" width="10" height="10" fill="#eadefc"/><rect x="140" y="140" width="20" height="10" fill="#f0defc"/><rect x="160" y="140" width="10" height="10" fill="#f6defc"/><rect x="170" y="140" width="10" height="10" fill="#fcdefc"/><rect x="180" y="140" width="10" height="10" fill="#fcd8f6"/><rect x="190" y="140" width="10" height="10" fill="#fcd8f0"/><rect x="200" y="140" width="10" height="10" fill="#fcd2f0"/><rect x="210" y="140" width="10" height="10" fill="#fcccea"/><rect x="220" y="140" width="10" height="10" fill="#fccce4"/><rect x="230" y="140" width="10" height="10" fill="#fcc6de"/><rect x="240" y="140" width="10" height="10" fill="#fcc0de"/><rect x="250" y="140" width="10" height="10" fill="#fcc0d8"/><rect x="260" y="140" width="10" height="10" fill="#fcbad2"/><rect x="270" y="140" width="10" height="10" fill="#fcb4d2"/><rect x="280" y="140" width="10" height="10" fill="#fcb4cc"/><rect x="290" y="140" width="20" height="10" fill="#fcaec6"/><rect x="310" y="140" width="20" height="10" fill="#fca8c0"/><rect x="330" y="140" width="20" height="10" fill="#fca2ba"/><rect x="0" y="150" width="20" height="10" fill="#aedefc"/><rect x="20" y="150" width="10" height="10" fill="#b4defc"/><rect x="30" y="150" width="10" height="10" fill="#badefc"/><rect x="40" y="150" width="20" height="10" fill="#c0d8fc"/><rect x="60" y="150" width="10" height="10" fill="#c6d8fc"/><rect x="70" y="150" width="10" height="10" fill="#ccd8fc"/><rect x="80" y="150" width="20" height="10" fill="#d2d8fc"/><rect x="100" y="150" width="10" height="10" fill="#d8d8fc"/><rect x="110" y="150" width="10" height="10" fill="#ded8fc"/><rect x="120" y="150" width="10" height="10" fill="#e4d8fc"/><rect x="130" y="150" width="20" height="10" fill="#ead8fc"/><rect x="150" y="150" width="10" height="10" fill="#f0d8fc"/><rect x="160" y="150" width="10" height="10" fill="#f6d8fc"/><rect x="170" y="150" width="10" height="10" fill="#fcd8fc"/><rect x="180" y="150" width="10" height="10" fill="#fcd2f6"/><rect x="190" y="150" width="10" height="10" fill="#fcd2f0"/><rect x="200" y="150" width="10" height="10" fill="#fcccf0"/><rect x="210" y="150" width="10" height="10" fill="#fcc6ea"/><rect x="220" y="150" width="10" height="10" fill="#fcc6e4"/><rect x="230" y="150" width="10" height="10" fill="#fcc0de"/><rect x="240" y="150" width="10" height="10" fill="#fcbade"/><rect x="250" y="150" width="10" height="10" fill="#fcbad8"/><rect x="260" y="150" width="20" height="10" fill="#fcb4d2"/><rect x="280" y="150" width="20" height="10" fill="#fcaecc"/><rect x="300" y="150" width="10" height="10" fill="#fca8c6"/><rect x="310" y="150" width="10" height="10" fill="#fca8c0"/><rect x="320" y="150" width="10" height="10" fill="#fca2c0"/><rect x="330" y="150" width="10" height="10" fill="#fca2ba"/><rect x="340" y="150" width="10" height="10" fill="#fc9cba"/><rect x="0" y="160" width="20" height="10" fill="#aed8fc"/><rect x="20" y="160" width="10" height="10" fill="#b4d8fc"/><rect x="30" y="160" width="10" height="10" fill="#bad8fc"/><rect x="40" y="160" width="20" height="10" fill="#c0d8fc"/><rect x="60" y="160" width="10" height="10" fill="#c6d8fc"/><rect x="70" y="160" width="10" height="10" fill="#ccd2fc"/><rect x="80" y="160" width="20" height="10" fill="#d2d2fc"/><rect x="100" y="160" width="10" height="10" fill="#d8d2fc"/><rect x="110" y="160" width="10" height="10" fill="#ded2fc"/><rect x="120" y="160" width="10" height="10" fill="#e4d2fc"/><rect x="130" y="160" width="20" height="10" fill="#ead2fc"/><rect x="150" y="160" width="10" height="10" fill="#f0d2fc"/><rect x="160" y="160" width="10" height="10" fill="#f6d2fc"/><rect x="170" y="160" width="10" height="10" fill="#fcd2fc"/><rect x="180" y="160" width="10" height="10" fill="#fcd2f6"/><rect x="190" y="160" width="10" height="10" fill="#fcccf6"/><rect x="200" y="160" width="10" height="10" fill="#fcc6f0"/><rect x="210" y="160" width="10" height="10" fill="#fcc6ea"/><rect x="220" y="160" width="10" height="10" fill="#fcc0e4"/><rect x="230" y="160" width="10" height="10" fill="#fcbae4"/><rect x="240" y="160" width="10" height="10" fill="#fcbade"/><rect x="250" y="160" width="20" height="10" fill="#fcb4d8"/><rect x="270" y="160" width="10" height="10" fill="#fcaed2"/><rect x="280" y="160" width="20" height="10" fill="#fca8cc"/><rect x="300" y="160" width="20" height="10" fill="#fca2c6"/><rect x="320" y="160" width="10" height="10" fill="#fc9cc0"/><rect x="330" y="160" width="10" height="10" fill="#fc9cba"/><rect x="340" y="160" width="10" height="10" fill="#fc96ba"/><rect x="0" y="170" width="20" height="10" fill="#aed2fc"/><rect x="20" y="170" width="10" height="10" fill="#b4d2fc"/><rect x="30" y="170" width="10" height="10" fill="#bad2fc"/><rect x="40" y="170" width="20" height="10" fill="#c0d2fc"/><rect x="60" y="170" width="10" height="10" fill="#c6d2fc"/><rect x="70" y="170" width="10" height="10" fill="#ccd2fc"/><rect x="80" y="170" width="20" height="10" fill="#d2d2fc"/><rect x="100" y="170" width="10" height="10" fill="#d8ccfc"/><rect x="110" y="170" width="10" height="10" fill="#deccfc"/><rect x="120" y="170" width="10" height="10" fill="#e4ccfc"/><rect x="130" y="170" width="20" height="10" fill="#eaccfc"/><rect x="150" y="170" width="10" height="10" fill="#f0ccfc"/><rect x="160" y="170" width="10" height="10" fill="#f6ccfc"/><rect x="170" y="170" width="10" height="10" fill="#fcccfc"/><rect x="180" y="170" width="10" height="10" fill="#fcccf6"/><rect x="190" y="170" width="10" height="10" fill="#fcc6f6"/><rect x="200" y="170" width="10" height="10" fill="#fcc0f0"/><rect x="210" y="170" width="10" height="10" fill="#fcc0ea"/><rect x="220" y="170" width="20" height="10" fill="#fcbae4"/><rect x="240" y="170" width="10" height="10" fill="#fcb4de"/><rect x="250" y="170" width="20" height="10" fill="#fcaed8"/><rect x="270" y="170" width="10" height="10" fill="#fca8d2"/><rect x="280" y="170" width="10" height="10" fill="#fca8cc"/><rect x="290" y="170" width="10" height="10" fill="#fca2cc"/><rect x="300" y="170" width="10" height="10" fill="#fca2c6"/><rect x="310" y="170" width="10" height="10" fill="#fc9cc6"/><rect x="320" y="170" width="10" height="10" fill="#fc9cc0"/><rect x="330" y="170" width="10" height="10" fill="#fc96c0"/><rect x="340" y="170" width="10" height="10" fill="#fc96ba"/><rect x="0" y="180" width="10" height="10" fill="#aeccfc"/><rect x="10" y="180" width="20" height="10" fill="#b4ccfc"/><rect x="30" y="180" width="10" height="10" fill="#baccfc"/><rect x="40" y="180" width="20" height="10" fill="#c0ccfc"/><rect x="60" y="180" width="10" height="10" fill="#c6ccfc"/><rect x="70" y="180" width="10" height="10" fill="#ccccfc"/><rect x="80" y="180" width="20" height="10" fill="#d2ccfc"/><rect x="100" y="180" width="10" height="10" fill="#d8ccfc"/><rect x="110" y="180" width="10" height="10" fill="#deccfc"/><rect x="120" y="180" width="10" height="10" fill="#e4ccfc"/><rect x="130" y="180" width="20" height="10" fill="#eac6fc"/><rect x="150" y="180" width="10" height="10" fill="#f0c6fc"/><rect x="160" y="180" width="10" height="10" fill="#f6c6fc"/><rect x="170" y="180" width="10" height="10" fill="#fcc6fc"/><rect x="180" y="180" width="10" height="10" fill="#fcc6f6"/><rect x="190" y="180" width="10" height="10" fill="#fcc0f6"/><rect x="200" y="180" width="10" height="10" fill="#fcc0f0"/><rect x="210" y="180" width="10" height="10" fill="#fcbaea"/><rect x="220" y="180" width="20" height="10" fill="#fcb4e4"/><rect x="240" y="180" width="10" height="10" fill="#fcaede"/><rect x="250" y="180" width="10" height="10" fill="#fcaed8"/><rect x="260" y="180" width="10" height="10" fill="#fca8d8"/><rect x="270" y="180" width="10" height="10" fill="#fca8d2"/><rect x="280" y="180" width="10" height="10" fill="#fca2d2"/><rect x="290" y="180" width="10" height="10" fill="#fca2cc"/><rect x="300" y="180" width="20" height="10" fill="#fc9cc6"/><rect x="320" y="180" width="20" height="10" fill="#fc96c0"/><rect x="340" y="180" width="10" height="10" fill="#fc90ba"/><rect x="0" y="190" width="10" height="10" fill="#aec6fc"/><rect x="10" y="190" width="20" height="10" fill="#b4c6fc"/><rect x="30" y="190" width="10" height="10" fill="#bac6fc"/><rect x="40" y="190" width="20" height="10" fill="#c0c6fc"/><rect x="60" y="190" width="10" height="10" fill="#c6c6fc"/><rect x="70" y="190" width="10" height="10" fill="#ccc6fc"/><rect x="80" y="190" width="20" height="10" fill="#d2c6fc"/><rect x="100" y="190" width="10" height="10" fill="#d8c6fc"/><rect x="110" y="190" width="10" height="10" fill="#dec6fc"/><rect x="120" y="190" width="10" height="10" fill="#e4c6fc"/><rect x="130" y="190" width="20" height="10" fill="#eac6fc"/><rect x="150" y="190" width="10" height="10" fill="#f0c6fc"/><rect x="160" y="190" width="10" height="10" fill="#f6c0fc"/><rect x="170" y="190" width="20" height="10" fill="#fcc0fc"/><rect x="190" y="190" width="10" height="10" fill="#fcbaf6"/><rect x="200" y="190" width="10" height="10" fill="#fcbaf0"/><rect x="210" y="190" width="20" height="10" fill="#fcb4ea"/><rect x="230" y="190" width="10" height="10" fill="#fcaee4"/><rect x="240" y="190" width="20" height="10" fill="#fca8de"/><rect x="260" y="190" width="10" height="10" fill="#fca2d8"/><rect x="270" y="190" width="10" height="10" fill="#fca2d2"/><rect x="280" y="190" width="10" height="10" fill="#fc9cd2"/><rect x="290" y="190" width="10" height="10" fill="#fc9ccc"/><rect x="300" y="190" width="20" height="10" fill="#fc96c6"/><rect x="320" y="190" width="20" height="10" fill="#fc90c0"/><rect x="340" y="190" width="10" height="10" fill="#fc90ba"/></g></svg></noscript>
<canvas id="xy" class="r" style="left:637.6px;top:671.8px" width="341" height="197"></canvas>
<div class="r" style="left:995.30px;top:655.20px;width:634.70px;height:224.80px;background:#000"></div>
<div class="r" style="left:1630.00px;top:655.20px;width:18.00px;height:34.60px;background:#000"></div>
<div class="r" style="left:1646.60px;top:655.20px;width:1.70px;height:224.80px;background:#000"></div>
<div class="r" style="left:996.50px;top:656.40px;width:633.50px;height:16.60px;background:#2d2d2d"></div>
<div class="r" style="left:996.50px;top:673.00px;width:633.50px;height:16.80px;background:#131313"></div>
<div class="r" style="left:996.5px;top:656.4px;width:633.5px;height:203.9px;overflow:hidden">
<div class="t" style="left:131.50px;top:7.91px;font-size:18.3px;line-height:18.3px;color:#f0f0f0;font-weight:normal;transform:translateX(-50%) scaleX(0.88);transform-origin:50% 0;">White</div>
<div class="t" style="left:204.70px;top:7.91px;font-size:18.3px;line-height:18.3px;color:#f0f0f0;font-weight:normal;transform:translateX(-50%) scaleX(0.88);transform-origin:50% 0;">Red</div>
<div class="t" style="left:277.30px;top:7.91px;font-size:18.3px;line-height:18.3px;color:#f0f0f0;font-weight:normal;transform:translateX(-50%) scaleX(0.88);transform-origin:50% 0;">Green</div>
<div class="t" style="left:351.00px;top:7.91px;font-size:18.3px;line-height:18.3px;color:#f0f0f0;font-weight:normal;transform:translateX(-50%) scaleX(0.88);transform-origin:50% 0;">Blue</div>
<div class="t" style="left:423.70px;top:7.91px;font-size:18.3px;line-height:18.3px;color:#f0f0f0;font-weight:normal;transform:translateX(-50%) scaleX(0.88);transform-origin:50% 0;">Cyan</div>
<div class="t" style="left:498.80px;top:7.91px;font-size:18.3px;line-height:18.3px;color:#f0f0f0;font-weight:normal;transform:translateX(-50%) scaleX(0.88);transform-origin:50% 0;">Magenta</div>
<div class="t" style="left:573.00px;top:7.91px;font-size:18.3px;line-height:18.3px;color:#f0f0f0;font-weight:normal;transform:translateX(-50%) scaleX(0.88);transform-origin:50% 0;">Yellow</div>
<div class="t" style="left:653.50px;top:7.91px;font-size:18.3px;line-height:18.3px;color:#f0f0f0;font-weight:normal;transform:translateX(-50%) scaleX(0.88);transform-origin:50% 0;">100W</div>
<div class="r" style="left:0.00px;top:33.40px;width:633.50px;height:31.20px;background:#3f3f3f"></div>
<div class="t" style="left:13.20px;top:39.81px;font-size:19.6px;line-height:19.6px;color:#f4f4f4;font-weight:bold;transform:scaleX(0.82);transform-origin:0 0;">x: CIE31</div>
<div class="t" style="left:97.50px;top:39.81px;font-size:19.6px;line-height:19.6px;color:#f0f0f0;font-weight:normal;transform:scaleX(0.825);transform-origin:0 0;">0,3085</div>
<div class="t" style="left:174.80px;top:39.81px;font-size:19.6px;line-height:19.6px;color:#f0f0f0;font-weight:normal;transform:scaleX(0.825);transform-origin:0 0;">0,6481</div>
<div class="t" style="left:243.50px;top:39.81px;font-size:19.6px;line-height:19.6px;color:#f0f0f0;font-weight:normal;transform:scaleX(0.825);transform-origin:0 0;">0,2984</div>
<div class="t" style="left:320.80px;top:39.81px;font-size:19.6px;line-height:19.6px;color:#f0f0f0;font-weight:normal;transform:scaleX(0.825);transform-origin:0 0;">0,1471</div>
<div class="t" style="left:390.10px;top:39.81px;font-size:19.6px;line-height:19.6px;color:#f0f0f0;font-weight:normal;transform:scaleX(0.825);transform-origin:0 0;">0,2210</div>
<div class="t" style="left:467.50px;top:39.81px;font-size:19.6px;line-height:19.6px;color:#f0f0f0;font-weight:normal;transform:scaleX(0.825);transform-origin:0 0;">0,3151</div>
<div class="t" style="left:538.80px;top:39.81px;font-size:19.6px;line-height:19.6px;color:#f0f0f0;font-weight:normal;transform:scaleX(0.825);transform-origin:0 0;">0,4181</div>
<div class="t" style="left:616.40px;top:39.81px;font-size:19.6px;line-height:19.6px;color:#f0f0f0;font-weight:normal;transform:scaleX(0.825);transform-origin:0 0;">0,3088</div>
<div class="r" style="left:0.00px;top:64.60px;width:633.50px;height:31.20px;background:#7b7b7b"></div>
<div class="t" style="left:13.20px;top:71.01px;font-size:19.6px;line-height:19.6px;color:#f4f4f4;font-weight:bold;transform:scaleX(0.82);transform-origin:0 0;">y: CIE31</div>
<div class="t" style="left:97.50px;top:71.01px;font-size:19.6px;line-height:19.6px;color:#f0f0f0;font-weight:normal;transform:scaleX(0.825);transform-origin:0 0;">0,3257</div>
<div class="t" style="left:174.80px;top:71.01px;font-size:19.6px;line-height:19.6px;color:#f0f0f0;font-weight:normal;transform:scaleX(0.825);transform-origin:0 0;">0,3333</div>
<div class="t" style="left:243.50px;top:71.01px;font-size:19.6px;line-height:19.6px;color:#f0f0f0;font-weight:normal;transform:scaleX(0.825);transform-origin:0 0;">0,6051</div>
<div class="t" style="left:320.80px;top:71.01px;font-size:19.6px;line-height:19.6px;color:#f0f0f0;font-weight:normal;transform:scaleX(0.825);transform-origin:0 0;">0,0577</div>
<div class="t" style="left:390.10px;top:71.01px;font-size:19.6px;line-height:19.6px;color:#f0f0f0;font-weight:normal;transform:scaleX(0.825);transform-origin:0 0;">0,3237</div>
<div class="t" style="left:467.50px;top:71.01px;font-size:19.6px;line-height:19.6px;color:#f0f0f0;font-weight:normal;transform:scaleX(0.825);transform-origin:0 0;">0,1500</div>
<div class="t" style="left:538.80px;top:71.01px;font-size:19.6px;line-height:19.6px;color:#f0f0f0;font-weight:normal;transform:scaleX(0.825);transform-origin:0 0;">0,5076</div>
<div class="t" style="left:616.40px;top:71.01px;font-size:19.6px;line-height:19.6px;color:#f0f0f0;font-weight:normal;transform:scaleX(0.825);transform-origin:0 0;">0,3245</div>
<div class="r" style="left:0.00px;top:95.80px;width:633.50px;height:31.20px;background:#3f3f3f"></div>
<div class="t" style="left:13.20px;top:102.21px;font-size:19.6px;line-height:19.6px;color:#f4f4f4;font-weight:bold;transform:scaleX(0.82);transform-origin:0 0;">Y</div>
<div class="t" style="left:97.50px;top:102.21px;font-size:19.6px;line-height:19.6px;color:#f0f0f0;font-weight:normal;transform:scaleX(0.825);transform-origin:0 0;">305,1789</div>
<div class="t" style="left:174.80px;top:102.21px;font-size:19.6px;line-height:19.6px;color:#f0f0f0;font-weight:normal;transform:scaleX(0.825);transform-origin:0 0;">62,3112</div>
<div class="t" style="left:243.50px;top:102.21px;font-size:19.6px;line-height:19.6px;color:#f0f0f0;font-weight:normal;transform:scaleX(0.825);transform-origin:0 0;">215,7658</div>
<div class="t" style="left:320.80px;top:102.21px;font-size:19.6px;line-height:19.6px;color:#f0f0f0;font-weight:normal;transform:scaleX(0.825);transform-origin:0 0;">21,3136</div>
<div class="t" style="left:390.10px;top:102.21px;font-size:19.6px;line-height:19.6px;color:#f0f0f0;font-weight:normal;transform:scaleX(0.825);transform-origin:0 0;">238,4004</div>
<div class="t" style="left:467.50px;top:102.21px;font-size:19.6px;line-height:19.6px;color:#f0f0f0;font-weight:normal;transform:scaleX(0.825);transform-origin:0 0;">84,8056</div>
<div class="t" style="left:538.80px;top:102.21px;font-size:19.6px;line-height:19.6px;color:#f0f0f0;font-weight:normal;transform:scaleX(0.825);transform-origin:0 0;">282,5333</div>
<div class="t" style="left:616.40px;top:102.21px;font-size:19.6px;line-height:19.6px;color:#f0f0f0;font-weight:normal;transform:scaleX(0.825);transform-origin:0 0;">584,73</div>
<div class="r" style="left:0.00px;top:127.00px;width:633.50px;height:31.20px;background:#7b7b7b"></div>
<div class="t" style="left:13.20px;top:133.41px;font-size:19.6px;line-height:19.6px;color:#f4f4f4;font-weight:bold;transform:scaleX(0.82);transform-origin:0 0;">Target Y</div>
<div class="t" style="left:97.50px;top:133.41px;font-size:19.6px;line-height:19.6px;color:#f0f0f0;font-weight:normal;transform:scaleX(0.825);transform-origin:0 0;">304,6431</div>
<div class="t" style="left:174.80px;top:133.41px;font-size:19.6px;line-height:19.6px;color:#f0f0f0;font-weight:normal;transform:scaleX(0.825);transform-origin:0 0;">64,7842</div>
<div class="t" style="left:243.50px;top:133.41px;font-size:19.6px;line-height:19.6px;color:#f0f0f0;font-weight:normal;transform:scaleX(0.825);transform-origin:0 0;">217,8681</div>
<div class="t" style="left:320.80px;top:133.41px;font-size:19.6px;line-height:19.6px;color:#f0f0f0;font-weight:normal;transform:scaleX(0.825);transform-origin:0 0;">21,9908</div>
<div class="t" style="left:390.10px;top:133.41px;font-size:19.6px;line-height:19.6px;color:#f0f0f0;font-weight:normal;transform:scaleX(0.825);transform-origin:0 0;">239,8589</div>
<div class="t" style="left:467.50px;top:133.41px;font-size:19.6px;line-height:19.6px;color:#f0f0f0;font-weight:normal;transform:scaleX(0.825);transform-origin:0 0;">86,7750</div>
<div class="t" style="left:538.80px;top:133.41px;font-size:19.6px;line-height:19.6px;color:#f0f0f0;font-weight:normal;transform:scaleX(0.825);transform-origin:0 0;">282,6522</div>
<div class="t" style="left:616.40px;top:133.41px;font-size:19.6px;line-height:19.6px;color:#f0f0f0;font-weight:normal;transform:scaleX(0.825);transform-origin:0 0;">584,7</div>
<div class="r" style="left:0.00px;top:158.20px;width:633.50px;height:31.20px;background:#3f3f3f"></div>
<div class="t" style="left:13.20px;top:164.61px;font-size:19.6px;line-height:19.6px;color:#f4f4f4;font-weight:bold;transform:scaleX(0.82);transform-origin:0 0;">ΔE 2000</div>
<div class="t" style="left:97.50px;top:164.61px;font-size:19.6px;line-height:19.6px;color:#f0f0f0;font-weight:normal;transform:scaleX(0.825);transform-origin:0 0;">1,7308</div>
<div class="t" style="left:174.80px;top:164.61px;font-size:19.6px;line-height:19.6px;color:#f0f0f0;font-weight:normal;transform:scaleX(0.825);transform-origin:0 0;">2,1843</div>
<div class="t" style="left:243.50px;top:164.61px;font-size:19.6px;line-height:19.6px;color:#f0f0f0;font-weight:normal;transform:scaleX(0.825);transform-origin:0 0;">0,3430</div>
<div class="t" style="left:320.80px;top:164.61px;font-size:19.6px;line-height:19.6px;color:#f0f0f0;font-weight:normal;transform:scaleX(0.825);transform-origin:0 0;">0,4232</div>
<div class="t" style="left:390.10px;top:164.61px;font-size:19.6px;line-height:19.6px;color:#f0f0f0;font-weight:normal;transform:scaleX(0.825);transform-origin:0 0;">1,1008</div>
<div class="t" style="left:467.50px;top:164.61px;font-size:19.6px;line-height:19.6px;color:#f0f0f0;font-weight:normal;transform:scaleX(0.825);transform-origin:0 0;">0,7561</div>
<div class="t" style="left:538.80px;top:164.61px;font-size:19.6px;line-height:19.6px;color:#f0f0f0;font-weight:normal;transform:scaleX(0.825);transform-origin:0 0;">0,4539</div>
<div class="t" style="left:616.40px;top:164.61px;font-size:19.6px;line-height:19.6px;color:#f0f0f0;font-weight:normal;transform:scaleX(0.825);transform-origin:0 0;">2,3356</div>
<div class="r" style="left:0.00px;top:189.40px;width:633.50px;height:31.20px;background:#7b7b7b"></div>
<div class="t" style="left:13.20px;top:195.81px;font-size:19.6px;line-height:19.6px;color:#f4f4f4;font-weight:bold;transform:scaleX(0.82);transform-origin:0 0;">ΔE ITP</div>
<div class="t" style="left:97.50px;top:195.81px;font-size:19.6px;line-height:19.6px;color:#f0f0f0;font-weight:normal;transform:scaleX(0.825);transform-origin:0 0;">2,4070</div>
<div class="t" style="left:174.80px;top:195.81px;font-size:19.6px;line-height:19.6px;color:#f0f0f0;font-weight:normal;transform:scaleX(0.825);transform-origin:0 0;">0,3863</div>
<div class="t" style="left:243.50px;top:195.81px;font-size:19.6px;line-height:19.6px;color:#f0f0f0;font-weight:normal;transform:scaleX(0.825);transform-origin:0 0;">2,1371</div>
<div class="t" style="left:320.80px;top:195.81px;font-size:19.6px;line-height:19.6px;color:#f0f0f0;font-weight:normal;transform:scaleX(0.825);transform-origin:0 0;">7,5248</div>
<div class="t" style="left:390.10px;top:195.81px;font-size:19.6px;line-height:19.6px;color:#f0f0f0;font-weight:normal;transform:scaleX(0.825);transform-origin:0 0;">2,6737</div>
<div class="t" style="left:467.50px;top:195.81px;font-size:19.6px;line-height:19.6px;color:#f0f0f0;font-weight:normal;transform:scaleX(0.825);transform-origin:0 0;">3,7470</div>
<div class="t" style="left:538.80px;top:195.81px;font-size:19.6px;line-height:19.6px;color:#f0f0f0;font-weight:normal;transform:scaleX(0.825);transform-origin:0 0;">1,3768</div>
<div class="t" style="left:616.40px;top:195.81px;font-size:19.6px;line-height:19.6px;color:#f0f0f0;font-weight:normal;transform:scaleX(0.825);transform-origin:0 0;">2,4</div>
</div>
<div class="r" style="left:1630.00px;top:689.80px;width:16.60px;height:169.70px;background:#6a6a6a"></div>
<div class="r" style="left:1631.8px;top:711px;width:13.4px;height:106px;border-radius:6.7px;background:#474747"></div>
<div class="r" style="left:1631.3px;top:691px;width:13px;height:15px;border-radius:3px;background:#858585;border:0.8px solid #999"></div>
<svg class="r" style="left:1632.5px;top:694px" width="12" height="8"><path d="M1 7 L11 7 L6 1.5 Z" fill="#3a3a3a"/></svg>
<div class="r" style="left:1631.3px;top:843px;width:13px;height:15px;border-radius:3px;background:#858585;border:0.8px solid #999"></div>
<svg class="r" style="left:1632.5px;top:847px" width="12" height="8"><path d="M1 1 L11 1 L6 6.5 Z" fill="#3a3a3a"/></svg>
<div class="r" style="left:996.50px;top:860.30px;width:633.50px;height:18.20px;background:#707070"></div>
<div class="r" style="left:1630.00px;top:859.50px;width:16.60px;height:19.50px;background:#333333"></div>
<div class="r" style="left:1630.00px;top:656.40px;width:17.00px;height:33.40px;background:#2e2e2e"></div>
<div class="r" style="left:1016px;top:862.5px;width:545px;height:14px;border-radius:7px;background:#3e3e3e"></div>
<div class="r" style="left:997.5px;top:862px;width:13px;height:14px;border-radius:3px;background:#858585;border:0.8px solid #999"></div>
<svg class="r" style="left:999px;top:863px" width="10" height="12"><path d="M7.5 1 L7.5 11 L2 6 Z" fill="#3a3a3a"/></svg>
<div class="r" style="left:1614.5px;top:862px;width:13px;height:14px;border-radius:3px;background:#858585;border:0.8px solid #999"></div>
<svg class="r" style="left:1616px;top:863px" width="10" height="12"><path d="M2.5 1 L2.5 11 L8 6 Z" fill="#3a3a3a"/></svg>
<div class="r" style="left:1.5px;top:923.8px;width:155.4px;height:80px;border-radius:5px;background:linear-gradient(#ababab,#8e8e8e 25%,#6a6a6a 60%,#585858)"></div>
<div class="r" style="left:7.1px;top:929.9px;width:143.6px;height:45.3px;border-radius:5px;background:#c0c0c0;box-shadow:inset 1px 1.5px 1px rgba(0,0,0,0.35)"></div>
<div class="t" style="left:78.70px;top:983.07px;font-size:13.5px;line-height:13.5px;color:#2e2e2e;font-weight:bold;transform:translateX(-50%) scaleX(0.95);transform-origin:50% 0;">White</div>
<div class="r" style="left:159.4px;top:923.8px;width:155.4px;height:80px;border-radius:5px;background:linear-gradient(#ababab,#8e8e8e 25%,#6a6a6a 60%,#585858)"></div>
<div class="r" style="left:165.0px;top:929.9px;width:143.6px;height:45.3px;border-radius:5px;background:#c00000;box-shadow:inset 1px 1.5px 1px rgba(0,0,0,0.35)"></div>
<div class="t" style="left:236.60px;top:983.07px;font-size:13.5px;line-height:13.5px;color:#2e2e2e;font-weight:bold;transform:translateX(-50%) scaleX(0.95);transform-origin:50% 0;">Red</div>
<div class="r" style="left:317.3px;top:923.8px;width:155.4px;height:80px;border-radius:5px;background:linear-gradient(#ababab,#8e8e8e 25%,#6a6a6a 60%,#585858)"></div>
<div class="r" style="left:322.9px;top:929.9px;width:143.6px;height:45.3px;border-radius:5px;background:#00bf00;box-shadow:inset 1px 1.5px 1px rgba(0,0,0,0.35)"></div>
<div class="t" style="left:394.50px;top:983.07px;font-size:13.5px;line-height:13.5px;color:#2e2e2e;font-weight:bold;transform:translateX(-50%) scaleX(0.95);transform-origin:50% 0;">Green</div>
<div class="r" style="left:475.2px;top:923.8px;width:155.4px;height:80px;border-radius:5px;background:linear-gradient(#ababab,#8e8e8e 25%,#6a6a6a 60%,#585858)"></div>
<div class="r" style="left:480.8px;top:929.9px;width:143.6px;height:45.3px;border-radius:5px;background:#0000c0;box-shadow:inset 1px 1.5px 1px rgba(0,0,0,0.35)"></div>
<div class="t" style="left:552.40px;top:983.07px;font-size:13.5px;line-height:13.5px;color:#2e2e2e;font-weight:bold;transform:translateX(-50%) scaleX(0.95);transform-origin:50% 0;">Blue</div>
<div class="r" style="left:633.1px;top:923.8px;width:155.4px;height:80px;border-radius:5px;background:linear-gradient(#ababab,#8e8e8e 25%,#6a6a6a 60%,#585858)"></div>
<div class="r" style="left:638.7px;top:929.9px;width:143.6px;height:45.3px;border-radius:5px;background:#00c0c0;box-shadow:inset 1px 1.5px 1px rgba(0,0,0,0.35)"></div>
<div class="t" style="left:710.30px;top:983.07px;font-size:13.5px;line-height:13.5px;color:#2e2e2e;font-weight:bold;transform:translateX(-50%) scaleX(0.95);transform-origin:50% 0;">Cyan</div>
<div class="r" style="left:791.0px;top:923.8px;width:155.4px;height:80px;border-radius:5px;background:linear-gradient(#ababab,#8e8e8e 25%,#6a6a6a 60%,#585858)"></div>
<div class="r" style="left:796.6px;top:929.9px;width:143.6px;height:45.3px;border-radius:5px;background:#c000c0;box-shadow:inset 1px 1.5px 1px rgba(0,0,0,0.35)"></div>
<div class="t" style="left:868.20px;top:983.07px;font-size:13.5px;line-height:13.5px;color:#2e2e2e;font-weight:bold;transform:translateX(-50%) scaleX(0.95);transform-origin:50% 0;">Magenta</div>
<div class="r" style="left:948.9px;top:923.8px;width:155.4px;height:80px;border-radius:5px;background:linear-gradient(#ababab,#8e8e8e 25%,#6a6a6a 60%,#585858)"></div>
<div class="r" style="left:954.5px;top:929.9px;width:143.6px;height:45.3px;border-radius:5px;background:#c0c000;box-shadow:inset 1px 1.5px 1px rgba(0,0,0,0.35)"></div>
<div class="t" style="left:1026.10px;top:983.07px;font-size:13.5px;line-height:13.5px;color:#2e2e2e;font-weight:bold;transform:translateX(-50%) scaleX(0.95);transform-origin:50% 0;">Yellow</div>
<div class="r" style="left:1107.1px;top:924px;width:155px;height:80px;border-radius:5px;background:linear-gradient(#222 0,#252525 10%,#2e2e2e 100%)"></div>
<div class="r" style="left:1113.4px;top:929.5px;width:143px;height:45.2px;border-radius:6px;background:#fff"></div>
<div class="t" style="left:1185.00px;top:982.57px;font-size:13.5px;line-height:13.5px;color:#ffffff;font-weight:bold;transform:translateX(-50%) scaleX(1.0);transform-origin:50% 0;">100W</div>
<div class="r" style="left:1266px;top:923.2px;width:60px;height:80px;border-radius:5px;background:linear-gradient(#aaaaaa,#8a8a8a 20%,#707070)"></div>
<div class="r" style="left:1266.00px;top:945.50px;width:60.00px;height:1.50px;background:#3c3c3c"></div>
<div class="r" style="left:1266px;top:947px;width:60px;height:55px;background:linear-gradient(#9a9a9a,#777 50%,#5c5c5c)"></div>
<div class="r" style="left:1287.4px;top:925px;width:18px;height:18px;border-radius:50%;background:linear-gradient(#7a7a7a,#9a9a9a)"></div>
<svg class="r" style="left:1290.4px;top:929px" width="12" height="8"><path d="M0.5 7 L11.5 7 L6 1 Z" fill="#2c2c2c"/></svg>
<div class="r" style="left:1276px;top:954.4px;width:39.6px;height:38.2px;border:2.6px solid #262626;border-radius:5px;background:linear-gradient(#a8a8a8,#9a9a9a 55%,#888 55%,#8a8a8a)"></div>
<div class="r" style="left:1287.80px;top:964.50px;width:17.20px;height:17.50px;background:#050505"></div>
<div class="r" style="left:1326.7px;top:922.8px;width:283.3px;height:38.4px;border-radius:3px 0 0 0;background:linear-gradient(#b4b4b4,#8c8c8c 50%,#6a6a6a)"></div>
<div class="r" style="left:1384.55px;top:922.80px;width:1.40px;height:38.40px;background:#2a2a2a"></div>
<div class="r" style="left:1440.60px;top:922.80px;width:1.40px;height:38.40px;background:#2a2a2a"></div>
<div class="r" style="left:1496.70px;top:922.80px;width:1.40px;height:38.40px;background:#2a2a2a"></div>
<div class="r" style="left:1553.70px;top:922.80px;width:1.40px;height:38.40px;background:#2a2a2a"></div>
<div class="r" style="left:1326.70px;top:961.00px;width:342.30px;height:1.60px;background:#2e2e2e"></div>
<div class="r" style="left:1326.7px;top:962.6px;width:340px;height:40px;border-radius:3px 0 0 0;background:linear-gradient(#b4b4b4,#8e8e8e 50%,#6e6e6e)"></div>
<div class="r" style="left:1496.70px;top:962.60px;width:1.40px;height:37.40px;background:#2a2a2a"></div>
<div class="r" style="left:1655.00px;top:962.60px;width:14.00px;height:37.40px;background:linear-gradient(90deg,rgba(0,0,0,0),rgba(0,0,0,0.6))"></div>
<div class="r" style="left:1344.1px;top:930.2px;width:24px;height:24px;border-radius:50%;background:linear-gradient(#7e7e7e,#8a8a8a 50%,#a6a6a6)"></div>
<div class="r" style="left:1351.30px;top:937.10px;width:9.70px;height:9.70px;background:#2c2c2c"></div>
<div class="r" style="left:1401.3px;top:930.2px;width:24px;height:24px;border-radius:50%;background:linear-gradient(#7e7e7e,#8a8a8a 50%,#a6a6a6)"></div>
<svg class="r" style="left:1408px;top:936px" width="12" height="13"><path d="M1 0.5 L11 6.5 L1 12.5 Z" fill="#2c2c2c"/></svg>
<div class="r" style="left:1457.7px;top:930.2px;width:24px;height:24px;border-radius:50%;background:linear-gradient(#7e7e7e,#8a8a8a 50%,#a6a6a6)"></div>
<svg class="r" style="left:1460px;top:935px" width="20" height="15"><path d="M5 1 L2 1 L2 14 L5 14 M15 1 L18 1 L18 14 L15 14" stroke="#2c2c2c" stroke-width="2" fill="none"/><circle cx="8" cy="7.5" r="1" fill="#2c2c2c"/><circle cx="12" cy="7.5" r="1" fill="#2c2c2c"/></svg>
<div class="r" style="left:1514.4px;top:930.2px;width:24px;height:24px;border-radius:50%;background:linear-gradient(#7e7e7e,#8a8a8a 50%,#a6a6a6)"></div>
<svg class="r" style="left:1516px;top:936px" width="20" height="12"><path d="M10 6 C 7 1, 2 1, 2 6 C 2 11, 7 11, 10 6 C 13 1, 18 1, 18 6 C 18 11, 13 11, 10 6 Z" stroke="#2c2c2c" stroke-width="2.2" fill="none"/></svg>
<div class="r" style="left:1570.3px;top:930.2px;width:24px;height:24px;border-radius:50%;background:linear-gradient(#7e7e7e,#8a8a8a 50%,#a6a6a6)"></div>
<svg class="r" style="left:1573px;top:933px" width="18" height="18"><path d="M3.5 8 A6 6 0 0 1 13.5 4.5 M14.5 10 A6 6 0 0 1 4.5 13.5" stroke="#2c2c2c" stroke-width="2.4" fill="none"/><path d="M11 2 L16 2.5 L14.5 7 Z M7 16 L2 15.5 L3.5 11 Z" fill="#2c2c2c"/></svg>
<div class="r" style="left:1353.8px;top:968.8px;width:24px;height:24px;border-radius:50%;background:linear-gradient(#7e7e7e,#8a8a8a 50%,#a6a6a6)"></div>
<svg class="r" style="left:1359.8px;top:976.3px" width="12" height="11"><path d="M5.5 0.8 L1 5.5 L5.5 10.2 M11 0.8 L6.5 5.5 L11 10.2" stroke="#2c2c2c" stroke-width="1.7" fill="none"/></svg>
<div class="r" style="left:1620.6px;top:969.0px;width:24px;height:24px;border-radius:50%;background:linear-gradient(#7e7e7e,#8a8a8a 50%,#a6a6a6)"></div>
<svg class="r" style="left:1627.6px;top:975.8px" width="12" height="11"><path d="M1 0.8 L5.5 5.5 L1 10.2 M6.5 0.8 L11 5.5 L6.5 10.2" stroke="#2c2c2c" stroke-width="1.7" fill="none"/></svg>
<div class="t" style="left:1400.30px;top:966.63px;font-size:28.2px;line-height:28.2px;color:#2a2a2a;font-weight:normal;">Back</div>
<div class="t" style="left:1533.40px;top:966.63px;font-size:28.2px;line-height:28.2px;color:#2a2a2a;font-weight:normal;transform:scaleX(1.08);transform-origin:0 0;">Next</div>
<svg class="r" style="left:1620px;top:922px" width="36" height="38"><g transform="translate(18.5,19.5)" stroke="#1a1a1a" stroke-width="7" opacity="0.5"><line x1="0" y1="-16" x2="0" y2="16"/><line x1="-14" y1="-8" x2="14" y2="8"/><line x1="-14" y1="8" x2="14" y2="-8"/></g><g transform="translate(17.5,18.7)" stroke="#e30a0a" stroke-width="6.4"><line x1="0" y1="-16.5" x2="0" y2="16.5"/><line x1="-14.3" y1="-8.2" x2="14.3" y2="8.2"/><line x1="-14.3" y1="8.2" x2="14.3" y2="-8.2"/></g></svg>
<script>
(function(){
var M=[[3.2406,-1.5372,-0.4986],[-0.9689,1.8758,0.0415],[0.0557,-0.2040,1.0570]];
function xy2rgb(x,y){
  var X=x/y, Y=1, Z=(1-x-y)/y;
  var r=M[0][0]*X+M[0][1]*Y+M[0][2]*Z, g=M[1][0]*X+M[1][1]*Y+M[1][2]*Z, b=M[2][0]*X+M[2][1]*Y+M[2][2]*Z;
  if(r<0)r=0; if(g<0)g=0; if(b<0)b=0;
  var m=Math.max(r,g,b); if(m<=0) return [0,0,0];
  return [r/m,g/m,b/m];
}
function gam(c){return c<=0.0031308?12.92*c:1.055*Math.pow(c,1/2.4)-0.055;}
function uv2xy(u,v){var d=6*u-16*v+12;return [9*u/d,4*v/d];}
function xy2uv(x,y){var d=-2*x+12*y+3;return [4*x/d,9*y/d];}
// spectral locus xy 380..700 5nm
var L=[[0.1741,0.0050],[0.1740,0.0050],[0.1738,0.0049],[0.1736,0.0049],[0.1733,0.0048],[0.1730,0.0048],[0.1726,0.0048],[0.1721,0.0048],[0.1714,0.0051],[0.1703,0.0058],[0.1689,0.0069],[0.1669,0.0086],[0.1644,0.0109],[0.1611,0.0138],[0.1566,0.0177],[0.1510,0.0227],[0.1440,0.0297],[0.1355,0.0399],[0.1241,0.0578],[0.1096,0.0868],[0.0913,0.1327],[0.0687,0.2007],[0.0454,0.2950],[0.0235,0.4127],[0.0082,0.5384],[0.0039,0.6548],[0.0139,0.7502],[0.0389,0.8120],[0.0743,0.8338],[0.1142,0.8262],[0.1547,0.8059],[0.1929,0.7816],[0.2296,0.7543],[0.2658,0.7243],[0.3016,0.6923],[0.3373,0.6589],[0.3731,0.6245],[0.4087,0.5896],[0.4441,0.5547],[0.4788,0.5202],[0.5125,0.4866],[0.5448,0.4544],[0.5752,0.4242],[0.6029,0.3965],[0.6270,0.3725],[0.6482,0.3514],[0.6658,0.3340],[0.6801,0.3197],[0.6915,0.3083],[0.7006,0.2993],[0.7079,0.2920],[0.7140,0.2859],[0.7190,0.2809],[0.7230,0.2770],[0.7260,0.2740],[0.7283,0.2717],[0.7300,0.2700],[0.7311,0.2689],[0.7320,0.2680],[0.7334,0.2666],[0.7347,0.2653]];
var SU=1066.7, SV=820, CH=492;
function toPx(u,v){return [u*SU, CH-v*SV];}
var cv=document.getElementById('cie');
if(cv){
var ctx=cv.getContext('2d');
var w=cv.width,h=cv.height;
ctx.fillStyle='#242424';ctx.fillRect(0,0,w,h);
// triangle
var P={R:xy2uv(0.64,0.33),G:xy2uv(0.30,0.60),B:xy2uv(0.15,0.06)};
function sub(a,b){return [a[0]-b[0],a[1]-b[1]];}
function cross(a,b){return a[0]*b[1]-a[1]*b[0];}
function closest(p,a,b){var ab=sub(b,a),ap=sub(p,a);var t=(ap[0]*ab[0]+ap[1]*ab[1])/(ab[0]*ab[0]+ab[1]*ab[1]);if(t<0)t=0;if(t>1)t=1;var q=[a[0]+t*ab[0],a[1]+t*ab[1]];var dx=p[0]-q[0],dy=p[1]-q[1];return [q,dx*dx+dy*dy];}
var A=P.R,Bv=P.G,C=P.B;
var off=document.createElement('canvas');off.width=w;off.height=h;
var oc=off.getContext('2d');var img=oc.createImageData(w,h);var D=img.data;
var S=(window.CIE_SCALE_OUT||0.6);
for(var j=0;j<h;j++){for(var i=0;i<w;i++){
  // pixel coords -> px in "aspect" space: use pixel space for nearest-point so projection is visual
  var p=[i+0.5,j+0.5];
  var a=toPx(A[0],A[1]),b=toPx(Bv[0],Bv[1]),c=toPx(C[0],C[1]);
  var s1=cross(sub(b,a),sub(p,a)),s2=cross(sub(c,b),sub(p,b)),s3=cross(sub(a,c),sub(p,c));
  var inside=(s1>=0&&s2>=0&&s3>=0)||(s1<=0&&s2<=0&&s3<=0);
  var q=p, f=1;
  if(!inside){
    var den=cross(sub(b,a),sub(c,a));
    var l1=cross(sub(b,p),sub(c,p))/den, l2=cross(sub(c,p),sub(a,p))/den, l3=1-l1-l2;
    if(l1<0)l1=0; if(l2<0)l2=0; if(l3<0)l3=0;
    var sm=l1+l2+l3; l1/=sm; l2/=sm; l3/=sm;
    q=[l1*a[0]+l2*b[0]+l3*c[0], l1*a[1]+l2*b[1]+l3*c[1]]; f=S;
  }
  var u=q[0]/SU, v=(CH-q[1])/SV;
  var xy=uv2xy(u,v); var rgb=xy2rgb(xy[0],xy[1]);
  var k=(j*w+i)*4;
  var G=window.CIE_GAMMA;
  if(G){rgb=[gam(rgb[0]),gam(rgb[1]),gam(rgb[2])];}
  D[k]=rgb[0]*255*f;D[k+1]=rgb[1]*255*f;D[k+2]=rgb[2]*255*f;D[k+3]=255;
}}
oc.putImageData(img,0,0);
// locus path (catmull-rom)
var pts=L.map(function(e){var uv=xy2uv(e[0],e[1]);return toPx(uv[0],uv[1]);});
ctx.save();
ctx.beginPath();
ctx.moveTo(pts[0][0],pts[0][1]);
for(var n=0;n<pts.length-1;n++){
  var p0=pts[Math.max(n-1,0)],p1=pts[n],p2=pts[n+1],p3=pts[Math.min(n+2,pts.length-1)];
  ctx.bezierCurveTo(p1[0]+(p2[0]-p0[0])/6,p1[1]+(p2[1]-p0[1])/6,p2[0]-(p3[0]-p1[0])/6,p2[1]-(p3[1]-p1[1])/6,p2[0],p2[1]);
}
ctx.closePath();
ctx.clip();
ctx.drawImage(off,0,0);
ctx.restore();
// markers
function sq(u,v,col,lw){var p=toPx(u,v);ctx.strokeStyle=col;ctx.lineWidth=lw;ctx.strokeRect(p[0]-7.6,p[1]-7.6,13.6,13.6);}
function circ(u,v,fill){var p=toPx(u,v);ctx.beginPath();ctx.arc(p[0]-0.8,p[1]-0.6,4.4,0,Math.PI*2);ctx.fillStyle=fill;ctx.fill();ctx.strokeStyle='#151515';ctx.lineWidth=1.3;ctx.stroke();}
function mixuv(list){var X=0,Y=0,Z=0;list.forEach(function(e){X+=e[0];Y+=e[1];Z+=e[2];});var d=X+15*Y+3*Z;return [4*X/d,9*Y/d];}
var cR=[0.4124,0.2126,0.0193],cG=[0.3576,0.7152,0.1192],cB=[0.1805,0.0722,0.9505];
var T={R:P.R,G:P.G,B:P.B,C:mixuv([cG,cB]),M:mixuv([cR,cB]),Y:mixuv([cR,cG]),W:mixuv([cR,cG,cB])};
var meas=[[0.6481,0.3333,'#bb0c00'],[0.2984,0.6051,'#00bb12'],[0.1471,0.0577,'#000fbb'],[0.2210,0.3237,'#00bbc1'],[0.3151,0.1500,'#bb00c0'],[0.4181,0.5076,'#c2c000'],[0.3085,0.3257,'#c4c6c8'],[0.3088,0.3245,'#f8f8fd']];
['R','G','B','C','M','Y'].forEach(function(k){sq(T[k][0],T[k][1],'#f2f2f2',1.6);});
meas.forEach(function(m){var uv=xy2uv(m[0],m[1]);circ(uv[0],uv[1],m[2]);});
sq(T.W[0],T.W[1],'#000',2.0);
var uvw=xy2uv(0.3088,0.3245);circ(uvw[0],uvw[1],'#f8f8fd');
}
// CIE 1931 xy small chart
var c2=document.getElementById('xy');
if(c2){
var x2=c2.getContext('2d');var w2=c2.width,h2=c2.height;
var im=x2.createImageData(w2,h2);var d2=im.data;
var cx=w2/2, cy=h2/2, sx=6923, sy=3667;
for(var j=0;j<h2;j++){for(var i=0;i<w2;i++){
  var x=0.3127+(i+0.5-cx)/sx, y=0.329-(j+0.5-cy)/sy;
  var rgb=xy2rgb(x,y);
  var k=(j*w2+i)*4;
  d2[k]=rgb[0]*255;d2[k+1]=rgb[1]*255;d2[k+2]=rgb[2]*255;d2[k+3]=255;
}}
x2.putImageData(im,0,0);
function xp(x,y){return [cx+(x-0.3127)*sx, cy-(y-0.329)*sy];}
var p=xp(0.3127,0.329);x2.strokeStyle='#000';x2.lineWidth=2.4;x2.strokeRect(p[0]-6.3,p[1]-6.3,12.6,12.6);
[[0.3085,0.3257,'#a8a8a8'],[0.3088,0.3245,'#ffffff']].forEach(function(m){var q=xp(m[0],m[1]);x2.beginPath();x2.arc(q[0],q[1],4.3,0,Math.PI*2);x2.fillStyle=m[2];x2.fill();x2.strokeStyle='#222';x2.lineWidth=1;x2.stroke();});
}
})();

</script>
</body></html>
